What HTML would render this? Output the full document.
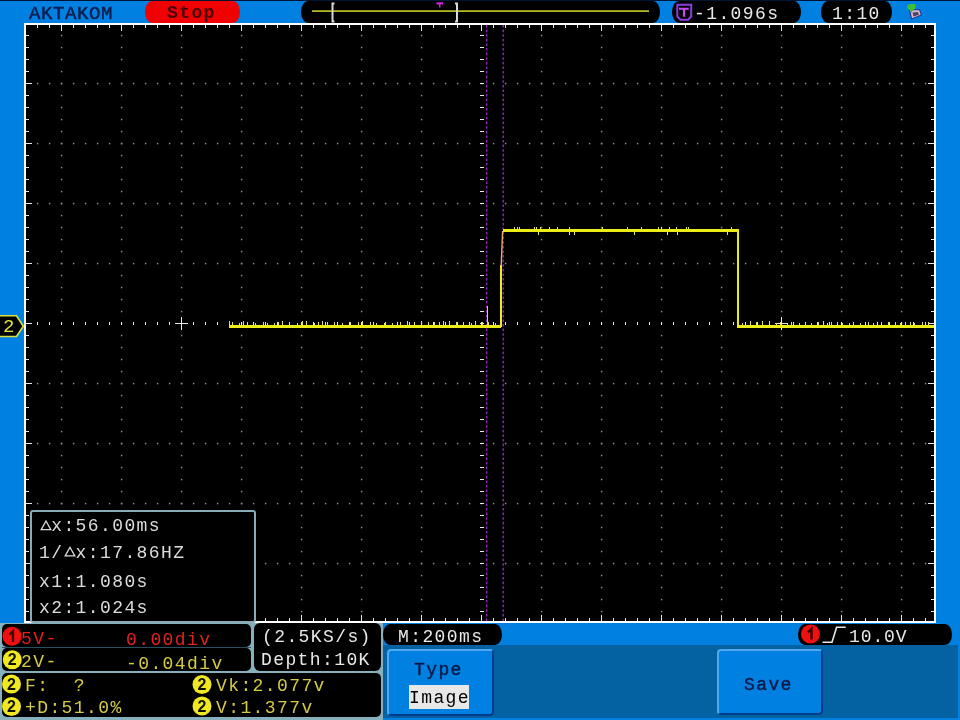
<!DOCTYPE html>
<html><head><meta charset="utf-8"><style>
html,body{margin:0;padding:0;}
body{width:960px;height:720px;position:relative;overflow:hidden;background:#0080e0;font-family:"Liberation Mono",monospace;}
.a{position:absolute;}
.t{position:absolute;white-space:pre;-webkit-font-smoothing:antialiased;will-change:transform;font-size:18px;letter-spacing:1.2px;line-height:1;}
</style></head><body>
<svg class="a" style="left:0;top:0" width="960" height="720" viewBox="0 0 960 720" shape-rendering="crispEdges">
<rect x="24" y="23" width="912" height="600" fill="#000" />
<rect x="24" y="23" width="912" height="2" fill="#fff" />
<rect x="24" y="621" width="912" height="2" fill="#fff" />
<rect x="24" y="23" width="2" height="600" fill="#fff" />
<rect x="934" y="23" width="2" height="600" fill="#fff" />
<rect x="37" y="25" width="1" height="3" fill="#e8e8e8" />
<rect x="37" y="618" width="1" height="3" fill="#e8e8e8" />
<rect x="49" y="25" width="1" height="3" fill="#e8e8e8" />
<rect x="49" y="618" width="1" height="3" fill="#e8e8e8" />
<rect x="61" y="25" width="1" height="6" fill="#e8e8e8" />
<rect x="61" y="615" width="1" height="6" fill="#e8e8e8" />
<rect x="73" y="25" width="1" height="3" fill="#e8e8e8" />
<rect x="73" y="618" width="1" height="3" fill="#e8e8e8" />
<rect x="85" y="25" width="1" height="3" fill="#e8e8e8" />
<rect x="85" y="618" width="1" height="3" fill="#e8e8e8" />
<rect x="97" y="25" width="1" height="3" fill="#e8e8e8" />
<rect x="97" y="618" width="1" height="3" fill="#e8e8e8" />
<rect x="109" y="25" width="1" height="3" fill="#e8e8e8" />
<rect x="109" y="618" width="1" height="3" fill="#e8e8e8" />
<rect x="121" y="25" width="1" height="6" fill="#e8e8e8" />
<rect x="121" y="615" width="1" height="6" fill="#e8e8e8" />
<rect x="133" y="25" width="1" height="3" fill="#e8e8e8" />
<rect x="133" y="618" width="1" height="3" fill="#e8e8e8" />
<rect x="145" y="25" width="1" height="3" fill="#e8e8e8" />
<rect x="145" y="618" width="1" height="3" fill="#e8e8e8" />
<rect x="157" y="25" width="1" height="3" fill="#e8e8e8" />
<rect x="157" y="618" width="1" height="3" fill="#e8e8e8" />
<rect x="169" y="25" width="1" height="3" fill="#e8e8e8" />
<rect x="169" y="618" width="1" height="3" fill="#e8e8e8" />
<rect x="181" y="25" width="1" height="6" fill="#e8e8e8" />
<rect x="181" y="615" width="1" height="6" fill="#e8e8e8" />
<rect x="193" y="25" width="1" height="3" fill="#e8e8e8" />
<rect x="193" y="618" width="1" height="3" fill="#e8e8e8" />
<rect x="205" y="25" width="1" height="3" fill="#e8e8e8" />
<rect x="205" y="618" width="1" height="3" fill="#e8e8e8" />
<rect x="217" y="25" width="1" height="3" fill="#e8e8e8" />
<rect x="217" y="618" width="1" height="3" fill="#e8e8e8" />
<rect x="229" y="25" width="1" height="3" fill="#e8e8e8" />
<rect x="229" y="618" width="1" height="3" fill="#e8e8e8" />
<rect x="241" y="25" width="1" height="6" fill="#e8e8e8" />
<rect x="241" y="615" width="1" height="6" fill="#e8e8e8" />
<rect x="253" y="25" width="1" height="3" fill="#e8e8e8" />
<rect x="253" y="618" width="1" height="3" fill="#e8e8e8" />
<rect x="265" y="25" width="1" height="3" fill="#e8e8e8" />
<rect x="265" y="618" width="1" height="3" fill="#e8e8e8" />
<rect x="277" y="25" width="1" height="3" fill="#e8e8e8" />
<rect x="277" y="618" width="1" height="3" fill="#e8e8e8" />
<rect x="289" y="25" width="1" height="3" fill="#e8e8e8" />
<rect x="289" y="618" width="1" height="3" fill="#e8e8e8" />
<rect x="301" y="25" width="1" height="6" fill="#e8e8e8" />
<rect x="301" y="615" width="1" height="6" fill="#e8e8e8" />
<rect x="313" y="25" width="1" height="3" fill="#e8e8e8" />
<rect x="313" y="618" width="1" height="3" fill="#e8e8e8" />
<rect x="325" y="25" width="1" height="3" fill="#e8e8e8" />
<rect x="325" y="618" width="1" height="3" fill="#e8e8e8" />
<rect x="337" y="25" width="1" height="3" fill="#e8e8e8" />
<rect x="337" y="618" width="1" height="3" fill="#e8e8e8" />
<rect x="349" y="25" width="1" height="3" fill="#e8e8e8" />
<rect x="349" y="618" width="1" height="3" fill="#e8e8e8" />
<rect x="361" y="25" width="1" height="6" fill="#e8e8e8" />
<rect x="361" y="615" width="1" height="6" fill="#e8e8e8" />
<rect x="373" y="25" width="1" height="3" fill="#e8e8e8" />
<rect x="373" y="618" width="1" height="3" fill="#e8e8e8" />
<rect x="385" y="25" width="1" height="3" fill="#e8e8e8" />
<rect x="385" y="618" width="1" height="3" fill="#e8e8e8" />
<rect x="397" y="25" width="1" height="3" fill="#e8e8e8" />
<rect x="397" y="618" width="1" height="3" fill="#e8e8e8" />
<rect x="409" y="25" width="1" height="3" fill="#e8e8e8" />
<rect x="409" y="618" width="1" height="3" fill="#e8e8e8" />
<rect x="421" y="25" width="1" height="6" fill="#e8e8e8" />
<rect x="421" y="615" width="1" height="6" fill="#e8e8e8" />
<rect x="433" y="25" width="1" height="3" fill="#e8e8e8" />
<rect x="433" y="618" width="1" height="3" fill="#e8e8e8" />
<rect x="445" y="25" width="1" height="3" fill="#e8e8e8" />
<rect x="445" y="618" width="1" height="3" fill="#e8e8e8" />
<rect x="457" y="25" width="1" height="3" fill="#e8e8e8" />
<rect x="457" y="618" width="1" height="3" fill="#e8e8e8" />
<rect x="469" y="25" width="1" height="3" fill="#e8e8e8" />
<rect x="469" y="618" width="1" height="3" fill="#e8e8e8" />
<rect x="481" y="25" width="1" height="6" fill="#e8e8e8" />
<rect x="481" y="615" width="1" height="6" fill="#e8e8e8" />
<rect x="493" y="25" width="1" height="3" fill="#e8e8e8" />
<rect x="493" y="618" width="1" height="3" fill="#e8e8e8" />
<rect x="505" y="25" width="1" height="3" fill="#e8e8e8" />
<rect x="505" y="618" width="1" height="3" fill="#e8e8e8" />
<rect x="517" y="25" width="1" height="3" fill="#e8e8e8" />
<rect x="517" y="618" width="1" height="3" fill="#e8e8e8" />
<rect x="529" y="25" width="1" height="3" fill="#e8e8e8" />
<rect x="529" y="618" width="1" height="3" fill="#e8e8e8" />
<rect x="541" y="25" width="1" height="6" fill="#e8e8e8" />
<rect x="541" y="615" width="1" height="6" fill="#e8e8e8" />
<rect x="553" y="25" width="1" height="3" fill="#e8e8e8" />
<rect x="553" y="618" width="1" height="3" fill="#e8e8e8" />
<rect x="565" y="25" width="1" height="3" fill="#e8e8e8" />
<rect x="565" y="618" width="1" height="3" fill="#e8e8e8" />
<rect x="577" y="25" width="1" height="3" fill="#e8e8e8" />
<rect x="577" y="618" width="1" height="3" fill="#e8e8e8" />
<rect x="589" y="25" width="1" height="3" fill="#e8e8e8" />
<rect x="589" y="618" width="1" height="3" fill="#e8e8e8" />
<rect x="601" y="25" width="1" height="6" fill="#e8e8e8" />
<rect x="601" y="615" width="1" height="6" fill="#e8e8e8" />
<rect x="613" y="25" width="1" height="3" fill="#e8e8e8" />
<rect x="613" y="618" width="1" height="3" fill="#e8e8e8" />
<rect x="625" y="25" width="1" height="3" fill="#e8e8e8" />
<rect x="625" y="618" width="1" height="3" fill="#e8e8e8" />
<rect x="637" y="25" width="1" height="3" fill="#e8e8e8" />
<rect x="637" y="618" width="1" height="3" fill="#e8e8e8" />
<rect x="649" y="25" width="1" height="3" fill="#e8e8e8" />
<rect x="649" y="618" width="1" height="3" fill="#e8e8e8" />
<rect x="661" y="25" width="1" height="6" fill="#e8e8e8" />
<rect x="661" y="615" width="1" height="6" fill="#e8e8e8" />
<rect x="673" y="25" width="1" height="3" fill="#e8e8e8" />
<rect x="673" y="618" width="1" height="3" fill="#e8e8e8" />
<rect x="685" y="25" width="1" height="3" fill="#e8e8e8" />
<rect x="685" y="618" width="1" height="3" fill="#e8e8e8" />
<rect x="697" y="25" width="1" height="3" fill="#e8e8e8" />
<rect x="697" y="618" width="1" height="3" fill="#e8e8e8" />
<rect x="709" y="25" width="1" height="3" fill="#e8e8e8" />
<rect x="709" y="618" width="1" height="3" fill="#e8e8e8" />
<rect x="721" y="25" width="1" height="6" fill="#e8e8e8" />
<rect x="721" y="615" width="1" height="6" fill="#e8e8e8" />
<rect x="733" y="25" width="1" height="3" fill="#e8e8e8" />
<rect x="733" y="618" width="1" height="3" fill="#e8e8e8" />
<rect x="745" y="25" width="1" height="3" fill="#e8e8e8" />
<rect x="745" y="618" width="1" height="3" fill="#e8e8e8" />
<rect x="757" y="25" width="1" height="3" fill="#e8e8e8" />
<rect x="757" y="618" width="1" height="3" fill="#e8e8e8" />
<rect x="769" y="25" width="1" height="3" fill="#e8e8e8" />
<rect x="769" y="618" width="1" height="3" fill="#e8e8e8" />
<rect x="781" y="25" width="1" height="6" fill="#e8e8e8" />
<rect x="781" y="615" width="1" height="6" fill="#e8e8e8" />
<rect x="793" y="25" width="1" height="3" fill="#e8e8e8" />
<rect x="793" y="618" width="1" height="3" fill="#e8e8e8" />
<rect x="805" y="25" width="1" height="3" fill="#e8e8e8" />
<rect x="805" y="618" width="1" height="3" fill="#e8e8e8" />
<rect x="817" y="25" width="1" height="3" fill="#e8e8e8" />
<rect x="817" y="618" width="1" height="3" fill="#e8e8e8" />
<rect x="829" y="25" width="1" height="3" fill="#e8e8e8" />
<rect x="829" y="618" width="1" height="3" fill="#e8e8e8" />
<rect x="841" y="25" width="1" height="6" fill="#e8e8e8" />
<rect x="841" y="615" width="1" height="6" fill="#e8e8e8" />
<rect x="853" y="25" width="1" height="3" fill="#e8e8e8" />
<rect x="853" y="618" width="1" height="3" fill="#e8e8e8" />
<rect x="865" y="25" width="1" height="3" fill="#e8e8e8" />
<rect x="865" y="618" width="1" height="3" fill="#e8e8e8" />
<rect x="877" y="25" width="1" height="3" fill="#e8e8e8" />
<rect x="877" y="618" width="1" height="3" fill="#e8e8e8" />
<rect x="889" y="25" width="1" height="3" fill="#e8e8e8" />
<rect x="889" y="618" width="1" height="3" fill="#e8e8e8" />
<rect x="901" y="25" width="1" height="6" fill="#e8e8e8" />
<rect x="901" y="615" width="1" height="6" fill="#e8e8e8" />
<rect x="913" y="25" width="1" height="3" fill="#e8e8e8" />
<rect x="913" y="618" width="1" height="3" fill="#e8e8e8" />
<rect x="925" y="25" width="1" height="3" fill="#e8e8e8" />
<rect x="925" y="618" width="1" height="3" fill="#e8e8e8" />
<rect x="26" y="35" width="3" height="1" fill="#e8e8e8" />
<rect x="931" y="35" width="3" height="1" fill="#e8e8e8" />
<rect x="26" y="47" width="3" height="1" fill="#e8e8e8" />
<rect x="931" y="47" width="3" height="1" fill="#e8e8e8" />
<rect x="26" y="59" width="3" height="1" fill="#e8e8e8" />
<rect x="931" y="59" width="3" height="1" fill="#e8e8e8" />
<rect x="26" y="71" width="3" height="1" fill="#e8e8e8" />
<rect x="931" y="71" width="3" height="1" fill="#e8e8e8" />
<rect x="26" y="83" width="6" height="1" fill="#e8e8e8" />
<rect x="928" y="83" width="6" height="1" fill="#e8e8e8" />
<rect x="26" y="95" width="3" height="1" fill="#e8e8e8" />
<rect x="931" y="95" width="3" height="1" fill="#e8e8e8" />
<rect x="26" y="107" width="3" height="1" fill="#e8e8e8" />
<rect x="931" y="107" width="3" height="1" fill="#e8e8e8" />
<rect x="26" y="119" width="3" height="1" fill="#e8e8e8" />
<rect x="931" y="119" width="3" height="1" fill="#e8e8e8" />
<rect x="26" y="131" width="3" height="1" fill="#e8e8e8" />
<rect x="931" y="131" width="3" height="1" fill="#e8e8e8" />
<rect x="26" y="143" width="6" height="1" fill="#e8e8e8" />
<rect x="928" y="143" width="6" height="1" fill="#e8e8e8" />
<rect x="26" y="155" width="3" height="1" fill="#e8e8e8" />
<rect x="931" y="155" width="3" height="1" fill="#e8e8e8" />
<rect x="26" y="167" width="3" height="1" fill="#e8e8e8" />
<rect x="931" y="167" width="3" height="1" fill="#e8e8e8" />
<rect x="26" y="179" width="3" height="1" fill="#e8e8e8" />
<rect x="931" y="179" width="3" height="1" fill="#e8e8e8" />
<rect x="26" y="191" width="3" height="1" fill="#e8e8e8" />
<rect x="931" y="191" width="3" height="1" fill="#e8e8e8" />
<rect x="26" y="203" width="6" height="1" fill="#e8e8e8" />
<rect x="928" y="203" width="6" height="1" fill="#e8e8e8" />
<rect x="26" y="215" width="3" height="1" fill="#e8e8e8" />
<rect x="931" y="215" width="3" height="1" fill="#e8e8e8" />
<rect x="26" y="227" width="3" height="1" fill="#e8e8e8" />
<rect x="931" y="227" width="3" height="1" fill="#e8e8e8" />
<rect x="26" y="239" width="3" height="1" fill="#e8e8e8" />
<rect x="931" y="239" width="3" height="1" fill="#e8e8e8" />
<rect x="26" y="251" width="3" height="1" fill="#e8e8e8" />
<rect x="931" y="251" width="3" height="1" fill="#e8e8e8" />
<rect x="26" y="263" width="6" height="1" fill="#e8e8e8" />
<rect x="928" y="263" width="6" height="1" fill="#e8e8e8" />
<rect x="26" y="275" width="3" height="1" fill="#e8e8e8" />
<rect x="931" y="275" width="3" height="1" fill="#e8e8e8" />
<rect x="26" y="287" width="3" height="1" fill="#e8e8e8" />
<rect x="931" y="287" width="3" height="1" fill="#e8e8e8" />
<rect x="26" y="299" width="3" height="1" fill="#e8e8e8" />
<rect x="931" y="299" width="3" height="1" fill="#e8e8e8" />
<rect x="26" y="311" width="3" height="1" fill="#e8e8e8" />
<rect x="931" y="311" width="3" height="1" fill="#e8e8e8" />
<rect x="26" y="323" width="6" height="1" fill="#e8e8e8" />
<rect x="928" y="323" width="6" height="1" fill="#e8e8e8" />
<rect x="26" y="335" width="3" height="1" fill="#e8e8e8" />
<rect x="931" y="335" width="3" height="1" fill="#e8e8e8" />
<rect x="26" y="347" width="3" height="1" fill="#e8e8e8" />
<rect x="931" y="347" width="3" height="1" fill="#e8e8e8" />
<rect x="26" y="359" width="3" height="1" fill="#e8e8e8" />
<rect x="931" y="359" width="3" height="1" fill="#e8e8e8" />
<rect x="26" y="371" width="3" height="1" fill="#e8e8e8" />
<rect x="931" y="371" width="3" height="1" fill="#e8e8e8" />
<rect x="26" y="383" width="6" height="1" fill="#e8e8e8" />
<rect x="928" y="383" width="6" height="1" fill="#e8e8e8" />
<rect x="26" y="395" width="3" height="1" fill="#e8e8e8" />
<rect x="931" y="395" width="3" height="1" fill="#e8e8e8" />
<rect x="26" y="407" width="3" height="1" fill="#e8e8e8" />
<rect x="931" y="407" width="3" height="1" fill="#e8e8e8" />
<rect x="26" y="419" width="3" height="1" fill="#e8e8e8" />
<rect x="931" y="419" width="3" height="1" fill="#e8e8e8" />
<rect x="26" y="431" width="3" height="1" fill="#e8e8e8" />
<rect x="931" y="431" width="3" height="1" fill="#e8e8e8" />
<rect x="26" y="443" width="6" height="1" fill="#e8e8e8" />
<rect x="928" y="443" width="6" height="1" fill="#e8e8e8" />
<rect x="26" y="455" width="3" height="1" fill="#e8e8e8" />
<rect x="931" y="455" width="3" height="1" fill="#e8e8e8" />
<rect x="26" y="467" width="3" height="1" fill="#e8e8e8" />
<rect x="931" y="467" width="3" height="1" fill="#e8e8e8" />
<rect x="26" y="479" width="3" height="1" fill="#e8e8e8" />
<rect x="931" y="479" width="3" height="1" fill="#e8e8e8" />
<rect x="26" y="491" width="3" height="1" fill="#e8e8e8" />
<rect x="931" y="491" width="3" height="1" fill="#e8e8e8" />
<rect x="26" y="503" width="6" height="1" fill="#e8e8e8" />
<rect x="928" y="503" width="6" height="1" fill="#e8e8e8" />
<rect x="26" y="515" width="3" height="1" fill="#e8e8e8" />
<rect x="931" y="515" width="3" height="1" fill="#e8e8e8" />
<rect x="26" y="527" width="3" height="1" fill="#e8e8e8" />
<rect x="931" y="527" width="3" height="1" fill="#e8e8e8" />
<rect x="26" y="539" width="3" height="1" fill="#e8e8e8" />
<rect x="931" y="539" width="3" height="1" fill="#e8e8e8" />
<rect x="26" y="551" width="3" height="1" fill="#e8e8e8" />
<rect x="931" y="551" width="3" height="1" fill="#e8e8e8" />
<rect x="26" y="563" width="6" height="1" fill="#e8e8e8" />
<rect x="928" y="563" width="6" height="1" fill="#e8e8e8" />
<rect x="26" y="575" width="3" height="1" fill="#e8e8e8" />
<rect x="931" y="575" width="3" height="1" fill="#e8e8e8" />
<rect x="26" y="587" width="3" height="1" fill="#e8e8e8" />
<rect x="931" y="587" width="3" height="1" fill="#e8e8e8" />
<rect x="26" y="599" width="3" height="1" fill="#e8e8e8" />
<rect x="931" y="599" width="3" height="1" fill="#e8e8e8" />
<rect x="26" y="611" width="3" height="1" fill="#e8e8e8" />
<rect x="931" y="611" width="3" height="1" fill="#e8e8e8" />
<rect x="60.85" y="34.8" width="1.5" height="1.5" fill="#8a8a8a" shape-rendering="auto"/>
<rect x="60.85" y="46.8" width="1.5" height="1.5" fill="#8a8a8a" shape-rendering="auto"/>
<rect x="60.85" y="58.8" width="1.5" height="1.5" fill="#8a8a8a" shape-rendering="auto"/>
<rect x="60.85" y="70.8" width="1.5" height="1.5" fill="#8a8a8a" shape-rendering="auto"/>
<rect x="60.85" y="82.8" width="1.5" height="1.5" fill="#8a8a8a" shape-rendering="auto"/>
<rect x="60.85" y="94.8" width="1.5" height="1.5" fill="#8a8a8a" shape-rendering="auto"/>
<rect x="60.85" y="106.8" width="1.5" height="1.5" fill="#8a8a8a" shape-rendering="auto"/>
<rect x="60.85" y="118.8" width="1.5" height="1.5" fill="#8a8a8a" shape-rendering="auto"/>
<rect x="60.85" y="130.8" width="1.5" height="1.5" fill="#8a8a8a" shape-rendering="auto"/>
<rect x="60.85" y="142.8" width="1.5" height="1.5" fill="#8a8a8a" shape-rendering="auto"/>
<rect x="60.85" y="154.8" width="1.5" height="1.5" fill="#8a8a8a" shape-rendering="auto"/>
<rect x="60.85" y="166.8" width="1.5" height="1.5" fill="#8a8a8a" shape-rendering="auto"/>
<rect x="60.85" y="178.8" width="1.5" height="1.5" fill="#8a8a8a" shape-rendering="auto"/>
<rect x="60.85" y="190.8" width="1.5" height="1.5" fill="#8a8a8a" shape-rendering="auto"/>
<rect x="60.85" y="202.8" width="1.5" height="1.5" fill="#8a8a8a" shape-rendering="auto"/>
<rect x="60.85" y="214.8" width="1.5" height="1.5" fill="#8a8a8a" shape-rendering="auto"/>
<rect x="60.85" y="226.8" width="1.5" height="1.5" fill="#8a8a8a" shape-rendering="auto"/>
<rect x="60.85" y="238.8" width="1.5" height="1.5" fill="#8a8a8a" shape-rendering="auto"/>
<rect x="60.85" y="250.8" width="1.5" height="1.5" fill="#8a8a8a" shape-rendering="auto"/>
<rect x="60.85" y="262.8" width="1.5" height="1.5" fill="#8a8a8a" shape-rendering="auto"/>
<rect x="60.85" y="274.8" width="1.5" height="1.5" fill="#8a8a8a" shape-rendering="auto"/>
<rect x="60.85" y="286.8" width="1.5" height="1.5" fill="#8a8a8a" shape-rendering="auto"/>
<rect x="60.85" y="298.8" width="1.5" height="1.5" fill="#8a8a8a" shape-rendering="auto"/>
<rect x="60.85" y="310.8" width="1.5" height="1.5" fill="#8a8a8a" shape-rendering="auto"/>
<rect x="60.85" y="322.8" width="1.5" height="1.5" fill="#8a8a8a" shape-rendering="auto"/>
<rect x="60.85" y="334.8" width="1.5" height="1.5" fill="#8a8a8a" shape-rendering="auto"/>
<rect x="60.85" y="346.8" width="1.5" height="1.5" fill="#8a8a8a" shape-rendering="auto"/>
<rect x="60.85" y="358.8" width="1.5" height="1.5" fill="#8a8a8a" shape-rendering="auto"/>
<rect x="60.85" y="370.8" width="1.5" height="1.5" fill="#8a8a8a" shape-rendering="auto"/>
<rect x="60.85" y="382.8" width="1.5" height="1.5" fill="#8a8a8a" shape-rendering="auto"/>
<rect x="60.85" y="394.8" width="1.5" height="1.5" fill="#8a8a8a" shape-rendering="auto"/>
<rect x="60.85" y="406.8" width="1.5" height="1.5" fill="#8a8a8a" shape-rendering="auto"/>
<rect x="60.85" y="418.8" width="1.5" height="1.5" fill="#8a8a8a" shape-rendering="auto"/>
<rect x="60.85" y="430.8" width="1.5" height="1.5" fill="#8a8a8a" shape-rendering="auto"/>
<rect x="60.85" y="442.8" width="1.5" height="1.5" fill="#8a8a8a" shape-rendering="auto"/>
<rect x="60.85" y="454.8" width="1.5" height="1.5" fill="#8a8a8a" shape-rendering="auto"/>
<rect x="60.85" y="466.8" width="1.5" height="1.5" fill="#8a8a8a" shape-rendering="auto"/>
<rect x="60.85" y="478.8" width="1.5" height="1.5" fill="#8a8a8a" shape-rendering="auto"/>
<rect x="60.85" y="490.8" width="1.5" height="1.5" fill="#8a8a8a" shape-rendering="auto"/>
<rect x="60.85" y="502.8" width="1.5" height="1.5" fill="#8a8a8a" shape-rendering="auto"/>
<rect x="60.85" y="514.8" width="1.5" height="1.5" fill="#8a8a8a" shape-rendering="auto"/>
<rect x="60.85" y="526.8" width="1.5" height="1.5" fill="#8a8a8a" shape-rendering="auto"/>
<rect x="60.85" y="538.8" width="1.5" height="1.5" fill="#8a8a8a" shape-rendering="auto"/>
<rect x="60.85" y="550.8" width="1.5" height="1.5" fill="#8a8a8a" shape-rendering="auto"/>
<rect x="60.85" y="562.8" width="1.5" height="1.5" fill="#8a8a8a" shape-rendering="auto"/>
<rect x="60.85" y="574.8" width="1.5" height="1.5" fill="#8a8a8a" shape-rendering="auto"/>
<rect x="60.85" y="586.8" width="1.5" height="1.5" fill="#8a8a8a" shape-rendering="auto"/>
<rect x="60.85" y="598.8" width="1.5" height="1.5" fill="#8a8a8a" shape-rendering="auto"/>
<rect x="60.85" y="610.8" width="1.5" height="1.5" fill="#8a8a8a" shape-rendering="auto"/>
<rect x="120.85" y="34.8" width="1.5" height="1.5" fill="#8a8a8a" shape-rendering="auto"/>
<rect x="120.85" y="46.8" width="1.5" height="1.5" fill="#8a8a8a" shape-rendering="auto"/>
<rect x="120.85" y="58.8" width="1.5" height="1.5" fill="#8a8a8a" shape-rendering="auto"/>
<rect x="120.85" y="70.8" width="1.5" height="1.5" fill="#8a8a8a" shape-rendering="auto"/>
<rect x="120.85" y="82.8" width="1.5" height="1.5" fill="#8a8a8a" shape-rendering="auto"/>
<rect x="120.85" y="94.8" width="1.5" height="1.5" fill="#8a8a8a" shape-rendering="auto"/>
<rect x="120.85" y="106.8" width="1.5" height="1.5" fill="#8a8a8a" shape-rendering="auto"/>
<rect x="120.85" y="118.8" width="1.5" height="1.5" fill="#8a8a8a" shape-rendering="auto"/>
<rect x="120.85" y="130.8" width="1.5" height="1.5" fill="#8a8a8a" shape-rendering="auto"/>
<rect x="120.85" y="142.8" width="1.5" height="1.5" fill="#8a8a8a" shape-rendering="auto"/>
<rect x="120.85" y="154.8" width="1.5" height="1.5" fill="#8a8a8a" shape-rendering="auto"/>
<rect x="120.85" y="166.8" width="1.5" height="1.5" fill="#8a8a8a" shape-rendering="auto"/>
<rect x="120.85" y="178.8" width="1.5" height="1.5" fill="#8a8a8a" shape-rendering="auto"/>
<rect x="120.85" y="190.8" width="1.5" height="1.5" fill="#8a8a8a" shape-rendering="auto"/>
<rect x="120.85" y="202.8" width="1.5" height="1.5" fill="#8a8a8a" shape-rendering="auto"/>
<rect x="120.85" y="214.8" width="1.5" height="1.5" fill="#8a8a8a" shape-rendering="auto"/>
<rect x="120.85" y="226.8" width="1.5" height="1.5" fill="#8a8a8a" shape-rendering="auto"/>
<rect x="120.85" y="238.8" width="1.5" height="1.5" fill="#8a8a8a" shape-rendering="auto"/>
<rect x="120.85" y="250.8" width="1.5" height="1.5" fill="#8a8a8a" shape-rendering="auto"/>
<rect x="120.85" y="262.8" width="1.5" height="1.5" fill="#8a8a8a" shape-rendering="auto"/>
<rect x="120.85" y="274.8" width="1.5" height="1.5" fill="#8a8a8a" shape-rendering="auto"/>
<rect x="120.85" y="286.8" width="1.5" height="1.5" fill="#8a8a8a" shape-rendering="auto"/>
<rect x="120.85" y="298.8" width="1.5" height="1.5" fill="#8a8a8a" shape-rendering="auto"/>
<rect x="120.85" y="310.8" width="1.5" height="1.5" fill="#8a8a8a" shape-rendering="auto"/>
<rect x="120.85" y="322.8" width="1.5" height="1.5" fill="#8a8a8a" shape-rendering="auto"/>
<rect x="120.85" y="334.8" width="1.5" height="1.5" fill="#8a8a8a" shape-rendering="auto"/>
<rect x="120.85" y="346.8" width="1.5" height="1.5" fill="#8a8a8a" shape-rendering="auto"/>
<rect x="120.85" y="358.8" width="1.5" height="1.5" fill="#8a8a8a" shape-rendering="auto"/>
<rect x="120.85" y="370.8" width="1.5" height="1.5" fill="#8a8a8a" shape-rendering="auto"/>
<rect x="120.85" y="382.8" width="1.5" height="1.5" fill="#8a8a8a" shape-rendering="auto"/>
<rect x="120.85" y="394.8" width="1.5" height="1.5" fill="#8a8a8a" shape-rendering="auto"/>
<rect x="120.85" y="406.8" width="1.5" height="1.5" fill="#8a8a8a" shape-rendering="auto"/>
<rect x="120.85" y="418.8" width="1.5" height="1.5" fill="#8a8a8a" shape-rendering="auto"/>
<rect x="120.85" y="430.8" width="1.5" height="1.5" fill="#8a8a8a" shape-rendering="auto"/>
<rect x="120.85" y="442.8" width="1.5" height="1.5" fill="#8a8a8a" shape-rendering="auto"/>
<rect x="120.85" y="454.8" width="1.5" height="1.5" fill="#8a8a8a" shape-rendering="auto"/>
<rect x="120.85" y="466.8" width="1.5" height="1.5" fill="#8a8a8a" shape-rendering="auto"/>
<rect x="120.85" y="478.8" width="1.5" height="1.5" fill="#8a8a8a" shape-rendering="auto"/>
<rect x="120.85" y="490.8" width="1.5" height="1.5" fill="#8a8a8a" shape-rendering="auto"/>
<rect x="120.85" y="502.8" width="1.5" height="1.5" fill="#8a8a8a" shape-rendering="auto"/>
<rect x="120.85" y="514.8" width="1.5" height="1.5" fill="#8a8a8a" shape-rendering="auto"/>
<rect x="120.85" y="526.8" width="1.5" height="1.5" fill="#8a8a8a" shape-rendering="auto"/>
<rect x="120.85" y="538.8" width="1.5" height="1.5" fill="#8a8a8a" shape-rendering="auto"/>
<rect x="120.85" y="550.8" width="1.5" height="1.5" fill="#8a8a8a" shape-rendering="auto"/>
<rect x="120.85" y="562.8" width="1.5" height="1.5" fill="#8a8a8a" shape-rendering="auto"/>
<rect x="120.85" y="574.8" width="1.5" height="1.5" fill="#8a8a8a" shape-rendering="auto"/>
<rect x="120.85" y="586.8" width="1.5" height="1.5" fill="#8a8a8a" shape-rendering="auto"/>
<rect x="120.85" y="598.8" width="1.5" height="1.5" fill="#8a8a8a" shape-rendering="auto"/>
<rect x="120.85" y="610.8" width="1.5" height="1.5" fill="#8a8a8a" shape-rendering="auto"/>
<rect x="180.85" y="34.8" width="1.5" height="1.5" fill="#8a8a8a" shape-rendering="auto"/>
<rect x="180.85" y="46.8" width="1.5" height="1.5" fill="#8a8a8a" shape-rendering="auto"/>
<rect x="180.85" y="58.8" width="1.5" height="1.5" fill="#8a8a8a" shape-rendering="auto"/>
<rect x="180.85" y="70.8" width="1.5" height="1.5" fill="#8a8a8a" shape-rendering="auto"/>
<rect x="180.85" y="82.8" width="1.5" height="1.5" fill="#8a8a8a" shape-rendering="auto"/>
<rect x="180.85" y="94.8" width="1.5" height="1.5" fill="#8a8a8a" shape-rendering="auto"/>
<rect x="180.85" y="106.8" width="1.5" height="1.5" fill="#8a8a8a" shape-rendering="auto"/>
<rect x="180.85" y="118.8" width="1.5" height="1.5" fill="#8a8a8a" shape-rendering="auto"/>
<rect x="180.85" y="130.8" width="1.5" height="1.5" fill="#8a8a8a" shape-rendering="auto"/>
<rect x="180.85" y="142.8" width="1.5" height="1.5" fill="#8a8a8a" shape-rendering="auto"/>
<rect x="180.85" y="154.8" width="1.5" height="1.5" fill="#8a8a8a" shape-rendering="auto"/>
<rect x="180.85" y="166.8" width="1.5" height="1.5" fill="#8a8a8a" shape-rendering="auto"/>
<rect x="180.85" y="178.8" width="1.5" height="1.5" fill="#8a8a8a" shape-rendering="auto"/>
<rect x="180.85" y="190.8" width="1.5" height="1.5" fill="#8a8a8a" shape-rendering="auto"/>
<rect x="180.85" y="202.8" width="1.5" height="1.5" fill="#8a8a8a" shape-rendering="auto"/>
<rect x="180.85" y="214.8" width="1.5" height="1.5" fill="#8a8a8a" shape-rendering="auto"/>
<rect x="180.85" y="226.8" width="1.5" height="1.5" fill="#8a8a8a" shape-rendering="auto"/>
<rect x="180.85" y="238.8" width="1.5" height="1.5" fill="#8a8a8a" shape-rendering="auto"/>
<rect x="180.85" y="250.8" width="1.5" height="1.5" fill="#8a8a8a" shape-rendering="auto"/>
<rect x="180.85" y="262.8" width="1.5" height="1.5" fill="#8a8a8a" shape-rendering="auto"/>
<rect x="180.85" y="274.8" width="1.5" height="1.5" fill="#8a8a8a" shape-rendering="auto"/>
<rect x="180.85" y="286.8" width="1.5" height="1.5" fill="#8a8a8a" shape-rendering="auto"/>
<rect x="180.85" y="298.8" width="1.5" height="1.5" fill="#8a8a8a" shape-rendering="auto"/>
<rect x="180.85" y="310.8" width="1.5" height="1.5" fill="#8a8a8a" shape-rendering="auto"/>
<rect x="180.85" y="322.8" width="1.5" height="1.5" fill="#8a8a8a" shape-rendering="auto"/>
<rect x="180.85" y="334.8" width="1.5" height="1.5" fill="#8a8a8a" shape-rendering="auto"/>
<rect x="180.85" y="346.8" width="1.5" height="1.5" fill="#8a8a8a" shape-rendering="auto"/>
<rect x="180.85" y="358.8" width="1.5" height="1.5" fill="#8a8a8a" shape-rendering="auto"/>
<rect x="180.85" y="370.8" width="1.5" height="1.5" fill="#8a8a8a" shape-rendering="auto"/>
<rect x="180.85" y="382.8" width="1.5" height="1.5" fill="#8a8a8a" shape-rendering="auto"/>
<rect x="180.85" y="394.8" width="1.5" height="1.5" fill="#8a8a8a" shape-rendering="auto"/>
<rect x="180.85" y="406.8" width="1.5" height="1.5" fill="#8a8a8a" shape-rendering="auto"/>
<rect x="180.85" y="418.8" width="1.5" height="1.5" fill="#8a8a8a" shape-rendering="auto"/>
<rect x="180.85" y="430.8" width="1.5" height="1.5" fill="#8a8a8a" shape-rendering="auto"/>
<rect x="180.85" y="442.8" width="1.5" height="1.5" fill="#8a8a8a" shape-rendering="auto"/>
<rect x="180.85" y="454.8" width="1.5" height="1.5" fill="#8a8a8a" shape-rendering="auto"/>
<rect x="180.85" y="466.8" width="1.5" height="1.5" fill="#8a8a8a" shape-rendering="auto"/>
<rect x="180.85" y="478.8" width="1.5" height="1.5" fill="#8a8a8a" shape-rendering="auto"/>
<rect x="180.85" y="490.8" width="1.5" height="1.5" fill="#8a8a8a" shape-rendering="auto"/>
<rect x="180.85" y="502.8" width="1.5" height="1.5" fill="#8a8a8a" shape-rendering="auto"/>
<rect x="180.85" y="514.8" width="1.5" height="1.5" fill="#8a8a8a" shape-rendering="auto"/>
<rect x="180.85" y="526.8" width="1.5" height="1.5" fill="#8a8a8a" shape-rendering="auto"/>
<rect x="180.85" y="538.8" width="1.5" height="1.5" fill="#8a8a8a" shape-rendering="auto"/>
<rect x="180.85" y="550.8" width="1.5" height="1.5" fill="#8a8a8a" shape-rendering="auto"/>
<rect x="180.85" y="562.8" width="1.5" height="1.5" fill="#8a8a8a" shape-rendering="auto"/>
<rect x="180.85" y="574.8" width="1.5" height="1.5" fill="#8a8a8a" shape-rendering="auto"/>
<rect x="180.85" y="586.8" width="1.5" height="1.5" fill="#8a8a8a" shape-rendering="auto"/>
<rect x="180.85" y="598.8" width="1.5" height="1.5" fill="#8a8a8a" shape-rendering="auto"/>
<rect x="180.85" y="610.8" width="1.5" height="1.5" fill="#8a8a8a" shape-rendering="auto"/>
<rect x="240.85" y="34.8" width="1.5" height="1.5" fill="#8a8a8a" shape-rendering="auto"/>
<rect x="240.85" y="46.8" width="1.5" height="1.5" fill="#8a8a8a" shape-rendering="auto"/>
<rect x="240.85" y="58.8" width="1.5" height="1.5" fill="#8a8a8a" shape-rendering="auto"/>
<rect x="240.85" y="70.8" width="1.5" height="1.5" fill="#8a8a8a" shape-rendering="auto"/>
<rect x="240.85" y="82.8" width="1.5" height="1.5" fill="#8a8a8a" shape-rendering="auto"/>
<rect x="240.85" y="94.8" width="1.5" height="1.5" fill="#8a8a8a" shape-rendering="auto"/>
<rect x="240.85" y="106.8" width="1.5" height="1.5" fill="#8a8a8a" shape-rendering="auto"/>
<rect x="240.85" y="118.8" width="1.5" height="1.5" fill="#8a8a8a" shape-rendering="auto"/>
<rect x="240.85" y="130.8" width="1.5" height="1.5" fill="#8a8a8a" shape-rendering="auto"/>
<rect x="240.85" y="142.8" width="1.5" height="1.5" fill="#8a8a8a" shape-rendering="auto"/>
<rect x="240.85" y="154.8" width="1.5" height="1.5" fill="#8a8a8a" shape-rendering="auto"/>
<rect x="240.85" y="166.8" width="1.5" height="1.5" fill="#8a8a8a" shape-rendering="auto"/>
<rect x="240.85" y="178.8" width="1.5" height="1.5" fill="#8a8a8a" shape-rendering="auto"/>
<rect x="240.85" y="190.8" width="1.5" height="1.5" fill="#8a8a8a" shape-rendering="auto"/>
<rect x="240.85" y="202.8" width="1.5" height="1.5" fill="#8a8a8a" shape-rendering="auto"/>
<rect x="240.85" y="214.8" width="1.5" height="1.5" fill="#8a8a8a" shape-rendering="auto"/>
<rect x="240.85" y="226.8" width="1.5" height="1.5" fill="#8a8a8a" shape-rendering="auto"/>
<rect x="240.85" y="238.8" width="1.5" height="1.5" fill="#8a8a8a" shape-rendering="auto"/>
<rect x="240.85" y="250.8" width="1.5" height="1.5" fill="#8a8a8a" shape-rendering="auto"/>
<rect x="240.85" y="262.8" width="1.5" height="1.5" fill="#8a8a8a" shape-rendering="auto"/>
<rect x="240.85" y="274.8" width="1.5" height="1.5" fill="#8a8a8a" shape-rendering="auto"/>
<rect x="240.85" y="286.8" width="1.5" height="1.5" fill="#8a8a8a" shape-rendering="auto"/>
<rect x="240.85" y="298.8" width="1.5" height="1.5" fill="#8a8a8a" shape-rendering="auto"/>
<rect x="240.85" y="310.8" width="1.5" height="1.5" fill="#8a8a8a" shape-rendering="auto"/>
<rect x="240.85" y="322.8" width="1.5" height="1.5" fill="#8a8a8a" shape-rendering="auto"/>
<rect x="240.85" y="334.8" width="1.5" height="1.5" fill="#8a8a8a" shape-rendering="auto"/>
<rect x="240.85" y="346.8" width="1.5" height="1.5" fill="#8a8a8a" shape-rendering="auto"/>
<rect x="240.85" y="358.8" width="1.5" height="1.5" fill="#8a8a8a" shape-rendering="auto"/>
<rect x="240.85" y="370.8" width="1.5" height="1.5" fill="#8a8a8a" shape-rendering="auto"/>
<rect x="240.85" y="382.8" width="1.5" height="1.5" fill="#8a8a8a" shape-rendering="auto"/>
<rect x="240.85" y="394.8" width="1.5" height="1.5" fill="#8a8a8a" shape-rendering="auto"/>
<rect x="240.85" y="406.8" width="1.5" height="1.5" fill="#8a8a8a" shape-rendering="auto"/>
<rect x="240.85" y="418.8" width="1.5" height="1.5" fill="#8a8a8a" shape-rendering="auto"/>
<rect x="240.85" y="430.8" width="1.5" height="1.5" fill="#8a8a8a" shape-rendering="auto"/>
<rect x="240.85" y="442.8" width="1.5" height="1.5" fill="#8a8a8a" shape-rendering="auto"/>
<rect x="240.85" y="454.8" width="1.5" height="1.5" fill="#8a8a8a" shape-rendering="auto"/>
<rect x="240.85" y="466.8" width="1.5" height="1.5" fill="#8a8a8a" shape-rendering="auto"/>
<rect x="240.85" y="478.8" width="1.5" height="1.5" fill="#8a8a8a" shape-rendering="auto"/>
<rect x="240.85" y="490.8" width="1.5" height="1.5" fill="#8a8a8a" shape-rendering="auto"/>
<rect x="240.85" y="502.8" width="1.5" height="1.5" fill="#8a8a8a" shape-rendering="auto"/>
<rect x="240.85" y="514.8" width="1.5" height="1.5" fill="#8a8a8a" shape-rendering="auto"/>
<rect x="240.85" y="526.8" width="1.5" height="1.5" fill="#8a8a8a" shape-rendering="auto"/>
<rect x="240.85" y="538.8" width="1.5" height="1.5" fill="#8a8a8a" shape-rendering="auto"/>
<rect x="240.85" y="550.8" width="1.5" height="1.5" fill="#8a8a8a" shape-rendering="auto"/>
<rect x="240.85" y="562.8" width="1.5" height="1.5" fill="#8a8a8a" shape-rendering="auto"/>
<rect x="240.85" y="574.8" width="1.5" height="1.5" fill="#8a8a8a" shape-rendering="auto"/>
<rect x="240.85" y="586.8" width="1.5" height="1.5" fill="#8a8a8a" shape-rendering="auto"/>
<rect x="240.85" y="598.8" width="1.5" height="1.5" fill="#8a8a8a" shape-rendering="auto"/>
<rect x="240.85" y="610.8" width="1.5" height="1.5" fill="#8a8a8a" shape-rendering="auto"/>
<rect x="300.85" y="34.8" width="1.5" height="1.5" fill="#8a8a8a" shape-rendering="auto"/>
<rect x="300.85" y="46.8" width="1.5" height="1.5" fill="#8a8a8a" shape-rendering="auto"/>
<rect x="300.85" y="58.8" width="1.5" height="1.5" fill="#8a8a8a" shape-rendering="auto"/>
<rect x="300.85" y="70.8" width="1.5" height="1.5" fill="#8a8a8a" shape-rendering="auto"/>
<rect x="300.85" y="82.8" width="1.5" height="1.5" fill="#8a8a8a" shape-rendering="auto"/>
<rect x="300.85" y="94.8" width="1.5" height="1.5" fill="#8a8a8a" shape-rendering="auto"/>
<rect x="300.85" y="106.8" width="1.5" height="1.5" fill="#8a8a8a" shape-rendering="auto"/>
<rect x="300.85" y="118.8" width="1.5" height="1.5" fill="#8a8a8a" shape-rendering="auto"/>
<rect x="300.85" y="130.8" width="1.5" height="1.5" fill="#8a8a8a" shape-rendering="auto"/>
<rect x="300.85" y="142.8" width="1.5" height="1.5" fill="#8a8a8a" shape-rendering="auto"/>
<rect x="300.85" y="154.8" width="1.5" height="1.5" fill="#8a8a8a" shape-rendering="auto"/>
<rect x="300.85" y="166.8" width="1.5" height="1.5" fill="#8a8a8a" shape-rendering="auto"/>
<rect x="300.85" y="178.8" width="1.5" height="1.5" fill="#8a8a8a" shape-rendering="auto"/>
<rect x="300.85" y="190.8" width="1.5" height="1.5" fill="#8a8a8a" shape-rendering="auto"/>
<rect x="300.85" y="202.8" width="1.5" height="1.5" fill="#8a8a8a" shape-rendering="auto"/>
<rect x="300.85" y="214.8" width="1.5" height="1.5" fill="#8a8a8a" shape-rendering="auto"/>
<rect x="300.85" y="226.8" width="1.5" height="1.5" fill="#8a8a8a" shape-rendering="auto"/>
<rect x="300.85" y="238.8" width="1.5" height="1.5" fill="#8a8a8a" shape-rendering="auto"/>
<rect x="300.85" y="250.8" width="1.5" height="1.5" fill="#8a8a8a" shape-rendering="auto"/>
<rect x="300.85" y="262.8" width="1.5" height="1.5" fill="#8a8a8a" shape-rendering="auto"/>
<rect x="300.85" y="274.8" width="1.5" height="1.5" fill="#8a8a8a" shape-rendering="auto"/>
<rect x="300.85" y="286.8" width="1.5" height="1.5" fill="#8a8a8a" shape-rendering="auto"/>
<rect x="300.85" y="298.8" width="1.5" height="1.5" fill="#8a8a8a" shape-rendering="auto"/>
<rect x="300.85" y="310.8" width="1.5" height="1.5" fill="#8a8a8a" shape-rendering="auto"/>
<rect x="300.85" y="322.8" width="1.5" height="1.5" fill="#8a8a8a" shape-rendering="auto"/>
<rect x="300.85" y="334.8" width="1.5" height="1.5" fill="#8a8a8a" shape-rendering="auto"/>
<rect x="300.85" y="346.8" width="1.5" height="1.5" fill="#8a8a8a" shape-rendering="auto"/>
<rect x="300.85" y="358.8" width="1.5" height="1.5" fill="#8a8a8a" shape-rendering="auto"/>
<rect x="300.85" y="370.8" width="1.5" height="1.5" fill="#8a8a8a" shape-rendering="auto"/>
<rect x="300.85" y="382.8" width="1.5" height="1.5" fill="#8a8a8a" shape-rendering="auto"/>
<rect x="300.85" y="394.8" width="1.5" height="1.5" fill="#8a8a8a" shape-rendering="auto"/>
<rect x="300.85" y="406.8" width="1.5" height="1.5" fill="#8a8a8a" shape-rendering="auto"/>
<rect x="300.85" y="418.8" width="1.5" height="1.5" fill="#8a8a8a" shape-rendering="auto"/>
<rect x="300.85" y="430.8" width="1.5" height="1.5" fill="#8a8a8a" shape-rendering="auto"/>
<rect x="300.85" y="442.8" width="1.5" height="1.5" fill="#8a8a8a" shape-rendering="auto"/>
<rect x="300.85" y="454.8" width="1.5" height="1.5" fill="#8a8a8a" shape-rendering="auto"/>
<rect x="300.85" y="466.8" width="1.5" height="1.5" fill="#8a8a8a" shape-rendering="auto"/>
<rect x="300.85" y="478.8" width="1.5" height="1.5" fill="#8a8a8a" shape-rendering="auto"/>
<rect x="300.85" y="490.8" width="1.5" height="1.5" fill="#8a8a8a" shape-rendering="auto"/>
<rect x="300.85" y="502.8" width="1.5" height="1.5" fill="#8a8a8a" shape-rendering="auto"/>
<rect x="300.85" y="514.8" width="1.5" height="1.5" fill="#8a8a8a" shape-rendering="auto"/>
<rect x="300.85" y="526.8" width="1.5" height="1.5" fill="#8a8a8a" shape-rendering="auto"/>
<rect x="300.85" y="538.8" width="1.5" height="1.5" fill="#8a8a8a" shape-rendering="auto"/>
<rect x="300.85" y="550.8" width="1.5" height="1.5" fill="#8a8a8a" shape-rendering="auto"/>
<rect x="300.85" y="562.8" width="1.5" height="1.5" fill="#8a8a8a" shape-rendering="auto"/>
<rect x="300.85" y="574.8" width="1.5" height="1.5" fill="#8a8a8a" shape-rendering="auto"/>
<rect x="300.85" y="586.8" width="1.5" height="1.5" fill="#8a8a8a" shape-rendering="auto"/>
<rect x="300.85" y="598.8" width="1.5" height="1.5" fill="#8a8a8a" shape-rendering="auto"/>
<rect x="300.85" y="610.8" width="1.5" height="1.5" fill="#8a8a8a" shape-rendering="auto"/>
<rect x="360.85" y="34.8" width="1.5" height="1.5" fill="#8a8a8a" shape-rendering="auto"/>
<rect x="360.85" y="46.8" width="1.5" height="1.5" fill="#8a8a8a" shape-rendering="auto"/>
<rect x="360.85" y="58.8" width="1.5" height="1.5" fill="#8a8a8a" shape-rendering="auto"/>
<rect x="360.85" y="70.8" width="1.5" height="1.5" fill="#8a8a8a" shape-rendering="auto"/>
<rect x="360.85" y="82.8" width="1.5" height="1.5" fill="#8a8a8a" shape-rendering="auto"/>
<rect x="360.85" y="94.8" width="1.5" height="1.5" fill="#8a8a8a" shape-rendering="auto"/>
<rect x="360.85" y="106.8" width="1.5" height="1.5" fill="#8a8a8a" shape-rendering="auto"/>
<rect x="360.85" y="118.8" width="1.5" height="1.5" fill="#8a8a8a" shape-rendering="auto"/>
<rect x="360.85" y="130.8" width="1.5" height="1.5" fill="#8a8a8a" shape-rendering="auto"/>
<rect x="360.85" y="142.8" width="1.5" height="1.5" fill="#8a8a8a" shape-rendering="auto"/>
<rect x="360.85" y="154.8" width="1.5" height="1.5" fill="#8a8a8a" shape-rendering="auto"/>
<rect x="360.85" y="166.8" width="1.5" height="1.5" fill="#8a8a8a" shape-rendering="auto"/>
<rect x="360.85" y="178.8" width="1.5" height="1.5" fill="#8a8a8a" shape-rendering="auto"/>
<rect x="360.85" y="190.8" width="1.5" height="1.5" fill="#8a8a8a" shape-rendering="auto"/>
<rect x="360.85" y="202.8" width="1.5" height="1.5" fill="#8a8a8a" shape-rendering="auto"/>
<rect x="360.85" y="214.8" width="1.5" height="1.5" fill="#8a8a8a" shape-rendering="auto"/>
<rect x="360.85" y="226.8" width="1.5" height="1.5" fill="#8a8a8a" shape-rendering="auto"/>
<rect x="360.85" y="238.8" width="1.5" height="1.5" fill="#8a8a8a" shape-rendering="auto"/>
<rect x="360.85" y="250.8" width="1.5" height="1.5" fill="#8a8a8a" shape-rendering="auto"/>
<rect x="360.85" y="262.8" width="1.5" height="1.5" fill="#8a8a8a" shape-rendering="auto"/>
<rect x="360.85" y="274.8" width="1.5" height="1.5" fill="#8a8a8a" shape-rendering="auto"/>
<rect x="360.85" y="286.8" width="1.5" height="1.5" fill="#8a8a8a" shape-rendering="auto"/>
<rect x="360.85" y="298.8" width="1.5" height="1.5" fill="#8a8a8a" shape-rendering="auto"/>
<rect x="360.85" y="310.8" width="1.5" height="1.5" fill="#8a8a8a" shape-rendering="auto"/>
<rect x="360.85" y="322.8" width="1.5" height="1.5" fill="#8a8a8a" shape-rendering="auto"/>
<rect x="360.85" y="334.8" width="1.5" height="1.5" fill="#8a8a8a" shape-rendering="auto"/>
<rect x="360.85" y="346.8" width="1.5" height="1.5" fill="#8a8a8a" shape-rendering="auto"/>
<rect x="360.85" y="358.8" width="1.5" height="1.5" fill="#8a8a8a" shape-rendering="auto"/>
<rect x="360.85" y="370.8" width="1.5" height="1.5" fill="#8a8a8a" shape-rendering="auto"/>
<rect x="360.85" y="382.8" width="1.5" height="1.5" fill="#8a8a8a" shape-rendering="auto"/>
<rect x="360.85" y="394.8" width="1.5" height="1.5" fill="#8a8a8a" shape-rendering="auto"/>
<rect x="360.85" y="406.8" width="1.5" height="1.5" fill="#8a8a8a" shape-rendering="auto"/>
<rect x="360.85" y="418.8" width="1.5" height="1.5" fill="#8a8a8a" shape-rendering="auto"/>
<rect x="360.85" y="430.8" width="1.5" height="1.5" fill="#8a8a8a" shape-rendering="auto"/>
<rect x="360.85" y="442.8" width="1.5" height="1.5" fill="#8a8a8a" shape-rendering="auto"/>
<rect x="360.85" y="454.8" width="1.5" height="1.5" fill="#8a8a8a" shape-rendering="auto"/>
<rect x="360.85" y="466.8" width="1.5" height="1.5" fill="#8a8a8a" shape-rendering="auto"/>
<rect x="360.85" y="478.8" width="1.5" height="1.5" fill="#8a8a8a" shape-rendering="auto"/>
<rect x="360.85" y="490.8" width="1.5" height="1.5" fill="#8a8a8a" shape-rendering="auto"/>
<rect x="360.85" y="502.8" width="1.5" height="1.5" fill="#8a8a8a" shape-rendering="auto"/>
<rect x="360.85" y="514.8" width="1.5" height="1.5" fill="#8a8a8a" shape-rendering="auto"/>
<rect x="360.85" y="526.8" width="1.5" height="1.5" fill="#8a8a8a" shape-rendering="auto"/>
<rect x="360.85" y="538.8" width="1.5" height="1.5" fill="#8a8a8a" shape-rendering="auto"/>
<rect x="360.85" y="550.8" width="1.5" height="1.5" fill="#8a8a8a" shape-rendering="auto"/>
<rect x="360.85" y="562.8" width="1.5" height="1.5" fill="#8a8a8a" shape-rendering="auto"/>
<rect x="360.85" y="574.8" width="1.5" height="1.5" fill="#8a8a8a" shape-rendering="auto"/>
<rect x="360.85" y="586.8" width="1.5" height="1.5" fill="#8a8a8a" shape-rendering="auto"/>
<rect x="360.85" y="598.8" width="1.5" height="1.5" fill="#8a8a8a" shape-rendering="auto"/>
<rect x="360.85" y="610.8" width="1.5" height="1.5" fill="#8a8a8a" shape-rendering="auto"/>
<rect x="420.85" y="34.8" width="1.5" height="1.5" fill="#8a8a8a" shape-rendering="auto"/>
<rect x="420.85" y="46.8" width="1.5" height="1.5" fill="#8a8a8a" shape-rendering="auto"/>
<rect x="420.85" y="58.8" width="1.5" height="1.5" fill="#8a8a8a" shape-rendering="auto"/>
<rect x="420.85" y="70.8" width="1.5" height="1.5" fill="#8a8a8a" shape-rendering="auto"/>
<rect x="420.85" y="82.8" width="1.5" height="1.5" fill="#8a8a8a" shape-rendering="auto"/>
<rect x="420.85" y="94.8" width="1.5" height="1.5" fill="#8a8a8a" shape-rendering="auto"/>
<rect x="420.85" y="106.8" width="1.5" height="1.5" fill="#8a8a8a" shape-rendering="auto"/>
<rect x="420.85" y="118.8" width="1.5" height="1.5" fill="#8a8a8a" shape-rendering="auto"/>
<rect x="420.85" y="130.8" width="1.5" height="1.5" fill="#8a8a8a" shape-rendering="auto"/>
<rect x="420.85" y="142.8" width="1.5" height="1.5" fill="#8a8a8a" shape-rendering="auto"/>
<rect x="420.85" y="154.8" width="1.5" height="1.5" fill="#8a8a8a" shape-rendering="auto"/>
<rect x="420.85" y="166.8" width="1.5" height="1.5" fill="#8a8a8a" shape-rendering="auto"/>
<rect x="420.85" y="178.8" width="1.5" height="1.5" fill="#8a8a8a" shape-rendering="auto"/>
<rect x="420.85" y="190.8" width="1.5" height="1.5" fill="#8a8a8a" shape-rendering="auto"/>
<rect x="420.85" y="202.8" width="1.5" height="1.5" fill="#8a8a8a" shape-rendering="auto"/>
<rect x="420.85" y="214.8" width="1.5" height="1.5" fill="#8a8a8a" shape-rendering="auto"/>
<rect x="420.85" y="226.8" width="1.5" height="1.5" fill="#8a8a8a" shape-rendering="auto"/>
<rect x="420.85" y="238.8" width="1.5" height="1.5" fill="#8a8a8a" shape-rendering="auto"/>
<rect x="420.85" y="250.8" width="1.5" height="1.5" fill="#8a8a8a" shape-rendering="auto"/>
<rect x="420.85" y="262.8" width="1.5" height="1.5" fill="#8a8a8a" shape-rendering="auto"/>
<rect x="420.85" y="274.8" width="1.5" height="1.5" fill="#8a8a8a" shape-rendering="auto"/>
<rect x="420.85" y="286.8" width="1.5" height="1.5" fill="#8a8a8a" shape-rendering="auto"/>
<rect x="420.85" y="298.8" width="1.5" height="1.5" fill="#8a8a8a" shape-rendering="auto"/>
<rect x="420.85" y="310.8" width="1.5" height="1.5" fill="#8a8a8a" shape-rendering="auto"/>
<rect x="420.85" y="322.8" width="1.5" height="1.5" fill="#8a8a8a" shape-rendering="auto"/>
<rect x="420.85" y="334.8" width="1.5" height="1.5" fill="#8a8a8a" shape-rendering="auto"/>
<rect x="420.85" y="346.8" width="1.5" height="1.5" fill="#8a8a8a" shape-rendering="auto"/>
<rect x="420.85" y="358.8" width="1.5" height="1.5" fill="#8a8a8a" shape-rendering="auto"/>
<rect x="420.85" y="370.8" width="1.5" height="1.5" fill="#8a8a8a" shape-rendering="auto"/>
<rect x="420.85" y="382.8" width="1.5" height="1.5" fill="#8a8a8a" shape-rendering="auto"/>
<rect x="420.85" y="394.8" width="1.5" height="1.5" fill="#8a8a8a" shape-rendering="auto"/>
<rect x="420.85" y="406.8" width="1.5" height="1.5" fill="#8a8a8a" shape-rendering="auto"/>
<rect x="420.85" y="418.8" width="1.5" height="1.5" fill="#8a8a8a" shape-rendering="auto"/>
<rect x="420.85" y="430.8" width="1.5" height="1.5" fill="#8a8a8a" shape-rendering="auto"/>
<rect x="420.85" y="442.8" width="1.5" height="1.5" fill="#8a8a8a" shape-rendering="auto"/>
<rect x="420.85" y="454.8" width="1.5" height="1.5" fill="#8a8a8a" shape-rendering="auto"/>
<rect x="420.85" y="466.8" width="1.5" height="1.5" fill="#8a8a8a" shape-rendering="auto"/>
<rect x="420.85" y="478.8" width="1.5" height="1.5" fill="#8a8a8a" shape-rendering="auto"/>
<rect x="420.85" y="490.8" width="1.5" height="1.5" fill="#8a8a8a" shape-rendering="auto"/>
<rect x="420.85" y="502.8" width="1.5" height="1.5" fill="#8a8a8a" shape-rendering="auto"/>
<rect x="420.85" y="514.8" width="1.5" height="1.5" fill="#8a8a8a" shape-rendering="auto"/>
<rect x="420.85" y="526.8" width="1.5" height="1.5" fill="#8a8a8a" shape-rendering="auto"/>
<rect x="420.85" y="538.8" width="1.5" height="1.5" fill="#8a8a8a" shape-rendering="auto"/>
<rect x="420.85" y="550.8" width="1.5" height="1.5" fill="#8a8a8a" shape-rendering="auto"/>
<rect x="420.85" y="562.8" width="1.5" height="1.5" fill="#8a8a8a" shape-rendering="auto"/>
<rect x="420.85" y="574.8" width="1.5" height="1.5" fill="#8a8a8a" shape-rendering="auto"/>
<rect x="420.85" y="586.8" width="1.5" height="1.5" fill="#8a8a8a" shape-rendering="auto"/>
<rect x="420.85" y="598.8" width="1.5" height="1.5" fill="#8a8a8a" shape-rendering="auto"/>
<rect x="420.85" y="610.8" width="1.5" height="1.5" fill="#8a8a8a" shape-rendering="auto"/>
<rect x="540.85" y="34.8" width="1.5" height="1.5" fill="#8a8a8a" shape-rendering="auto"/>
<rect x="540.85" y="46.8" width="1.5" height="1.5" fill="#8a8a8a" shape-rendering="auto"/>
<rect x="540.85" y="58.8" width="1.5" height="1.5" fill="#8a8a8a" shape-rendering="auto"/>
<rect x="540.85" y="70.8" width="1.5" height="1.5" fill="#8a8a8a" shape-rendering="auto"/>
<rect x="540.85" y="82.8" width="1.5" height="1.5" fill="#8a8a8a" shape-rendering="auto"/>
<rect x="540.85" y="94.8" width="1.5" height="1.5" fill="#8a8a8a" shape-rendering="auto"/>
<rect x="540.85" y="106.8" width="1.5" height="1.5" fill="#8a8a8a" shape-rendering="auto"/>
<rect x="540.85" y="118.8" width="1.5" height="1.5" fill="#8a8a8a" shape-rendering="auto"/>
<rect x="540.85" y="130.8" width="1.5" height="1.5" fill="#8a8a8a" shape-rendering="auto"/>
<rect x="540.85" y="142.8" width="1.5" height="1.5" fill="#8a8a8a" shape-rendering="auto"/>
<rect x="540.85" y="154.8" width="1.5" height="1.5" fill="#8a8a8a" shape-rendering="auto"/>
<rect x="540.85" y="166.8" width="1.5" height="1.5" fill="#8a8a8a" shape-rendering="auto"/>
<rect x="540.85" y="178.8" width="1.5" height="1.5" fill="#8a8a8a" shape-rendering="auto"/>
<rect x="540.85" y="190.8" width="1.5" height="1.5" fill="#8a8a8a" shape-rendering="auto"/>
<rect x="540.85" y="202.8" width="1.5" height="1.5" fill="#8a8a8a" shape-rendering="auto"/>
<rect x="540.85" y="214.8" width="1.5" height="1.5" fill="#8a8a8a" shape-rendering="auto"/>
<rect x="540.85" y="226.8" width="1.5" height="1.5" fill="#8a8a8a" shape-rendering="auto"/>
<rect x="540.85" y="238.8" width="1.5" height="1.5" fill="#8a8a8a" shape-rendering="auto"/>
<rect x="540.85" y="250.8" width="1.5" height="1.5" fill="#8a8a8a" shape-rendering="auto"/>
<rect x="540.85" y="262.8" width="1.5" height="1.5" fill="#8a8a8a" shape-rendering="auto"/>
<rect x="540.85" y="274.8" width="1.5" height="1.5" fill="#8a8a8a" shape-rendering="auto"/>
<rect x="540.85" y="286.8" width="1.5" height="1.5" fill="#8a8a8a" shape-rendering="auto"/>
<rect x="540.85" y="298.8" width="1.5" height="1.5" fill="#8a8a8a" shape-rendering="auto"/>
<rect x="540.85" y="310.8" width="1.5" height="1.5" fill="#8a8a8a" shape-rendering="auto"/>
<rect x="540.85" y="322.8" width="1.5" height="1.5" fill="#8a8a8a" shape-rendering="auto"/>
<rect x="540.85" y="334.8" width="1.5" height="1.5" fill="#8a8a8a" shape-rendering="auto"/>
<rect x="540.85" y="346.8" width="1.5" height="1.5" fill="#8a8a8a" shape-rendering="auto"/>
<rect x="540.85" y="358.8" width="1.5" height="1.5" fill="#8a8a8a" shape-rendering="auto"/>
<rect x="540.85" y="370.8" width="1.5" height="1.5" fill="#8a8a8a" shape-rendering="auto"/>
<rect x="540.85" y="382.8" width="1.5" height="1.5" fill="#8a8a8a" shape-rendering="auto"/>
<rect x="540.85" y="394.8" width="1.5" height="1.5" fill="#8a8a8a" shape-rendering="auto"/>
<rect x="540.85" y="406.8" width="1.5" height="1.5" fill="#8a8a8a" shape-rendering="auto"/>
<rect x="540.85" y="418.8" width="1.5" height="1.5" fill="#8a8a8a" shape-rendering="auto"/>
<rect x="540.85" y="430.8" width="1.5" height="1.5" fill="#8a8a8a" shape-rendering="auto"/>
<rect x="540.85" y="442.8" width="1.5" height="1.5" fill="#8a8a8a" shape-rendering="auto"/>
<rect x="540.85" y="454.8" width="1.5" height="1.5" fill="#8a8a8a" shape-rendering="auto"/>
<rect x="540.85" y="466.8" width="1.5" height="1.5" fill="#8a8a8a" shape-rendering="auto"/>
<rect x="540.85" y="478.8" width="1.5" height="1.5" fill="#8a8a8a" shape-rendering="auto"/>
<rect x="540.85" y="490.8" width="1.5" height="1.5" fill="#8a8a8a" shape-rendering="auto"/>
<rect x="540.85" y="502.8" width="1.5" height="1.5" fill="#8a8a8a" shape-rendering="auto"/>
<rect x="540.85" y="514.8" width="1.5" height="1.5" fill="#8a8a8a" shape-rendering="auto"/>
<rect x="540.85" y="526.8" width="1.5" height="1.5" fill="#8a8a8a" shape-rendering="auto"/>
<rect x="540.85" y="538.8" width="1.5" height="1.5" fill="#8a8a8a" shape-rendering="auto"/>
<rect x="540.85" y="550.8" width="1.5" height="1.5" fill="#8a8a8a" shape-rendering="auto"/>
<rect x="540.85" y="562.8" width="1.5" height="1.5" fill="#8a8a8a" shape-rendering="auto"/>
<rect x="540.85" y="574.8" width="1.5" height="1.5" fill="#8a8a8a" shape-rendering="auto"/>
<rect x="540.85" y="586.8" width="1.5" height="1.5" fill="#8a8a8a" shape-rendering="auto"/>
<rect x="540.85" y="598.8" width="1.5" height="1.5" fill="#8a8a8a" shape-rendering="auto"/>
<rect x="540.85" y="610.8" width="1.5" height="1.5" fill="#8a8a8a" shape-rendering="auto"/>
<rect x="600.85" y="34.8" width="1.5" height="1.5" fill="#8a8a8a" shape-rendering="auto"/>
<rect x="600.85" y="46.8" width="1.5" height="1.5" fill="#8a8a8a" shape-rendering="auto"/>
<rect x="600.85" y="58.8" width="1.5" height="1.5" fill="#8a8a8a" shape-rendering="auto"/>
<rect x="600.85" y="70.8" width="1.5" height="1.5" fill="#8a8a8a" shape-rendering="auto"/>
<rect x="600.85" y="82.8" width="1.5" height="1.5" fill="#8a8a8a" shape-rendering="auto"/>
<rect x="600.85" y="94.8" width="1.5" height="1.5" fill="#8a8a8a" shape-rendering="auto"/>
<rect x="600.85" y="106.8" width="1.5" height="1.5" fill="#8a8a8a" shape-rendering="auto"/>
<rect x="600.85" y="118.8" width="1.5" height="1.5" fill="#8a8a8a" shape-rendering="auto"/>
<rect x="600.85" y="130.8" width="1.5" height="1.5" fill="#8a8a8a" shape-rendering="auto"/>
<rect x="600.85" y="142.8" width="1.5" height="1.5" fill="#8a8a8a" shape-rendering="auto"/>
<rect x="600.85" y="154.8" width="1.5" height="1.5" fill="#8a8a8a" shape-rendering="auto"/>
<rect x="600.85" y="166.8" width="1.5" height="1.5" fill="#8a8a8a" shape-rendering="auto"/>
<rect x="600.85" y="178.8" width="1.5" height="1.5" fill="#8a8a8a" shape-rendering="auto"/>
<rect x="600.85" y="190.8" width="1.5" height="1.5" fill="#8a8a8a" shape-rendering="auto"/>
<rect x="600.85" y="202.8" width="1.5" height="1.5" fill="#8a8a8a" shape-rendering="auto"/>
<rect x="600.85" y="214.8" width="1.5" height="1.5" fill="#8a8a8a" shape-rendering="auto"/>
<rect x="600.85" y="226.8" width="1.5" height="1.5" fill="#8a8a8a" shape-rendering="auto"/>
<rect x="600.85" y="238.8" width="1.5" height="1.5" fill="#8a8a8a" shape-rendering="auto"/>
<rect x="600.85" y="250.8" width="1.5" height="1.5" fill="#8a8a8a" shape-rendering="auto"/>
<rect x="600.85" y="262.8" width="1.5" height="1.5" fill="#8a8a8a" shape-rendering="auto"/>
<rect x="600.85" y="274.8" width="1.5" height="1.5" fill="#8a8a8a" shape-rendering="auto"/>
<rect x="600.85" y="286.8" width="1.5" height="1.5" fill="#8a8a8a" shape-rendering="auto"/>
<rect x="600.85" y="298.8" width="1.5" height="1.5" fill="#8a8a8a" shape-rendering="auto"/>
<rect x="600.85" y="310.8" width="1.5" height="1.5" fill="#8a8a8a" shape-rendering="auto"/>
<rect x="600.85" y="322.8" width="1.5" height="1.5" fill="#8a8a8a" shape-rendering="auto"/>
<rect x="600.85" y="334.8" width="1.5" height="1.5" fill="#8a8a8a" shape-rendering="auto"/>
<rect x="600.85" y="346.8" width="1.5" height="1.5" fill="#8a8a8a" shape-rendering="auto"/>
<rect x="600.85" y="358.8" width="1.5" height="1.5" fill="#8a8a8a" shape-rendering="auto"/>
<rect x="600.85" y="370.8" width="1.5" height="1.5" fill="#8a8a8a" shape-rendering="auto"/>
<rect x="600.85" y="382.8" width="1.5" height="1.5" fill="#8a8a8a" shape-rendering="auto"/>
<rect x="600.85" y="394.8" width="1.5" height="1.5" fill="#8a8a8a" shape-rendering="auto"/>
<rect x="600.85" y="406.8" width="1.5" height="1.5" fill="#8a8a8a" shape-rendering="auto"/>
<rect x="600.85" y="418.8" width="1.5" height="1.5" fill="#8a8a8a" shape-rendering="auto"/>
<rect x="600.85" y="430.8" width="1.5" height="1.5" fill="#8a8a8a" shape-rendering="auto"/>
<rect x="600.85" y="442.8" width="1.5" height="1.5" fill="#8a8a8a" shape-rendering="auto"/>
<rect x="600.85" y="454.8" width="1.5" height="1.5" fill="#8a8a8a" shape-rendering="auto"/>
<rect x="600.85" y="466.8" width="1.5" height="1.5" fill="#8a8a8a" shape-rendering="auto"/>
<rect x="600.85" y="478.8" width="1.5" height="1.5" fill="#8a8a8a" shape-rendering="auto"/>
<rect x="600.85" y="490.8" width="1.5" height="1.5" fill="#8a8a8a" shape-rendering="auto"/>
<rect x="600.85" y="502.8" width="1.5" height="1.5" fill="#8a8a8a" shape-rendering="auto"/>
<rect x="600.85" y="514.8" width="1.5" height="1.5" fill="#8a8a8a" shape-rendering="auto"/>
<rect x="600.85" y="526.8" width="1.5" height="1.5" fill="#8a8a8a" shape-rendering="auto"/>
<rect x="600.85" y="538.8" width="1.5" height="1.5" fill="#8a8a8a" shape-rendering="auto"/>
<rect x="600.85" y="550.8" width="1.5" height="1.5" fill="#8a8a8a" shape-rendering="auto"/>
<rect x="600.85" y="562.8" width="1.5" height="1.5" fill="#8a8a8a" shape-rendering="auto"/>
<rect x="600.85" y="574.8" width="1.5" height="1.5" fill="#8a8a8a" shape-rendering="auto"/>
<rect x="600.85" y="586.8" width="1.5" height="1.5" fill="#8a8a8a" shape-rendering="auto"/>
<rect x="600.85" y="598.8" width="1.5" height="1.5" fill="#8a8a8a" shape-rendering="auto"/>
<rect x="600.85" y="610.8" width="1.5" height="1.5" fill="#8a8a8a" shape-rendering="auto"/>
<rect x="660.85" y="34.8" width="1.5" height="1.5" fill="#8a8a8a" shape-rendering="auto"/>
<rect x="660.85" y="46.8" width="1.5" height="1.5" fill="#8a8a8a" shape-rendering="auto"/>
<rect x="660.85" y="58.8" width="1.5" height="1.5" fill="#8a8a8a" shape-rendering="auto"/>
<rect x="660.85" y="70.8" width="1.5" height="1.5" fill="#8a8a8a" shape-rendering="auto"/>
<rect x="660.85" y="82.8" width="1.5" height="1.5" fill="#8a8a8a" shape-rendering="auto"/>
<rect x="660.85" y="94.8" width="1.5" height="1.5" fill="#8a8a8a" shape-rendering="auto"/>
<rect x="660.85" y="106.8" width="1.5" height="1.5" fill="#8a8a8a" shape-rendering="auto"/>
<rect x="660.85" y="118.8" width="1.5" height="1.5" fill="#8a8a8a" shape-rendering="auto"/>
<rect x="660.85" y="130.8" width="1.5" height="1.5" fill="#8a8a8a" shape-rendering="auto"/>
<rect x="660.85" y="142.8" width="1.5" height="1.5" fill="#8a8a8a" shape-rendering="auto"/>
<rect x="660.85" y="154.8" width="1.5" height="1.5" fill="#8a8a8a" shape-rendering="auto"/>
<rect x="660.85" y="166.8" width="1.5" height="1.5" fill="#8a8a8a" shape-rendering="auto"/>
<rect x="660.85" y="178.8" width="1.5" height="1.5" fill="#8a8a8a" shape-rendering="auto"/>
<rect x="660.85" y="190.8" width="1.5" height="1.5" fill="#8a8a8a" shape-rendering="auto"/>
<rect x="660.85" y="202.8" width="1.5" height="1.5" fill="#8a8a8a" shape-rendering="auto"/>
<rect x="660.85" y="214.8" width="1.5" height="1.5" fill="#8a8a8a" shape-rendering="auto"/>
<rect x="660.85" y="226.8" width="1.5" height="1.5" fill="#8a8a8a" shape-rendering="auto"/>
<rect x="660.85" y="238.8" width="1.5" height="1.5" fill="#8a8a8a" shape-rendering="auto"/>
<rect x="660.85" y="250.8" width="1.5" height="1.5" fill="#8a8a8a" shape-rendering="auto"/>
<rect x="660.85" y="262.8" width="1.5" height="1.5" fill="#8a8a8a" shape-rendering="auto"/>
<rect x="660.85" y="274.8" width="1.5" height="1.5" fill="#8a8a8a" shape-rendering="auto"/>
<rect x="660.85" y="286.8" width="1.5" height="1.5" fill="#8a8a8a" shape-rendering="auto"/>
<rect x="660.85" y="298.8" width="1.5" height="1.5" fill="#8a8a8a" shape-rendering="auto"/>
<rect x="660.85" y="310.8" width="1.5" height="1.5" fill="#8a8a8a" shape-rendering="auto"/>
<rect x="660.85" y="322.8" width="1.5" height="1.5" fill="#8a8a8a" shape-rendering="auto"/>
<rect x="660.85" y="334.8" width="1.5" height="1.5" fill="#8a8a8a" shape-rendering="auto"/>
<rect x="660.85" y="346.8" width="1.5" height="1.5" fill="#8a8a8a" shape-rendering="auto"/>
<rect x="660.85" y="358.8" width="1.5" height="1.5" fill="#8a8a8a" shape-rendering="auto"/>
<rect x="660.85" y="370.8" width="1.5" height="1.5" fill="#8a8a8a" shape-rendering="auto"/>
<rect x="660.85" y="382.8" width="1.5" height="1.5" fill="#8a8a8a" shape-rendering="auto"/>
<rect x="660.85" y="394.8" width="1.5" height="1.5" fill="#8a8a8a" shape-rendering="auto"/>
<rect x="660.85" y="406.8" width="1.5" height="1.5" fill="#8a8a8a" shape-rendering="auto"/>
<rect x="660.85" y="418.8" width="1.5" height="1.5" fill="#8a8a8a" shape-rendering="auto"/>
<rect x="660.85" y="430.8" width="1.5" height="1.5" fill="#8a8a8a" shape-rendering="auto"/>
<rect x="660.85" y="442.8" width="1.5" height="1.5" fill="#8a8a8a" shape-rendering="auto"/>
<rect x="660.85" y="454.8" width="1.5" height="1.5" fill="#8a8a8a" shape-rendering="auto"/>
<rect x="660.85" y="466.8" width="1.5" height="1.5" fill="#8a8a8a" shape-rendering="auto"/>
<rect x="660.85" y="478.8" width="1.5" height="1.5" fill="#8a8a8a" shape-rendering="auto"/>
<rect x="660.85" y="490.8" width="1.5" height="1.5" fill="#8a8a8a" shape-rendering="auto"/>
<rect x="660.85" y="502.8" width="1.5" height="1.5" fill="#8a8a8a" shape-rendering="auto"/>
<rect x="660.85" y="514.8" width="1.5" height="1.5" fill="#8a8a8a" shape-rendering="auto"/>
<rect x="660.85" y="526.8" width="1.5" height="1.5" fill="#8a8a8a" shape-rendering="auto"/>
<rect x="660.85" y="538.8" width="1.5" height="1.5" fill="#8a8a8a" shape-rendering="auto"/>
<rect x="660.85" y="550.8" width="1.5" height="1.5" fill="#8a8a8a" shape-rendering="auto"/>
<rect x="660.85" y="562.8" width="1.5" height="1.5" fill="#8a8a8a" shape-rendering="auto"/>
<rect x="660.85" y="574.8" width="1.5" height="1.5" fill="#8a8a8a" shape-rendering="auto"/>
<rect x="660.85" y="586.8" width="1.5" height="1.5" fill="#8a8a8a" shape-rendering="auto"/>
<rect x="660.85" y="598.8" width="1.5" height="1.5" fill="#8a8a8a" shape-rendering="auto"/>
<rect x="660.85" y="610.8" width="1.5" height="1.5" fill="#8a8a8a" shape-rendering="auto"/>
<rect x="720.85" y="34.8" width="1.5" height="1.5" fill="#8a8a8a" shape-rendering="auto"/>
<rect x="720.85" y="46.8" width="1.5" height="1.5" fill="#8a8a8a" shape-rendering="auto"/>
<rect x="720.85" y="58.8" width="1.5" height="1.5" fill="#8a8a8a" shape-rendering="auto"/>
<rect x="720.85" y="70.8" width="1.5" height="1.5" fill="#8a8a8a" shape-rendering="auto"/>
<rect x="720.85" y="82.8" width="1.5" height="1.5" fill="#8a8a8a" shape-rendering="auto"/>
<rect x="720.85" y="94.8" width="1.5" height="1.5" fill="#8a8a8a" shape-rendering="auto"/>
<rect x="720.85" y="106.8" width="1.5" height="1.5" fill="#8a8a8a" shape-rendering="auto"/>
<rect x="720.85" y="118.8" width="1.5" height="1.5" fill="#8a8a8a" shape-rendering="auto"/>
<rect x="720.85" y="130.8" width="1.5" height="1.5" fill="#8a8a8a" shape-rendering="auto"/>
<rect x="720.85" y="142.8" width="1.5" height="1.5" fill="#8a8a8a" shape-rendering="auto"/>
<rect x="720.85" y="154.8" width="1.5" height="1.5" fill="#8a8a8a" shape-rendering="auto"/>
<rect x="720.85" y="166.8" width="1.5" height="1.5" fill="#8a8a8a" shape-rendering="auto"/>
<rect x="720.85" y="178.8" width="1.5" height="1.5" fill="#8a8a8a" shape-rendering="auto"/>
<rect x="720.85" y="190.8" width="1.5" height="1.5" fill="#8a8a8a" shape-rendering="auto"/>
<rect x="720.85" y="202.8" width="1.5" height="1.5" fill="#8a8a8a" shape-rendering="auto"/>
<rect x="720.85" y="214.8" width="1.5" height="1.5" fill="#8a8a8a" shape-rendering="auto"/>
<rect x="720.85" y="226.8" width="1.5" height="1.5" fill="#8a8a8a" shape-rendering="auto"/>
<rect x="720.85" y="238.8" width="1.5" height="1.5" fill="#8a8a8a" shape-rendering="auto"/>
<rect x="720.85" y="250.8" width="1.5" height="1.5" fill="#8a8a8a" shape-rendering="auto"/>
<rect x="720.85" y="262.8" width="1.5" height="1.5" fill="#8a8a8a" shape-rendering="auto"/>
<rect x="720.85" y="274.8" width="1.5" height="1.5" fill="#8a8a8a" shape-rendering="auto"/>
<rect x="720.85" y="286.8" width="1.5" height="1.5" fill="#8a8a8a" shape-rendering="auto"/>
<rect x="720.85" y="298.8" width="1.5" height="1.5" fill="#8a8a8a" shape-rendering="auto"/>
<rect x="720.85" y="310.8" width="1.5" height="1.5" fill="#8a8a8a" shape-rendering="auto"/>
<rect x="720.85" y="322.8" width="1.5" height="1.5" fill="#8a8a8a" shape-rendering="auto"/>
<rect x="720.85" y="334.8" width="1.5" height="1.5" fill="#8a8a8a" shape-rendering="auto"/>
<rect x="720.85" y="346.8" width="1.5" height="1.5" fill="#8a8a8a" shape-rendering="auto"/>
<rect x="720.85" y="358.8" width="1.5" height="1.5" fill="#8a8a8a" shape-rendering="auto"/>
<rect x="720.85" y="370.8" width="1.5" height="1.5" fill="#8a8a8a" shape-rendering="auto"/>
<rect x="720.85" y="382.8" width="1.5" height="1.5" fill="#8a8a8a" shape-rendering="auto"/>
<rect x="720.85" y="394.8" width="1.5" height="1.5" fill="#8a8a8a" shape-rendering="auto"/>
<rect x="720.85" y="406.8" width="1.5" height="1.5" fill="#8a8a8a" shape-rendering="auto"/>
<rect x="720.85" y="418.8" width="1.5" height="1.5" fill="#8a8a8a" shape-rendering="auto"/>
<rect x="720.85" y="430.8" width="1.5" height="1.5" fill="#8a8a8a" shape-rendering="auto"/>
<rect x="720.85" y="442.8" width="1.5" height="1.5" fill="#8a8a8a" shape-rendering="auto"/>
<rect x="720.85" y="454.8" width="1.5" height="1.5" fill="#8a8a8a" shape-rendering="auto"/>
<rect x="720.85" y="466.8" width="1.5" height="1.5" fill="#8a8a8a" shape-rendering="auto"/>
<rect x="720.85" y="478.8" width="1.5" height="1.5" fill="#8a8a8a" shape-rendering="auto"/>
<rect x="720.85" y="490.8" width="1.5" height="1.5" fill="#8a8a8a" shape-rendering="auto"/>
<rect x="720.85" y="502.8" width="1.5" height="1.5" fill="#8a8a8a" shape-rendering="auto"/>
<rect x="720.85" y="514.8" width="1.5" height="1.5" fill="#8a8a8a" shape-rendering="auto"/>
<rect x="720.85" y="526.8" width="1.5" height="1.5" fill="#8a8a8a" shape-rendering="auto"/>
<rect x="720.85" y="538.8" width="1.5" height="1.5" fill="#8a8a8a" shape-rendering="auto"/>
<rect x="720.85" y="550.8" width="1.5" height="1.5" fill="#8a8a8a" shape-rendering="auto"/>
<rect x="720.85" y="562.8" width="1.5" height="1.5" fill="#8a8a8a" shape-rendering="auto"/>
<rect x="720.85" y="574.8" width="1.5" height="1.5" fill="#8a8a8a" shape-rendering="auto"/>
<rect x="720.85" y="586.8" width="1.5" height="1.5" fill="#8a8a8a" shape-rendering="auto"/>
<rect x="720.85" y="598.8" width="1.5" height="1.5" fill="#8a8a8a" shape-rendering="auto"/>
<rect x="720.85" y="610.8" width="1.5" height="1.5" fill="#8a8a8a" shape-rendering="auto"/>
<rect x="780.85" y="34.8" width="1.5" height="1.5" fill="#8a8a8a" shape-rendering="auto"/>
<rect x="780.85" y="46.8" width="1.5" height="1.5" fill="#8a8a8a" shape-rendering="auto"/>
<rect x="780.85" y="58.8" width="1.5" height="1.5" fill="#8a8a8a" shape-rendering="auto"/>
<rect x="780.85" y="70.8" width="1.5" height="1.5" fill="#8a8a8a" shape-rendering="auto"/>
<rect x="780.85" y="82.8" width="1.5" height="1.5" fill="#8a8a8a" shape-rendering="auto"/>
<rect x="780.85" y="94.8" width="1.5" height="1.5" fill="#8a8a8a" shape-rendering="auto"/>
<rect x="780.85" y="106.8" width="1.5" height="1.5" fill="#8a8a8a" shape-rendering="auto"/>
<rect x="780.85" y="118.8" width="1.5" height="1.5" fill="#8a8a8a" shape-rendering="auto"/>
<rect x="780.85" y="130.8" width="1.5" height="1.5" fill="#8a8a8a" shape-rendering="auto"/>
<rect x="780.85" y="142.8" width="1.5" height="1.5" fill="#8a8a8a" shape-rendering="auto"/>
<rect x="780.85" y="154.8" width="1.5" height="1.5" fill="#8a8a8a" shape-rendering="auto"/>
<rect x="780.85" y="166.8" width="1.5" height="1.5" fill="#8a8a8a" shape-rendering="auto"/>
<rect x="780.85" y="178.8" width="1.5" height="1.5" fill="#8a8a8a" shape-rendering="auto"/>
<rect x="780.85" y="190.8" width="1.5" height="1.5" fill="#8a8a8a" shape-rendering="auto"/>
<rect x="780.85" y="202.8" width="1.5" height="1.5" fill="#8a8a8a" shape-rendering="auto"/>
<rect x="780.85" y="214.8" width="1.5" height="1.5" fill="#8a8a8a" shape-rendering="auto"/>
<rect x="780.85" y="226.8" width="1.5" height="1.5" fill="#8a8a8a" shape-rendering="auto"/>
<rect x="780.85" y="238.8" width="1.5" height="1.5" fill="#8a8a8a" shape-rendering="auto"/>
<rect x="780.85" y="250.8" width="1.5" height="1.5" fill="#8a8a8a" shape-rendering="auto"/>
<rect x="780.85" y="262.8" width="1.5" height="1.5" fill="#8a8a8a" shape-rendering="auto"/>
<rect x="780.85" y="274.8" width="1.5" height="1.5" fill="#8a8a8a" shape-rendering="auto"/>
<rect x="780.85" y="286.8" width="1.5" height="1.5" fill="#8a8a8a" shape-rendering="auto"/>
<rect x="780.85" y="298.8" width="1.5" height="1.5" fill="#8a8a8a" shape-rendering="auto"/>
<rect x="780.85" y="310.8" width="1.5" height="1.5" fill="#8a8a8a" shape-rendering="auto"/>
<rect x="780.85" y="322.8" width="1.5" height="1.5" fill="#8a8a8a" shape-rendering="auto"/>
<rect x="780.85" y="334.8" width="1.5" height="1.5" fill="#8a8a8a" shape-rendering="auto"/>
<rect x="780.85" y="346.8" width="1.5" height="1.5" fill="#8a8a8a" shape-rendering="auto"/>
<rect x="780.85" y="358.8" width="1.5" height="1.5" fill="#8a8a8a" shape-rendering="auto"/>
<rect x="780.85" y="370.8" width="1.5" height="1.5" fill="#8a8a8a" shape-rendering="auto"/>
<rect x="780.85" y="382.8" width="1.5" height="1.5" fill="#8a8a8a" shape-rendering="auto"/>
<rect x="780.85" y="394.8" width="1.5" height="1.5" fill="#8a8a8a" shape-rendering="auto"/>
<rect x="780.85" y="406.8" width="1.5" height="1.5" fill="#8a8a8a" shape-rendering="auto"/>
<rect x="780.85" y="418.8" width="1.5" height="1.5" fill="#8a8a8a" shape-rendering="auto"/>
<rect x="780.85" y="430.8" width="1.5" height="1.5" fill="#8a8a8a" shape-rendering="auto"/>
<rect x="780.85" y="442.8" width="1.5" height="1.5" fill="#8a8a8a" shape-rendering="auto"/>
<rect x="780.85" y="454.8" width="1.5" height="1.5" fill="#8a8a8a" shape-rendering="auto"/>
<rect x="780.85" y="466.8" width="1.5" height="1.5" fill="#8a8a8a" shape-rendering="auto"/>
<rect x="780.85" y="478.8" width="1.5" height="1.5" fill="#8a8a8a" shape-rendering="auto"/>
<rect x="780.85" y="490.8" width="1.5" height="1.5" fill="#8a8a8a" shape-rendering="auto"/>
<rect x="780.85" y="502.8" width="1.5" height="1.5" fill="#8a8a8a" shape-rendering="auto"/>
<rect x="780.85" y="514.8" width="1.5" height="1.5" fill="#8a8a8a" shape-rendering="auto"/>
<rect x="780.85" y="526.8" width="1.5" height="1.5" fill="#8a8a8a" shape-rendering="auto"/>
<rect x="780.85" y="538.8" width="1.5" height="1.5" fill="#8a8a8a" shape-rendering="auto"/>
<rect x="780.85" y="550.8" width="1.5" height="1.5" fill="#8a8a8a" shape-rendering="auto"/>
<rect x="780.85" y="562.8" width="1.5" height="1.5" fill="#8a8a8a" shape-rendering="auto"/>
<rect x="780.85" y="574.8" width="1.5" height="1.5" fill="#8a8a8a" shape-rendering="auto"/>
<rect x="780.85" y="586.8" width="1.5" height="1.5" fill="#8a8a8a" shape-rendering="auto"/>
<rect x="780.85" y="598.8" width="1.5" height="1.5" fill="#8a8a8a" shape-rendering="auto"/>
<rect x="780.85" y="610.8" width="1.5" height="1.5" fill="#8a8a8a" shape-rendering="auto"/>
<rect x="840.85" y="34.8" width="1.5" height="1.5" fill="#8a8a8a" shape-rendering="auto"/>
<rect x="840.85" y="46.8" width="1.5" height="1.5" fill="#8a8a8a" shape-rendering="auto"/>
<rect x="840.85" y="58.8" width="1.5" height="1.5" fill="#8a8a8a" shape-rendering="auto"/>
<rect x="840.85" y="70.8" width="1.5" height="1.5" fill="#8a8a8a" shape-rendering="auto"/>
<rect x="840.85" y="82.8" width="1.5" height="1.5" fill="#8a8a8a" shape-rendering="auto"/>
<rect x="840.85" y="94.8" width="1.5" height="1.5" fill="#8a8a8a" shape-rendering="auto"/>
<rect x="840.85" y="106.8" width="1.5" height="1.5" fill="#8a8a8a" shape-rendering="auto"/>
<rect x="840.85" y="118.8" width="1.5" height="1.5" fill="#8a8a8a" shape-rendering="auto"/>
<rect x="840.85" y="130.8" width="1.5" height="1.5" fill="#8a8a8a" shape-rendering="auto"/>
<rect x="840.85" y="142.8" width="1.5" height="1.5" fill="#8a8a8a" shape-rendering="auto"/>
<rect x="840.85" y="154.8" width="1.5" height="1.5" fill="#8a8a8a" shape-rendering="auto"/>
<rect x="840.85" y="166.8" width="1.5" height="1.5" fill="#8a8a8a" shape-rendering="auto"/>
<rect x="840.85" y="178.8" width="1.5" height="1.5" fill="#8a8a8a" shape-rendering="auto"/>
<rect x="840.85" y="190.8" width="1.5" height="1.5" fill="#8a8a8a" shape-rendering="auto"/>
<rect x="840.85" y="202.8" width="1.5" height="1.5" fill="#8a8a8a" shape-rendering="auto"/>
<rect x="840.85" y="214.8" width="1.5" height="1.5" fill="#8a8a8a" shape-rendering="auto"/>
<rect x="840.85" y="226.8" width="1.5" height="1.5" fill="#8a8a8a" shape-rendering="auto"/>
<rect x="840.85" y="238.8" width="1.5" height="1.5" fill="#8a8a8a" shape-rendering="auto"/>
<rect x="840.85" y="250.8" width="1.5" height="1.5" fill="#8a8a8a" shape-rendering="auto"/>
<rect x="840.85" y="262.8" width="1.5" height="1.5" fill="#8a8a8a" shape-rendering="auto"/>
<rect x="840.85" y="274.8" width="1.5" height="1.5" fill="#8a8a8a" shape-rendering="auto"/>
<rect x="840.85" y="286.8" width="1.5" height="1.5" fill="#8a8a8a" shape-rendering="auto"/>
<rect x="840.85" y="298.8" width="1.5" height="1.5" fill="#8a8a8a" shape-rendering="auto"/>
<rect x="840.85" y="310.8" width="1.5" height="1.5" fill="#8a8a8a" shape-rendering="auto"/>
<rect x="840.85" y="322.8" width="1.5" height="1.5" fill="#8a8a8a" shape-rendering="auto"/>
<rect x="840.85" y="334.8" width="1.5" height="1.5" fill="#8a8a8a" shape-rendering="auto"/>
<rect x="840.85" y="346.8" width="1.5" height="1.5" fill="#8a8a8a" shape-rendering="auto"/>
<rect x="840.85" y="358.8" width="1.5" height="1.5" fill="#8a8a8a" shape-rendering="auto"/>
<rect x="840.85" y="370.8" width="1.5" height="1.5" fill="#8a8a8a" shape-rendering="auto"/>
<rect x="840.85" y="382.8" width="1.5" height="1.5" fill="#8a8a8a" shape-rendering="auto"/>
<rect x="840.85" y="394.8" width="1.5" height="1.5" fill="#8a8a8a" shape-rendering="auto"/>
<rect x="840.85" y="406.8" width="1.5" height="1.5" fill="#8a8a8a" shape-rendering="auto"/>
<rect x="840.85" y="418.8" width="1.5" height="1.5" fill="#8a8a8a" shape-rendering="auto"/>
<rect x="840.85" y="430.8" width="1.5" height="1.5" fill="#8a8a8a" shape-rendering="auto"/>
<rect x="840.85" y="442.8" width="1.5" height="1.5" fill="#8a8a8a" shape-rendering="auto"/>
<rect x="840.85" y="454.8" width="1.5" height="1.5" fill="#8a8a8a" shape-rendering="auto"/>
<rect x="840.85" y="466.8" width="1.5" height="1.5" fill="#8a8a8a" shape-rendering="auto"/>
<rect x="840.85" y="478.8" width="1.5" height="1.5" fill="#8a8a8a" shape-rendering="auto"/>
<rect x="840.85" y="490.8" width="1.5" height="1.5" fill="#8a8a8a" shape-rendering="auto"/>
<rect x="840.85" y="502.8" width="1.5" height="1.5" fill="#8a8a8a" shape-rendering="auto"/>
<rect x="840.85" y="514.8" width="1.5" height="1.5" fill="#8a8a8a" shape-rendering="auto"/>
<rect x="840.85" y="526.8" width="1.5" height="1.5" fill="#8a8a8a" shape-rendering="auto"/>
<rect x="840.85" y="538.8" width="1.5" height="1.5" fill="#8a8a8a" shape-rendering="auto"/>
<rect x="840.85" y="550.8" width="1.5" height="1.5" fill="#8a8a8a" shape-rendering="auto"/>
<rect x="840.85" y="562.8" width="1.5" height="1.5" fill="#8a8a8a" shape-rendering="auto"/>
<rect x="840.85" y="574.8" width="1.5" height="1.5" fill="#8a8a8a" shape-rendering="auto"/>
<rect x="840.85" y="586.8" width="1.5" height="1.5" fill="#8a8a8a" shape-rendering="auto"/>
<rect x="840.85" y="598.8" width="1.5" height="1.5" fill="#8a8a8a" shape-rendering="auto"/>
<rect x="840.85" y="610.8" width="1.5" height="1.5" fill="#8a8a8a" shape-rendering="auto"/>
<rect x="900.85" y="34.8" width="1.5" height="1.5" fill="#8a8a8a" shape-rendering="auto"/>
<rect x="900.85" y="46.8" width="1.5" height="1.5" fill="#8a8a8a" shape-rendering="auto"/>
<rect x="900.85" y="58.8" width="1.5" height="1.5" fill="#8a8a8a" shape-rendering="auto"/>
<rect x="900.85" y="70.8" width="1.5" height="1.5" fill="#8a8a8a" shape-rendering="auto"/>
<rect x="900.85" y="82.8" width="1.5" height="1.5" fill="#8a8a8a" shape-rendering="auto"/>
<rect x="900.85" y="94.8" width="1.5" height="1.5" fill="#8a8a8a" shape-rendering="auto"/>
<rect x="900.85" y="106.8" width="1.5" height="1.5" fill="#8a8a8a" shape-rendering="auto"/>
<rect x="900.85" y="118.8" width="1.5" height="1.5" fill="#8a8a8a" shape-rendering="auto"/>
<rect x="900.85" y="130.8" width="1.5" height="1.5" fill="#8a8a8a" shape-rendering="auto"/>
<rect x="900.85" y="142.8" width="1.5" height="1.5" fill="#8a8a8a" shape-rendering="auto"/>
<rect x="900.85" y="154.8" width="1.5" height="1.5" fill="#8a8a8a" shape-rendering="auto"/>
<rect x="900.85" y="166.8" width="1.5" height="1.5" fill="#8a8a8a" shape-rendering="auto"/>
<rect x="900.85" y="178.8" width="1.5" height="1.5" fill="#8a8a8a" shape-rendering="auto"/>
<rect x="900.85" y="190.8" width="1.5" height="1.5" fill="#8a8a8a" shape-rendering="auto"/>
<rect x="900.85" y="202.8" width="1.5" height="1.5" fill="#8a8a8a" shape-rendering="auto"/>
<rect x="900.85" y="214.8" width="1.5" height="1.5" fill="#8a8a8a" shape-rendering="auto"/>
<rect x="900.85" y="226.8" width="1.5" height="1.5" fill="#8a8a8a" shape-rendering="auto"/>
<rect x="900.85" y="238.8" width="1.5" height="1.5" fill="#8a8a8a" shape-rendering="auto"/>
<rect x="900.85" y="250.8" width="1.5" height="1.5" fill="#8a8a8a" shape-rendering="auto"/>
<rect x="900.85" y="262.8" width="1.5" height="1.5" fill="#8a8a8a" shape-rendering="auto"/>
<rect x="900.85" y="274.8" width="1.5" height="1.5" fill="#8a8a8a" shape-rendering="auto"/>
<rect x="900.85" y="286.8" width="1.5" height="1.5" fill="#8a8a8a" shape-rendering="auto"/>
<rect x="900.85" y="298.8" width="1.5" height="1.5" fill="#8a8a8a" shape-rendering="auto"/>
<rect x="900.85" y="310.8" width="1.5" height="1.5" fill="#8a8a8a" shape-rendering="auto"/>
<rect x="900.85" y="322.8" width="1.5" height="1.5" fill="#8a8a8a" shape-rendering="auto"/>
<rect x="900.85" y="334.8" width="1.5" height="1.5" fill="#8a8a8a" shape-rendering="auto"/>
<rect x="900.85" y="346.8" width="1.5" height="1.5" fill="#8a8a8a" shape-rendering="auto"/>
<rect x="900.85" y="358.8" width="1.5" height="1.5" fill="#8a8a8a" shape-rendering="auto"/>
<rect x="900.85" y="370.8" width="1.5" height="1.5" fill="#8a8a8a" shape-rendering="auto"/>
<rect x="900.85" y="382.8" width="1.5" height="1.5" fill="#8a8a8a" shape-rendering="auto"/>
<rect x="900.85" y="394.8" width="1.5" height="1.5" fill="#8a8a8a" shape-rendering="auto"/>
<rect x="900.85" y="406.8" width="1.5" height="1.5" fill="#8a8a8a" shape-rendering="auto"/>
<rect x="900.85" y="418.8" width="1.5" height="1.5" fill="#8a8a8a" shape-rendering="auto"/>
<rect x="900.85" y="430.8" width="1.5" height="1.5" fill="#8a8a8a" shape-rendering="auto"/>
<rect x="900.85" y="442.8" width="1.5" height="1.5" fill="#8a8a8a" shape-rendering="auto"/>
<rect x="900.85" y="454.8" width="1.5" height="1.5" fill="#8a8a8a" shape-rendering="auto"/>
<rect x="900.85" y="466.8" width="1.5" height="1.5" fill="#8a8a8a" shape-rendering="auto"/>
<rect x="900.85" y="478.8" width="1.5" height="1.5" fill="#8a8a8a" shape-rendering="auto"/>
<rect x="900.85" y="490.8" width="1.5" height="1.5" fill="#8a8a8a" shape-rendering="auto"/>
<rect x="900.85" y="502.8" width="1.5" height="1.5" fill="#8a8a8a" shape-rendering="auto"/>
<rect x="900.85" y="514.8" width="1.5" height="1.5" fill="#8a8a8a" shape-rendering="auto"/>
<rect x="900.85" y="526.8" width="1.5" height="1.5" fill="#8a8a8a" shape-rendering="auto"/>
<rect x="900.85" y="538.8" width="1.5" height="1.5" fill="#8a8a8a" shape-rendering="auto"/>
<rect x="900.85" y="550.8" width="1.5" height="1.5" fill="#8a8a8a" shape-rendering="auto"/>
<rect x="900.85" y="562.8" width="1.5" height="1.5" fill="#8a8a8a" shape-rendering="auto"/>
<rect x="900.85" y="574.8" width="1.5" height="1.5" fill="#8a8a8a" shape-rendering="auto"/>
<rect x="900.85" y="586.8" width="1.5" height="1.5" fill="#8a8a8a" shape-rendering="auto"/>
<rect x="900.85" y="598.8" width="1.5" height="1.5" fill="#8a8a8a" shape-rendering="auto"/>
<rect x="900.85" y="610.8" width="1.5" height="1.5" fill="#8a8a8a" shape-rendering="auto"/>
<rect x="36.85" y="82.8" width="1.5" height="1.5" fill="#8a8a8a" shape-rendering="auto"/>
<rect x="48.85" y="82.8" width="1.5" height="1.5" fill="#8a8a8a" shape-rendering="auto"/>
<rect x="60.85" y="82.8" width="1.5" height="1.5" fill="#8a8a8a" shape-rendering="auto"/>
<rect x="72.85" y="82.8" width="1.5" height="1.5" fill="#8a8a8a" shape-rendering="auto"/>
<rect x="84.85" y="82.8" width="1.5" height="1.5" fill="#8a8a8a" shape-rendering="auto"/>
<rect x="96.85" y="82.8" width="1.5" height="1.5" fill="#8a8a8a" shape-rendering="auto"/>
<rect x="108.85" y="82.8" width="1.5" height="1.5" fill="#8a8a8a" shape-rendering="auto"/>
<rect x="120.85" y="82.8" width="1.5" height="1.5" fill="#8a8a8a" shape-rendering="auto"/>
<rect x="132.85" y="82.8" width="1.5" height="1.5" fill="#8a8a8a" shape-rendering="auto"/>
<rect x="144.85" y="82.8" width="1.5" height="1.5" fill="#8a8a8a" shape-rendering="auto"/>
<rect x="156.85" y="82.8" width="1.5" height="1.5" fill="#8a8a8a" shape-rendering="auto"/>
<rect x="168.85" y="82.8" width="1.5" height="1.5" fill="#8a8a8a" shape-rendering="auto"/>
<rect x="180.85" y="82.8" width="1.5" height="1.5" fill="#8a8a8a" shape-rendering="auto"/>
<rect x="192.85" y="82.8" width="1.5" height="1.5" fill="#8a8a8a" shape-rendering="auto"/>
<rect x="204.85" y="82.8" width="1.5" height="1.5" fill="#8a8a8a" shape-rendering="auto"/>
<rect x="216.85" y="82.8" width="1.5" height="1.5" fill="#8a8a8a" shape-rendering="auto"/>
<rect x="228.85" y="82.8" width="1.5" height="1.5" fill="#8a8a8a" shape-rendering="auto"/>
<rect x="240.85" y="82.8" width="1.5" height="1.5" fill="#8a8a8a" shape-rendering="auto"/>
<rect x="252.85" y="82.8" width="1.5" height="1.5" fill="#8a8a8a" shape-rendering="auto"/>
<rect x="264.85" y="82.8" width="1.5" height="1.5" fill="#8a8a8a" shape-rendering="auto"/>
<rect x="276.85" y="82.8" width="1.5" height="1.5" fill="#8a8a8a" shape-rendering="auto"/>
<rect x="288.85" y="82.8" width="1.5" height="1.5" fill="#8a8a8a" shape-rendering="auto"/>
<rect x="300.85" y="82.8" width="1.5" height="1.5" fill="#8a8a8a" shape-rendering="auto"/>
<rect x="312.85" y="82.8" width="1.5" height="1.5" fill="#8a8a8a" shape-rendering="auto"/>
<rect x="324.85" y="82.8" width="1.5" height="1.5" fill="#8a8a8a" shape-rendering="auto"/>
<rect x="336.85" y="82.8" width="1.5" height="1.5" fill="#8a8a8a" shape-rendering="auto"/>
<rect x="348.85" y="82.8" width="1.5" height="1.5" fill="#8a8a8a" shape-rendering="auto"/>
<rect x="360.85" y="82.8" width="1.5" height="1.5" fill="#8a8a8a" shape-rendering="auto"/>
<rect x="372.85" y="82.8" width="1.5" height="1.5" fill="#8a8a8a" shape-rendering="auto"/>
<rect x="384.85" y="82.8" width="1.5" height="1.5" fill="#8a8a8a" shape-rendering="auto"/>
<rect x="396.85" y="82.8" width="1.5" height="1.5" fill="#8a8a8a" shape-rendering="auto"/>
<rect x="408.85" y="82.8" width="1.5" height="1.5" fill="#8a8a8a" shape-rendering="auto"/>
<rect x="420.85" y="82.8" width="1.5" height="1.5" fill="#8a8a8a" shape-rendering="auto"/>
<rect x="432.85" y="82.8" width="1.5" height="1.5" fill="#8a8a8a" shape-rendering="auto"/>
<rect x="444.85" y="82.8" width="1.5" height="1.5" fill="#8a8a8a" shape-rendering="auto"/>
<rect x="456.85" y="82.8" width="1.5" height="1.5" fill="#8a8a8a" shape-rendering="auto"/>
<rect x="468.85" y="82.8" width="1.5" height="1.5" fill="#8a8a8a" shape-rendering="auto"/>
<rect x="480.85" y="82.8" width="1.5" height="1.5" fill="#8a8a8a" shape-rendering="auto"/>
<rect x="492.85" y="82.8" width="1.5" height="1.5" fill="#8a8a8a" shape-rendering="auto"/>
<rect x="504.85" y="82.8" width="1.5" height="1.5" fill="#8a8a8a" shape-rendering="auto"/>
<rect x="516.85" y="82.8" width="1.5" height="1.5" fill="#8a8a8a" shape-rendering="auto"/>
<rect x="528.85" y="82.8" width="1.5" height="1.5" fill="#8a8a8a" shape-rendering="auto"/>
<rect x="540.85" y="82.8" width="1.5" height="1.5" fill="#8a8a8a" shape-rendering="auto"/>
<rect x="552.85" y="82.8" width="1.5" height="1.5" fill="#8a8a8a" shape-rendering="auto"/>
<rect x="564.85" y="82.8" width="1.5" height="1.5" fill="#8a8a8a" shape-rendering="auto"/>
<rect x="576.85" y="82.8" width="1.5" height="1.5" fill="#8a8a8a" shape-rendering="auto"/>
<rect x="588.85" y="82.8" width="1.5" height="1.5" fill="#8a8a8a" shape-rendering="auto"/>
<rect x="600.85" y="82.8" width="1.5" height="1.5" fill="#8a8a8a" shape-rendering="auto"/>
<rect x="612.85" y="82.8" width="1.5" height="1.5" fill="#8a8a8a" shape-rendering="auto"/>
<rect x="624.85" y="82.8" width="1.5" height="1.5" fill="#8a8a8a" shape-rendering="auto"/>
<rect x="636.85" y="82.8" width="1.5" height="1.5" fill="#8a8a8a" shape-rendering="auto"/>
<rect x="648.85" y="82.8" width="1.5" height="1.5" fill="#8a8a8a" shape-rendering="auto"/>
<rect x="660.85" y="82.8" width="1.5" height="1.5" fill="#8a8a8a" shape-rendering="auto"/>
<rect x="672.85" y="82.8" width="1.5" height="1.5" fill="#8a8a8a" shape-rendering="auto"/>
<rect x="684.85" y="82.8" width="1.5" height="1.5" fill="#8a8a8a" shape-rendering="auto"/>
<rect x="696.85" y="82.8" width="1.5" height="1.5" fill="#8a8a8a" shape-rendering="auto"/>
<rect x="708.85" y="82.8" width="1.5" height="1.5" fill="#8a8a8a" shape-rendering="auto"/>
<rect x="720.85" y="82.8" width="1.5" height="1.5" fill="#8a8a8a" shape-rendering="auto"/>
<rect x="732.85" y="82.8" width="1.5" height="1.5" fill="#8a8a8a" shape-rendering="auto"/>
<rect x="744.85" y="82.8" width="1.5" height="1.5" fill="#8a8a8a" shape-rendering="auto"/>
<rect x="756.85" y="82.8" width="1.5" height="1.5" fill="#8a8a8a" shape-rendering="auto"/>
<rect x="768.85" y="82.8" width="1.5" height="1.5" fill="#8a8a8a" shape-rendering="auto"/>
<rect x="780.85" y="82.8" width="1.5" height="1.5" fill="#8a8a8a" shape-rendering="auto"/>
<rect x="792.85" y="82.8" width="1.5" height="1.5" fill="#8a8a8a" shape-rendering="auto"/>
<rect x="804.85" y="82.8" width="1.5" height="1.5" fill="#8a8a8a" shape-rendering="auto"/>
<rect x="816.85" y="82.8" width="1.5" height="1.5" fill="#8a8a8a" shape-rendering="auto"/>
<rect x="828.85" y="82.8" width="1.5" height="1.5" fill="#8a8a8a" shape-rendering="auto"/>
<rect x="840.85" y="82.8" width="1.5" height="1.5" fill="#8a8a8a" shape-rendering="auto"/>
<rect x="852.85" y="82.8" width="1.5" height="1.5" fill="#8a8a8a" shape-rendering="auto"/>
<rect x="864.85" y="82.8" width="1.5" height="1.5" fill="#8a8a8a" shape-rendering="auto"/>
<rect x="876.85" y="82.8" width="1.5" height="1.5" fill="#8a8a8a" shape-rendering="auto"/>
<rect x="888.85" y="82.8" width="1.5" height="1.5" fill="#8a8a8a" shape-rendering="auto"/>
<rect x="900.85" y="82.8" width="1.5" height="1.5" fill="#8a8a8a" shape-rendering="auto"/>
<rect x="912.85" y="82.8" width="1.5" height="1.5" fill="#8a8a8a" shape-rendering="auto"/>
<rect x="924.85" y="82.8" width="1.5" height="1.5" fill="#8a8a8a" shape-rendering="auto"/>
<rect x="36.85" y="142.8" width="1.5" height="1.5" fill="#8a8a8a" shape-rendering="auto"/>
<rect x="48.85" y="142.8" width="1.5" height="1.5" fill="#8a8a8a" shape-rendering="auto"/>
<rect x="60.85" y="142.8" width="1.5" height="1.5" fill="#8a8a8a" shape-rendering="auto"/>
<rect x="72.85" y="142.8" width="1.5" height="1.5" fill="#8a8a8a" shape-rendering="auto"/>
<rect x="84.85" y="142.8" width="1.5" height="1.5" fill="#8a8a8a" shape-rendering="auto"/>
<rect x="96.85" y="142.8" width="1.5" height="1.5" fill="#8a8a8a" shape-rendering="auto"/>
<rect x="108.85" y="142.8" width="1.5" height="1.5" fill="#8a8a8a" shape-rendering="auto"/>
<rect x="120.85" y="142.8" width="1.5" height="1.5" fill="#8a8a8a" shape-rendering="auto"/>
<rect x="132.85" y="142.8" width="1.5" height="1.5" fill="#8a8a8a" shape-rendering="auto"/>
<rect x="144.85" y="142.8" width="1.5" height="1.5" fill="#8a8a8a" shape-rendering="auto"/>
<rect x="156.85" y="142.8" width="1.5" height="1.5" fill="#8a8a8a" shape-rendering="auto"/>
<rect x="168.85" y="142.8" width="1.5" height="1.5" fill="#8a8a8a" shape-rendering="auto"/>
<rect x="180.85" y="142.8" width="1.5" height="1.5" fill="#8a8a8a" shape-rendering="auto"/>
<rect x="192.85" y="142.8" width="1.5" height="1.5" fill="#8a8a8a" shape-rendering="auto"/>
<rect x="204.85" y="142.8" width="1.5" height="1.5" fill="#8a8a8a" shape-rendering="auto"/>
<rect x="216.85" y="142.8" width="1.5" height="1.5" fill="#8a8a8a" shape-rendering="auto"/>
<rect x="228.85" y="142.8" width="1.5" height="1.5" fill="#8a8a8a" shape-rendering="auto"/>
<rect x="240.85" y="142.8" width="1.5" height="1.5" fill="#8a8a8a" shape-rendering="auto"/>
<rect x="252.85" y="142.8" width="1.5" height="1.5" fill="#8a8a8a" shape-rendering="auto"/>
<rect x="264.85" y="142.8" width="1.5" height="1.5" fill="#8a8a8a" shape-rendering="auto"/>
<rect x="276.85" y="142.8" width="1.5" height="1.5" fill="#8a8a8a" shape-rendering="auto"/>
<rect x="288.85" y="142.8" width="1.5" height="1.5" fill="#8a8a8a" shape-rendering="auto"/>
<rect x="300.85" y="142.8" width="1.5" height="1.5" fill="#8a8a8a" shape-rendering="auto"/>
<rect x="312.85" y="142.8" width="1.5" height="1.5" fill="#8a8a8a" shape-rendering="auto"/>
<rect x="324.85" y="142.8" width="1.5" height="1.5" fill="#8a8a8a" shape-rendering="auto"/>
<rect x="336.85" y="142.8" width="1.5" height="1.5" fill="#8a8a8a" shape-rendering="auto"/>
<rect x="348.85" y="142.8" width="1.5" height="1.5" fill="#8a8a8a" shape-rendering="auto"/>
<rect x="360.85" y="142.8" width="1.5" height="1.5" fill="#8a8a8a" shape-rendering="auto"/>
<rect x="372.85" y="142.8" width="1.5" height="1.5" fill="#8a8a8a" shape-rendering="auto"/>
<rect x="384.85" y="142.8" width="1.5" height="1.5" fill="#8a8a8a" shape-rendering="auto"/>
<rect x="396.85" y="142.8" width="1.5" height="1.5" fill="#8a8a8a" shape-rendering="auto"/>
<rect x="408.85" y="142.8" width="1.5" height="1.5" fill="#8a8a8a" shape-rendering="auto"/>
<rect x="420.85" y="142.8" width="1.5" height="1.5" fill="#8a8a8a" shape-rendering="auto"/>
<rect x="432.85" y="142.8" width="1.5" height="1.5" fill="#8a8a8a" shape-rendering="auto"/>
<rect x="444.85" y="142.8" width="1.5" height="1.5" fill="#8a8a8a" shape-rendering="auto"/>
<rect x="456.85" y="142.8" width="1.5" height="1.5" fill="#8a8a8a" shape-rendering="auto"/>
<rect x="468.85" y="142.8" width="1.5" height="1.5" fill="#8a8a8a" shape-rendering="auto"/>
<rect x="480.85" y="142.8" width="1.5" height="1.5" fill="#8a8a8a" shape-rendering="auto"/>
<rect x="492.85" y="142.8" width="1.5" height="1.5" fill="#8a8a8a" shape-rendering="auto"/>
<rect x="504.85" y="142.8" width="1.5" height="1.5" fill="#8a8a8a" shape-rendering="auto"/>
<rect x="516.85" y="142.8" width="1.5" height="1.5" fill="#8a8a8a" shape-rendering="auto"/>
<rect x="528.85" y="142.8" width="1.5" height="1.5" fill="#8a8a8a" shape-rendering="auto"/>
<rect x="540.85" y="142.8" width="1.5" height="1.5" fill="#8a8a8a" shape-rendering="auto"/>
<rect x="552.85" y="142.8" width="1.5" height="1.5" fill="#8a8a8a" shape-rendering="auto"/>
<rect x="564.85" y="142.8" width="1.5" height="1.5" fill="#8a8a8a" shape-rendering="auto"/>
<rect x="576.85" y="142.8" width="1.5" height="1.5" fill="#8a8a8a" shape-rendering="auto"/>
<rect x="588.85" y="142.8" width="1.5" height="1.5" fill="#8a8a8a" shape-rendering="auto"/>
<rect x="600.85" y="142.8" width="1.5" height="1.5" fill="#8a8a8a" shape-rendering="auto"/>
<rect x="612.85" y="142.8" width="1.5" height="1.5" fill="#8a8a8a" shape-rendering="auto"/>
<rect x="624.85" y="142.8" width="1.5" height="1.5" fill="#8a8a8a" shape-rendering="auto"/>
<rect x="636.85" y="142.8" width="1.5" height="1.5" fill="#8a8a8a" shape-rendering="auto"/>
<rect x="648.85" y="142.8" width="1.5" height="1.5" fill="#8a8a8a" shape-rendering="auto"/>
<rect x="660.85" y="142.8" width="1.5" height="1.5" fill="#8a8a8a" shape-rendering="auto"/>
<rect x="672.85" y="142.8" width="1.5" height="1.5" fill="#8a8a8a" shape-rendering="auto"/>
<rect x="684.85" y="142.8" width="1.5" height="1.5" fill="#8a8a8a" shape-rendering="auto"/>
<rect x="696.85" y="142.8" width="1.5" height="1.5" fill="#8a8a8a" shape-rendering="auto"/>
<rect x="708.85" y="142.8" width="1.5" height="1.5" fill="#8a8a8a" shape-rendering="auto"/>
<rect x="720.85" y="142.8" width="1.5" height="1.5" fill="#8a8a8a" shape-rendering="auto"/>
<rect x="732.85" y="142.8" width="1.5" height="1.5" fill="#8a8a8a" shape-rendering="auto"/>
<rect x="744.85" y="142.8" width="1.5" height="1.5" fill="#8a8a8a" shape-rendering="auto"/>
<rect x="756.85" y="142.8" width="1.5" height="1.5" fill="#8a8a8a" shape-rendering="auto"/>
<rect x="768.85" y="142.8" width="1.5" height="1.5" fill="#8a8a8a" shape-rendering="auto"/>
<rect x="780.85" y="142.8" width="1.5" height="1.5" fill="#8a8a8a" shape-rendering="auto"/>
<rect x="792.85" y="142.8" width="1.5" height="1.5" fill="#8a8a8a" shape-rendering="auto"/>
<rect x="804.85" y="142.8" width="1.5" height="1.5" fill="#8a8a8a" shape-rendering="auto"/>
<rect x="816.85" y="142.8" width="1.5" height="1.5" fill="#8a8a8a" shape-rendering="auto"/>
<rect x="828.85" y="142.8" width="1.5" height="1.5" fill="#8a8a8a" shape-rendering="auto"/>
<rect x="840.85" y="142.8" width="1.5" height="1.5" fill="#8a8a8a" shape-rendering="auto"/>
<rect x="852.85" y="142.8" width="1.5" height="1.5" fill="#8a8a8a" shape-rendering="auto"/>
<rect x="864.85" y="142.8" width="1.5" height="1.5" fill="#8a8a8a" shape-rendering="auto"/>
<rect x="876.85" y="142.8" width="1.5" height="1.5" fill="#8a8a8a" shape-rendering="auto"/>
<rect x="888.85" y="142.8" width="1.5" height="1.5" fill="#8a8a8a" shape-rendering="auto"/>
<rect x="900.85" y="142.8" width="1.5" height="1.5" fill="#8a8a8a" shape-rendering="auto"/>
<rect x="912.85" y="142.8" width="1.5" height="1.5" fill="#8a8a8a" shape-rendering="auto"/>
<rect x="924.85" y="142.8" width="1.5" height="1.5" fill="#8a8a8a" shape-rendering="auto"/>
<rect x="36.85" y="202.8" width="1.5" height="1.5" fill="#8a8a8a" shape-rendering="auto"/>
<rect x="48.85" y="202.8" width="1.5" height="1.5" fill="#8a8a8a" shape-rendering="auto"/>
<rect x="60.85" y="202.8" width="1.5" height="1.5" fill="#8a8a8a" shape-rendering="auto"/>
<rect x="72.85" y="202.8" width="1.5" height="1.5" fill="#8a8a8a" shape-rendering="auto"/>
<rect x="84.85" y="202.8" width="1.5" height="1.5" fill="#8a8a8a" shape-rendering="auto"/>
<rect x="96.85" y="202.8" width="1.5" height="1.5" fill="#8a8a8a" shape-rendering="auto"/>
<rect x="108.85" y="202.8" width="1.5" height="1.5" fill="#8a8a8a" shape-rendering="auto"/>
<rect x="120.85" y="202.8" width="1.5" height="1.5" fill="#8a8a8a" shape-rendering="auto"/>
<rect x="132.85" y="202.8" width="1.5" height="1.5" fill="#8a8a8a" shape-rendering="auto"/>
<rect x="144.85" y="202.8" width="1.5" height="1.5" fill="#8a8a8a" shape-rendering="auto"/>
<rect x="156.85" y="202.8" width="1.5" height="1.5" fill="#8a8a8a" shape-rendering="auto"/>
<rect x="168.85" y="202.8" width="1.5" height="1.5" fill="#8a8a8a" shape-rendering="auto"/>
<rect x="180.85" y="202.8" width="1.5" height="1.5" fill="#8a8a8a" shape-rendering="auto"/>
<rect x="192.85" y="202.8" width="1.5" height="1.5" fill="#8a8a8a" shape-rendering="auto"/>
<rect x="204.85" y="202.8" width="1.5" height="1.5" fill="#8a8a8a" shape-rendering="auto"/>
<rect x="216.85" y="202.8" width="1.5" height="1.5" fill="#8a8a8a" shape-rendering="auto"/>
<rect x="228.85" y="202.8" width="1.5" height="1.5" fill="#8a8a8a" shape-rendering="auto"/>
<rect x="240.85" y="202.8" width="1.5" height="1.5" fill="#8a8a8a" shape-rendering="auto"/>
<rect x="252.85" y="202.8" width="1.5" height="1.5" fill="#8a8a8a" shape-rendering="auto"/>
<rect x="264.85" y="202.8" width="1.5" height="1.5" fill="#8a8a8a" shape-rendering="auto"/>
<rect x="276.85" y="202.8" width="1.5" height="1.5" fill="#8a8a8a" shape-rendering="auto"/>
<rect x="288.85" y="202.8" width="1.5" height="1.5" fill="#8a8a8a" shape-rendering="auto"/>
<rect x="300.85" y="202.8" width="1.5" height="1.5" fill="#8a8a8a" shape-rendering="auto"/>
<rect x="312.85" y="202.8" width="1.5" height="1.5" fill="#8a8a8a" shape-rendering="auto"/>
<rect x="324.85" y="202.8" width="1.5" height="1.5" fill="#8a8a8a" shape-rendering="auto"/>
<rect x="336.85" y="202.8" width="1.5" height="1.5" fill="#8a8a8a" shape-rendering="auto"/>
<rect x="348.85" y="202.8" width="1.5" height="1.5" fill="#8a8a8a" shape-rendering="auto"/>
<rect x="360.85" y="202.8" width="1.5" height="1.5" fill="#8a8a8a" shape-rendering="auto"/>
<rect x="372.85" y="202.8" width="1.5" height="1.5" fill="#8a8a8a" shape-rendering="auto"/>
<rect x="384.85" y="202.8" width="1.5" height="1.5" fill="#8a8a8a" shape-rendering="auto"/>
<rect x="396.85" y="202.8" width="1.5" height="1.5" fill="#8a8a8a" shape-rendering="auto"/>
<rect x="408.85" y="202.8" width="1.5" height="1.5" fill="#8a8a8a" shape-rendering="auto"/>
<rect x="420.85" y="202.8" width="1.5" height="1.5" fill="#8a8a8a" shape-rendering="auto"/>
<rect x="432.85" y="202.8" width="1.5" height="1.5" fill="#8a8a8a" shape-rendering="auto"/>
<rect x="444.85" y="202.8" width="1.5" height="1.5" fill="#8a8a8a" shape-rendering="auto"/>
<rect x="456.85" y="202.8" width="1.5" height="1.5" fill="#8a8a8a" shape-rendering="auto"/>
<rect x="468.85" y="202.8" width="1.5" height="1.5" fill="#8a8a8a" shape-rendering="auto"/>
<rect x="480.85" y="202.8" width="1.5" height="1.5" fill="#8a8a8a" shape-rendering="auto"/>
<rect x="492.85" y="202.8" width="1.5" height="1.5" fill="#8a8a8a" shape-rendering="auto"/>
<rect x="504.85" y="202.8" width="1.5" height="1.5" fill="#8a8a8a" shape-rendering="auto"/>
<rect x="516.85" y="202.8" width="1.5" height="1.5" fill="#8a8a8a" shape-rendering="auto"/>
<rect x="528.85" y="202.8" width="1.5" height="1.5" fill="#8a8a8a" shape-rendering="auto"/>
<rect x="540.85" y="202.8" width="1.5" height="1.5" fill="#8a8a8a" shape-rendering="auto"/>
<rect x="552.85" y="202.8" width="1.5" height="1.5" fill="#8a8a8a" shape-rendering="auto"/>
<rect x="564.85" y="202.8" width="1.5" height="1.5" fill="#8a8a8a" shape-rendering="auto"/>
<rect x="576.85" y="202.8" width="1.5" height="1.5" fill="#8a8a8a" shape-rendering="auto"/>
<rect x="588.85" y="202.8" width="1.5" height="1.5" fill="#8a8a8a" shape-rendering="auto"/>
<rect x="600.85" y="202.8" width="1.5" height="1.5" fill="#8a8a8a" shape-rendering="auto"/>
<rect x="612.85" y="202.8" width="1.5" height="1.5" fill="#8a8a8a" shape-rendering="auto"/>
<rect x="624.85" y="202.8" width="1.5" height="1.5" fill="#8a8a8a" shape-rendering="auto"/>
<rect x="636.85" y="202.8" width="1.5" height="1.5" fill="#8a8a8a" shape-rendering="auto"/>
<rect x="648.85" y="202.8" width="1.5" height="1.5" fill="#8a8a8a" shape-rendering="auto"/>
<rect x="660.85" y="202.8" width="1.5" height="1.5" fill="#8a8a8a" shape-rendering="auto"/>
<rect x="672.85" y="202.8" width="1.5" height="1.5" fill="#8a8a8a" shape-rendering="auto"/>
<rect x="684.85" y="202.8" width="1.5" height="1.5" fill="#8a8a8a" shape-rendering="auto"/>
<rect x="696.85" y="202.8" width="1.5" height="1.5" fill="#8a8a8a" shape-rendering="auto"/>
<rect x="708.85" y="202.8" width="1.5" height="1.5" fill="#8a8a8a" shape-rendering="auto"/>
<rect x="720.85" y="202.8" width="1.5" height="1.5" fill="#8a8a8a" shape-rendering="auto"/>
<rect x="732.85" y="202.8" width="1.5" height="1.5" fill="#8a8a8a" shape-rendering="auto"/>
<rect x="744.85" y="202.8" width="1.5" height="1.5" fill="#8a8a8a" shape-rendering="auto"/>
<rect x="756.85" y="202.8" width="1.5" height="1.5" fill="#8a8a8a" shape-rendering="auto"/>
<rect x="768.85" y="202.8" width="1.5" height="1.5" fill="#8a8a8a" shape-rendering="auto"/>
<rect x="780.85" y="202.8" width="1.5" height="1.5" fill="#8a8a8a" shape-rendering="auto"/>
<rect x="792.85" y="202.8" width="1.5" height="1.5" fill="#8a8a8a" shape-rendering="auto"/>
<rect x="804.85" y="202.8" width="1.5" height="1.5" fill="#8a8a8a" shape-rendering="auto"/>
<rect x="816.85" y="202.8" width="1.5" height="1.5" fill="#8a8a8a" shape-rendering="auto"/>
<rect x="828.85" y="202.8" width="1.5" height="1.5" fill="#8a8a8a" shape-rendering="auto"/>
<rect x="840.85" y="202.8" width="1.5" height="1.5" fill="#8a8a8a" shape-rendering="auto"/>
<rect x="852.85" y="202.8" width="1.5" height="1.5" fill="#8a8a8a" shape-rendering="auto"/>
<rect x="864.85" y="202.8" width="1.5" height="1.5" fill="#8a8a8a" shape-rendering="auto"/>
<rect x="876.85" y="202.8" width="1.5" height="1.5" fill="#8a8a8a" shape-rendering="auto"/>
<rect x="888.85" y="202.8" width="1.5" height="1.5" fill="#8a8a8a" shape-rendering="auto"/>
<rect x="900.85" y="202.8" width="1.5" height="1.5" fill="#8a8a8a" shape-rendering="auto"/>
<rect x="912.85" y="202.8" width="1.5" height="1.5" fill="#8a8a8a" shape-rendering="auto"/>
<rect x="924.85" y="202.8" width="1.5" height="1.5" fill="#8a8a8a" shape-rendering="auto"/>
<rect x="36.85" y="262.8" width="1.5" height="1.5" fill="#8a8a8a" shape-rendering="auto"/>
<rect x="48.85" y="262.8" width="1.5" height="1.5" fill="#8a8a8a" shape-rendering="auto"/>
<rect x="60.85" y="262.8" width="1.5" height="1.5" fill="#8a8a8a" shape-rendering="auto"/>
<rect x="72.85" y="262.8" width="1.5" height="1.5" fill="#8a8a8a" shape-rendering="auto"/>
<rect x="84.85" y="262.8" width="1.5" height="1.5" fill="#8a8a8a" shape-rendering="auto"/>
<rect x="96.85" y="262.8" width="1.5" height="1.5" fill="#8a8a8a" shape-rendering="auto"/>
<rect x="108.85" y="262.8" width="1.5" height="1.5" fill="#8a8a8a" shape-rendering="auto"/>
<rect x="120.85" y="262.8" width="1.5" height="1.5" fill="#8a8a8a" shape-rendering="auto"/>
<rect x="132.85" y="262.8" width="1.5" height="1.5" fill="#8a8a8a" shape-rendering="auto"/>
<rect x="144.85" y="262.8" width="1.5" height="1.5" fill="#8a8a8a" shape-rendering="auto"/>
<rect x="156.85" y="262.8" width="1.5" height="1.5" fill="#8a8a8a" shape-rendering="auto"/>
<rect x="168.85" y="262.8" width="1.5" height="1.5" fill="#8a8a8a" shape-rendering="auto"/>
<rect x="180.85" y="262.8" width="1.5" height="1.5" fill="#8a8a8a" shape-rendering="auto"/>
<rect x="192.85" y="262.8" width="1.5" height="1.5" fill="#8a8a8a" shape-rendering="auto"/>
<rect x="204.85" y="262.8" width="1.5" height="1.5" fill="#8a8a8a" shape-rendering="auto"/>
<rect x="216.85" y="262.8" width="1.5" height="1.5" fill="#8a8a8a" shape-rendering="auto"/>
<rect x="228.85" y="262.8" width="1.5" height="1.5" fill="#8a8a8a" shape-rendering="auto"/>
<rect x="240.85" y="262.8" width="1.5" height="1.5" fill="#8a8a8a" shape-rendering="auto"/>
<rect x="252.85" y="262.8" width="1.5" height="1.5" fill="#8a8a8a" shape-rendering="auto"/>
<rect x="264.85" y="262.8" width="1.5" height="1.5" fill="#8a8a8a" shape-rendering="auto"/>
<rect x="276.85" y="262.8" width="1.5" height="1.5" fill="#8a8a8a" shape-rendering="auto"/>
<rect x="288.85" y="262.8" width="1.5" height="1.5" fill="#8a8a8a" shape-rendering="auto"/>
<rect x="300.85" y="262.8" width="1.5" height="1.5" fill="#8a8a8a" shape-rendering="auto"/>
<rect x="312.85" y="262.8" width="1.5" height="1.5" fill="#8a8a8a" shape-rendering="auto"/>
<rect x="324.85" y="262.8" width="1.5" height="1.5" fill="#8a8a8a" shape-rendering="auto"/>
<rect x="336.85" y="262.8" width="1.5" height="1.5" fill="#8a8a8a" shape-rendering="auto"/>
<rect x="348.85" y="262.8" width="1.5" height="1.5" fill="#8a8a8a" shape-rendering="auto"/>
<rect x="360.85" y="262.8" width="1.5" height="1.5" fill="#8a8a8a" shape-rendering="auto"/>
<rect x="372.85" y="262.8" width="1.5" height="1.5" fill="#8a8a8a" shape-rendering="auto"/>
<rect x="384.85" y="262.8" width="1.5" height="1.5" fill="#8a8a8a" shape-rendering="auto"/>
<rect x="396.85" y="262.8" width="1.5" height="1.5" fill="#8a8a8a" shape-rendering="auto"/>
<rect x="408.85" y="262.8" width="1.5" height="1.5" fill="#8a8a8a" shape-rendering="auto"/>
<rect x="420.85" y="262.8" width="1.5" height="1.5" fill="#8a8a8a" shape-rendering="auto"/>
<rect x="432.85" y="262.8" width="1.5" height="1.5" fill="#8a8a8a" shape-rendering="auto"/>
<rect x="444.85" y="262.8" width="1.5" height="1.5" fill="#8a8a8a" shape-rendering="auto"/>
<rect x="456.85" y="262.8" width="1.5" height="1.5" fill="#8a8a8a" shape-rendering="auto"/>
<rect x="468.85" y="262.8" width="1.5" height="1.5" fill="#8a8a8a" shape-rendering="auto"/>
<rect x="480.85" y="262.8" width="1.5" height="1.5" fill="#8a8a8a" shape-rendering="auto"/>
<rect x="492.85" y="262.8" width="1.5" height="1.5" fill="#8a8a8a" shape-rendering="auto"/>
<rect x="504.85" y="262.8" width="1.5" height="1.5" fill="#8a8a8a" shape-rendering="auto"/>
<rect x="516.85" y="262.8" width="1.5" height="1.5" fill="#8a8a8a" shape-rendering="auto"/>
<rect x="528.85" y="262.8" width="1.5" height="1.5" fill="#8a8a8a" shape-rendering="auto"/>
<rect x="540.85" y="262.8" width="1.5" height="1.5" fill="#8a8a8a" shape-rendering="auto"/>
<rect x="552.85" y="262.8" width="1.5" height="1.5" fill="#8a8a8a" shape-rendering="auto"/>
<rect x="564.85" y="262.8" width="1.5" height="1.5" fill="#8a8a8a" shape-rendering="auto"/>
<rect x="576.85" y="262.8" width="1.5" height="1.5" fill="#8a8a8a" shape-rendering="auto"/>
<rect x="588.85" y="262.8" width="1.5" height="1.5" fill="#8a8a8a" shape-rendering="auto"/>
<rect x="600.85" y="262.8" width="1.5" height="1.5" fill="#8a8a8a" shape-rendering="auto"/>
<rect x="612.85" y="262.8" width="1.5" height="1.5" fill="#8a8a8a" shape-rendering="auto"/>
<rect x="624.85" y="262.8" width="1.5" height="1.5" fill="#8a8a8a" shape-rendering="auto"/>
<rect x="636.85" y="262.8" width="1.5" height="1.5" fill="#8a8a8a" shape-rendering="auto"/>
<rect x="648.85" y="262.8" width="1.5" height="1.5" fill="#8a8a8a" shape-rendering="auto"/>
<rect x="660.85" y="262.8" width="1.5" height="1.5" fill="#8a8a8a" shape-rendering="auto"/>
<rect x="672.85" y="262.8" width="1.5" height="1.5" fill="#8a8a8a" shape-rendering="auto"/>
<rect x="684.85" y="262.8" width="1.5" height="1.5" fill="#8a8a8a" shape-rendering="auto"/>
<rect x="696.85" y="262.8" width="1.5" height="1.5" fill="#8a8a8a" shape-rendering="auto"/>
<rect x="708.85" y="262.8" width="1.5" height="1.5" fill="#8a8a8a" shape-rendering="auto"/>
<rect x="720.85" y="262.8" width="1.5" height="1.5" fill="#8a8a8a" shape-rendering="auto"/>
<rect x="732.85" y="262.8" width="1.5" height="1.5" fill="#8a8a8a" shape-rendering="auto"/>
<rect x="744.85" y="262.8" width="1.5" height="1.5" fill="#8a8a8a" shape-rendering="auto"/>
<rect x="756.85" y="262.8" width="1.5" height="1.5" fill="#8a8a8a" shape-rendering="auto"/>
<rect x="768.85" y="262.8" width="1.5" height="1.5" fill="#8a8a8a" shape-rendering="auto"/>
<rect x="780.85" y="262.8" width="1.5" height="1.5" fill="#8a8a8a" shape-rendering="auto"/>
<rect x="792.85" y="262.8" width="1.5" height="1.5" fill="#8a8a8a" shape-rendering="auto"/>
<rect x="804.85" y="262.8" width="1.5" height="1.5" fill="#8a8a8a" shape-rendering="auto"/>
<rect x="816.85" y="262.8" width="1.5" height="1.5" fill="#8a8a8a" shape-rendering="auto"/>
<rect x="828.85" y="262.8" width="1.5" height="1.5" fill="#8a8a8a" shape-rendering="auto"/>
<rect x="840.85" y="262.8" width="1.5" height="1.5" fill="#8a8a8a" shape-rendering="auto"/>
<rect x="852.85" y="262.8" width="1.5" height="1.5" fill="#8a8a8a" shape-rendering="auto"/>
<rect x="864.85" y="262.8" width="1.5" height="1.5" fill="#8a8a8a" shape-rendering="auto"/>
<rect x="876.85" y="262.8" width="1.5" height="1.5" fill="#8a8a8a" shape-rendering="auto"/>
<rect x="888.85" y="262.8" width="1.5" height="1.5" fill="#8a8a8a" shape-rendering="auto"/>
<rect x="900.85" y="262.8" width="1.5" height="1.5" fill="#8a8a8a" shape-rendering="auto"/>
<rect x="912.85" y="262.8" width="1.5" height="1.5" fill="#8a8a8a" shape-rendering="auto"/>
<rect x="924.85" y="262.8" width="1.5" height="1.5" fill="#8a8a8a" shape-rendering="auto"/>
<rect x="36.85" y="382.8" width="1.5" height="1.5" fill="#8a8a8a" shape-rendering="auto"/>
<rect x="48.85" y="382.8" width="1.5" height="1.5" fill="#8a8a8a" shape-rendering="auto"/>
<rect x="60.85" y="382.8" width="1.5" height="1.5" fill="#8a8a8a" shape-rendering="auto"/>
<rect x="72.85" y="382.8" width="1.5" height="1.5" fill="#8a8a8a" shape-rendering="auto"/>
<rect x="84.85" y="382.8" width="1.5" height="1.5" fill="#8a8a8a" shape-rendering="auto"/>
<rect x="96.85" y="382.8" width="1.5" height="1.5" fill="#8a8a8a" shape-rendering="auto"/>
<rect x="108.85" y="382.8" width="1.5" height="1.5" fill="#8a8a8a" shape-rendering="auto"/>
<rect x="120.85" y="382.8" width="1.5" height="1.5" fill="#8a8a8a" shape-rendering="auto"/>
<rect x="132.85" y="382.8" width="1.5" height="1.5" fill="#8a8a8a" shape-rendering="auto"/>
<rect x="144.85" y="382.8" width="1.5" height="1.5" fill="#8a8a8a" shape-rendering="auto"/>
<rect x="156.85" y="382.8" width="1.5" height="1.5" fill="#8a8a8a" shape-rendering="auto"/>
<rect x="168.85" y="382.8" width="1.5" height="1.5" fill="#8a8a8a" shape-rendering="auto"/>
<rect x="180.85" y="382.8" width="1.5" height="1.5" fill="#8a8a8a" shape-rendering="auto"/>
<rect x="192.85" y="382.8" width="1.5" height="1.5" fill="#8a8a8a" shape-rendering="auto"/>
<rect x="204.85" y="382.8" width="1.5" height="1.5" fill="#8a8a8a" shape-rendering="auto"/>
<rect x="216.85" y="382.8" width="1.5" height="1.5" fill="#8a8a8a" shape-rendering="auto"/>
<rect x="228.85" y="382.8" width="1.5" height="1.5" fill="#8a8a8a" shape-rendering="auto"/>
<rect x="240.85" y="382.8" width="1.5" height="1.5" fill="#8a8a8a" shape-rendering="auto"/>
<rect x="252.85" y="382.8" width="1.5" height="1.5" fill="#8a8a8a" shape-rendering="auto"/>
<rect x="264.85" y="382.8" width="1.5" height="1.5" fill="#8a8a8a" shape-rendering="auto"/>
<rect x="276.85" y="382.8" width="1.5" height="1.5" fill="#8a8a8a" shape-rendering="auto"/>
<rect x="288.85" y="382.8" width="1.5" height="1.5" fill="#8a8a8a" shape-rendering="auto"/>
<rect x="300.85" y="382.8" width="1.5" height="1.5" fill="#8a8a8a" shape-rendering="auto"/>
<rect x="312.85" y="382.8" width="1.5" height="1.5" fill="#8a8a8a" shape-rendering="auto"/>
<rect x="324.85" y="382.8" width="1.5" height="1.5" fill="#8a8a8a" shape-rendering="auto"/>
<rect x="336.85" y="382.8" width="1.5" height="1.5" fill="#8a8a8a" shape-rendering="auto"/>
<rect x="348.85" y="382.8" width="1.5" height="1.5" fill="#8a8a8a" shape-rendering="auto"/>
<rect x="360.85" y="382.8" width="1.5" height="1.5" fill="#8a8a8a" shape-rendering="auto"/>
<rect x="372.85" y="382.8" width="1.5" height="1.5" fill="#8a8a8a" shape-rendering="auto"/>
<rect x="384.85" y="382.8" width="1.5" height="1.5" fill="#8a8a8a" shape-rendering="auto"/>
<rect x="396.85" y="382.8" width="1.5" height="1.5" fill="#8a8a8a" shape-rendering="auto"/>
<rect x="408.85" y="382.8" width="1.5" height="1.5" fill="#8a8a8a" shape-rendering="auto"/>
<rect x="420.85" y="382.8" width="1.5" height="1.5" fill="#8a8a8a" shape-rendering="auto"/>
<rect x="432.85" y="382.8" width="1.5" height="1.5" fill="#8a8a8a" shape-rendering="auto"/>
<rect x="444.85" y="382.8" width="1.5" height="1.5" fill="#8a8a8a" shape-rendering="auto"/>
<rect x="456.85" y="382.8" width="1.5" height="1.5" fill="#8a8a8a" shape-rendering="auto"/>
<rect x="468.85" y="382.8" width="1.5" height="1.5" fill="#8a8a8a" shape-rendering="auto"/>
<rect x="480.85" y="382.8" width="1.5" height="1.5" fill="#8a8a8a" shape-rendering="auto"/>
<rect x="492.85" y="382.8" width="1.5" height="1.5" fill="#8a8a8a" shape-rendering="auto"/>
<rect x="504.85" y="382.8" width="1.5" height="1.5" fill="#8a8a8a" shape-rendering="auto"/>
<rect x="516.85" y="382.8" width="1.5" height="1.5" fill="#8a8a8a" shape-rendering="auto"/>
<rect x="528.85" y="382.8" width="1.5" height="1.5" fill="#8a8a8a" shape-rendering="auto"/>
<rect x="540.85" y="382.8" width="1.5" height="1.5" fill="#8a8a8a" shape-rendering="auto"/>
<rect x="552.85" y="382.8" width="1.5" height="1.5" fill="#8a8a8a" shape-rendering="auto"/>
<rect x="564.85" y="382.8" width="1.5" height="1.5" fill="#8a8a8a" shape-rendering="auto"/>
<rect x="576.85" y="382.8" width="1.5" height="1.5" fill="#8a8a8a" shape-rendering="auto"/>
<rect x="588.85" y="382.8" width="1.5" height="1.5" fill="#8a8a8a" shape-rendering="auto"/>
<rect x="600.85" y="382.8" width="1.5" height="1.5" fill="#8a8a8a" shape-rendering="auto"/>
<rect x="612.85" y="382.8" width="1.5" height="1.5" fill="#8a8a8a" shape-rendering="auto"/>
<rect x="624.85" y="382.8" width="1.5" height="1.5" fill="#8a8a8a" shape-rendering="auto"/>
<rect x="636.85" y="382.8" width="1.5" height="1.5" fill="#8a8a8a" shape-rendering="auto"/>
<rect x="648.85" y="382.8" width="1.5" height="1.5" fill="#8a8a8a" shape-rendering="auto"/>
<rect x="660.85" y="382.8" width="1.5" height="1.5" fill="#8a8a8a" shape-rendering="auto"/>
<rect x="672.85" y="382.8" width="1.5" height="1.5" fill="#8a8a8a" shape-rendering="auto"/>
<rect x="684.85" y="382.8" width="1.5" height="1.5" fill="#8a8a8a" shape-rendering="auto"/>
<rect x="696.85" y="382.8" width="1.5" height="1.5" fill="#8a8a8a" shape-rendering="auto"/>
<rect x="708.85" y="382.8" width="1.5" height="1.5" fill="#8a8a8a" shape-rendering="auto"/>
<rect x="720.85" y="382.8" width="1.5" height="1.5" fill="#8a8a8a" shape-rendering="auto"/>
<rect x="732.85" y="382.8" width="1.5" height="1.5" fill="#8a8a8a" shape-rendering="auto"/>
<rect x="744.85" y="382.8" width="1.5" height="1.5" fill="#8a8a8a" shape-rendering="auto"/>
<rect x="756.85" y="382.8" width="1.5" height="1.5" fill="#8a8a8a" shape-rendering="auto"/>
<rect x="768.85" y="382.8" width="1.5" height="1.5" fill="#8a8a8a" shape-rendering="auto"/>
<rect x="780.85" y="382.8" width="1.5" height="1.5" fill="#8a8a8a" shape-rendering="auto"/>
<rect x="792.85" y="382.8" width="1.5" height="1.5" fill="#8a8a8a" shape-rendering="auto"/>
<rect x="804.85" y="382.8" width="1.5" height="1.5" fill="#8a8a8a" shape-rendering="auto"/>
<rect x="816.85" y="382.8" width="1.5" height="1.5" fill="#8a8a8a" shape-rendering="auto"/>
<rect x="828.85" y="382.8" width="1.5" height="1.5" fill="#8a8a8a" shape-rendering="auto"/>
<rect x="840.85" y="382.8" width="1.5" height="1.5" fill="#8a8a8a" shape-rendering="auto"/>
<rect x="852.85" y="382.8" width="1.5" height="1.5" fill="#8a8a8a" shape-rendering="auto"/>
<rect x="864.85" y="382.8" width="1.5" height="1.5" fill="#8a8a8a" shape-rendering="auto"/>
<rect x="876.85" y="382.8" width="1.5" height="1.5" fill="#8a8a8a" shape-rendering="auto"/>
<rect x="888.85" y="382.8" width="1.5" height="1.5" fill="#8a8a8a" shape-rendering="auto"/>
<rect x="900.85" y="382.8" width="1.5" height="1.5" fill="#8a8a8a" shape-rendering="auto"/>
<rect x="912.85" y="382.8" width="1.5" height="1.5" fill="#8a8a8a" shape-rendering="auto"/>
<rect x="924.85" y="382.8" width="1.5" height="1.5" fill="#8a8a8a" shape-rendering="auto"/>
<rect x="36.85" y="442.8" width="1.5" height="1.5" fill="#8a8a8a" shape-rendering="auto"/>
<rect x="48.85" y="442.8" width="1.5" height="1.5" fill="#8a8a8a" shape-rendering="auto"/>
<rect x="60.85" y="442.8" width="1.5" height="1.5" fill="#8a8a8a" shape-rendering="auto"/>
<rect x="72.85" y="442.8" width="1.5" height="1.5" fill="#8a8a8a" shape-rendering="auto"/>
<rect x="84.85" y="442.8" width="1.5" height="1.5" fill="#8a8a8a" shape-rendering="auto"/>
<rect x="96.85" y="442.8" width="1.5" height="1.5" fill="#8a8a8a" shape-rendering="auto"/>
<rect x="108.85" y="442.8" width="1.5" height="1.5" fill="#8a8a8a" shape-rendering="auto"/>
<rect x="120.85" y="442.8" width="1.5" height="1.5" fill="#8a8a8a" shape-rendering="auto"/>
<rect x="132.85" y="442.8" width="1.5" height="1.5" fill="#8a8a8a" shape-rendering="auto"/>
<rect x="144.85" y="442.8" width="1.5" height="1.5" fill="#8a8a8a" shape-rendering="auto"/>
<rect x="156.85" y="442.8" width="1.5" height="1.5" fill="#8a8a8a" shape-rendering="auto"/>
<rect x="168.85" y="442.8" width="1.5" height="1.5" fill="#8a8a8a" shape-rendering="auto"/>
<rect x="180.85" y="442.8" width="1.5" height="1.5" fill="#8a8a8a" shape-rendering="auto"/>
<rect x="192.85" y="442.8" width="1.5" height="1.5" fill="#8a8a8a" shape-rendering="auto"/>
<rect x="204.85" y="442.8" width="1.5" height="1.5" fill="#8a8a8a" shape-rendering="auto"/>
<rect x="216.85" y="442.8" width="1.5" height="1.5" fill="#8a8a8a" shape-rendering="auto"/>
<rect x="228.85" y="442.8" width="1.5" height="1.5" fill="#8a8a8a" shape-rendering="auto"/>
<rect x="240.85" y="442.8" width="1.5" height="1.5" fill="#8a8a8a" shape-rendering="auto"/>
<rect x="252.85" y="442.8" width="1.5" height="1.5" fill="#8a8a8a" shape-rendering="auto"/>
<rect x="264.85" y="442.8" width="1.5" height="1.5" fill="#8a8a8a" shape-rendering="auto"/>
<rect x="276.85" y="442.8" width="1.5" height="1.5" fill="#8a8a8a" shape-rendering="auto"/>
<rect x="288.85" y="442.8" width="1.5" height="1.5" fill="#8a8a8a" shape-rendering="auto"/>
<rect x="300.85" y="442.8" width="1.5" height="1.5" fill="#8a8a8a" shape-rendering="auto"/>
<rect x="312.85" y="442.8" width="1.5" height="1.5" fill="#8a8a8a" shape-rendering="auto"/>
<rect x="324.85" y="442.8" width="1.5" height="1.5" fill="#8a8a8a" shape-rendering="auto"/>
<rect x="336.85" y="442.8" width="1.5" height="1.5" fill="#8a8a8a" shape-rendering="auto"/>
<rect x="348.85" y="442.8" width="1.5" height="1.5" fill="#8a8a8a" shape-rendering="auto"/>
<rect x="360.85" y="442.8" width="1.5" height="1.5" fill="#8a8a8a" shape-rendering="auto"/>
<rect x="372.85" y="442.8" width="1.5" height="1.5" fill="#8a8a8a" shape-rendering="auto"/>
<rect x="384.85" y="442.8" width="1.5" height="1.5" fill="#8a8a8a" shape-rendering="auto"/>
<rect x="396.85" y="442.8" width="1.5" height="1.5" fill="#8a8a8a" shape-rendering="auto"/>
<rect x="408.85" y="442.8" width="1.5" height="1.5" fill="#8a8a8a" shape-rendering="auto"/>
<rect x="420.85" y="442.8" width="1.5" height="1.5" fill="#8a8a8a" shape-rendering="auto"/>
<rect x="432.85" y="442.8" width="1.5" height="1.5" fill="#8a8a8a" shape-rendering="auto"/>
<rect x="444.85" y="442.8" width="1.5" height="1.5" fill="#8a8a8a" shape-rendering="auto"/>
<rect x="456.85" y="442.8" width="1.5" height="1.5" fill="#8a8a8a" shape-rendering="auto"/>
<rect x="468.85" y="442.8" width="1.5" height="1.5" fill="#8a8a8a" shape-rendering="auto"/>
<rect x="480.85" y="442.8" width="1.5" height="1.5" fill="#8a8a8a" shape-rendering="auto"/>
<rect x="492.85" y="442.8" width="1.5" height="1.5" fill="#8a8a8a" shape-rendering="auto"/>
<rect x="504.85" y="442.8" width="1.5" height="1.5" fill="#8a8a8a" shape-rendering="auto"/>
<rect x="516.85" y="442.8" width="1.5" height="1.5" fill="#8a8a8a" shape-rendering="auto"/>
<rect x="528.85" y="442.8" width="1.5" height="1.5" fill="#8a8a8a" shape-rendering="auto"/>
<rect x="540.85" y="442.8" width="1.5" height="1.5" fill="#8a8a8a" shape-rendering="auto"/>
<rect x="552.85" y="442.8" width="1.5" height="1.5" fill="#8a8a8a" shape-rendering="auto"/>
<rect x="564.85" y="442.8" width="1.5" height="1.5" fill="#8a8a8a" shape-rendering="auto"/>
<rect x="576.85" y="442.8" width="1.5" height="1.5" fill="#8a8a8a" shape-rendering="auto"/>
<rect x="588.85" y="442.8" width="1.5" height="1.5" fill="#8a8a8a" shape-rendering="auto"/>
<rect x="600.85" y="442.8" width="1.5" height="1.5" fill="#8a8a8a" shape-rendering="auto"/>
<rect x="612.85" y="442.8" width="1.5" height="1.5" fill="#8a8a8a" shape-rendering="auto"/>
<rect x="624.85" y="442.8" width="1.5" height="1.5" fill="#8a8a8a" shape-rendering="auto"/>
<rect x="636.85" y="442.8" width="1.5" height="1.5" fill="#8a8a8a" shape-rendering="auto"/>
<rect x="648.85" y="442.8" width="1.5" height="1.5" fill="#8a8a8a" shape-rendering="auto"/>
<rect x="660.85" y="442.8" width="1.5" height="1.5" fill="#8a8a8a" shape-rendering="auto"/>
<rect x="672.85" y="442.8" width="1.5" height="1.5" fill="#8a8a8a" shape-rendering="auto"/>
<rect x="684.85" y="442.8" width="1.5" height="1.5" fill="#8a8a8a" shape-rendering="auto"/>
<rect x="696.85" y="442.8" width="1.5" height="1.5" fill="#8a8a8a" shape-rendering="auto"/>
<rect x="708.85" y="442.8" width="1.5" height="1.5" fill="#8a8a8a" shape-rendering="auto"/>
<rect x="720.85" y="442.8" width="1.5" height="1.5" fill="#8a8a8a" shape-rendering="auto"/>
<rect x="732.85" y="442.8" width="1.5" height="1.5" fill="#8a8a8a" shape-rendering="auto"/>
<rect x="744.85" y="442.8" width="1.5" height="1.5" fill="#8a8a8a" shape-rendering="auto"/>
<rect x="756.85" y="442.8" width="1.5" height="1.5" fill="#8a8a8a" shape-rendering="auto"/>
<rect x="768.85" y="442.8" width="1.5" height="1.5" fill="#8a8a8a" shape-rendering="auto"/>
<rect x="780.85" y="442.8" width="1.5" height="1.5" fill="#8a8a8a" shape-rendering="auto"/>
<rect x="792.85" y="442.8" width="1.5" height="1.5" fill="#8a8a8a" shape-rendering="auto"/>
<rect x="804.85" y="442.8" width="1.5" height="1.5" fill="#8a8a8a" shape-rendering="auto"/>
<rect x="816.85" y="442.8" width="1.5" height="1.5" fill="#8a8a8a" shape-rendering="auto"/>
<rect x="828.85" y="442.8" width="1.5" height="1.5" fill="#8a8a8a" shape-rendering="auto"/>
<rect x="840.85" y="442.8" width="1.5" height="1.5" fill="#8a8a8a" shape-rendering="auto"/>
<rect x="852.85" y="442.8" width="1.5" height="1.5" fill="#8a8a8a" shape-rendering="auto"/>
<rect x="864.85" y="442.8" width="1.5" height="1.5" fill="#8a8a8a" shape-rendering="auto"/>
<rect x="876.85" y="442.8" width="1.5" height="1.5" fill="#8a8a8a" shape-rendering="auto"/>
<rect x="888.85" y="442.8" width="1.5" height="1.5" fill="#8a8a8a" shape-rendering="auto"/>
<rect x="900.85" y="442.8" width="1.5" height="1.5" fill="#8a8a8a" shape-rendering="auto"/>
<rect x="912.85" y="442.8" width="1.5" height="1.5" fill="#8a8a8a" shape-rendering="auto"/>
<rect x="924.85" y="442.8" width="1.5" height="1.5" fill="#8a8a8a" shape-rendering="auto"/>
<rect x="36.85" y="502.8" width="1.5" height="1.5" fill="#8a8a8a" shape-rendering="auto"/>
<rect x="48.85" y="502.8" width="1.5" height="1.5" fill="#8a8a8a" shape-rendering="auto"/>
<rect x="60.85" y="502.8" width="1.5" height="1.5" fill="#8a8a8a" shape-rendering="auto"/>
<rect x="72.85" y="502.8" width="1.5" height="1.5" fill="#8a8a8a" shape-rendering="auto"/>
<rect x="84.85" y="502.8" width="1.5" height="1.5" fill="#8a8a8a" shape-rendering="auto"/>
<rect x="96.85" y="502.8" width="1.5" height="1.5" fill="#8a8a8a" shape-rendering="auto"/>
<rect x="108.85" y="502.8" width="1.5" height="1.5" fill="#8a8a8a" shape-rendering="auto"/>
<rect x="120.85" y="502.8" width="1.5" height="1.5" fill="#8a8a8a" shape-rendering="auto"/>
<rect x="132.85" y="502.8" width="1.5" height="1.5" fill="#8a8a8a" shape-rendering="auto"/>
<rect x="144.85" y="502.8" width="1.5" height="1.5" fill="#8a8a8a" shape-rendering="auto"/>
<rect x="156.85" y="502.8" width="1.5" height="1.5" fill="#8a8a8a" shape-rendering="auto"/>
<rect x="168.85" y="502.8" width="1.5" height="1.5" fill="#8a8a8a" shape-rendering="auto"/>
<rect x="180.85" y="502.8" width="1.5" height="1.5" fill="#8a8a8a" shape-rendering="auto"/>
<rect x="192.85" y="502.8" width="1.5" height="1.5" fill="#8a8a8a" shape-rendering="auto"/>
<rect x="204.85" y="502.8" width="1.5" height="1.5" fill="#8a8a8a" shape-rendering="auto"/>
<rect x="216.85" y="502.8" width="1.5" height="1.5" fill="#8a8a8a" shape-rendering="auto"/>
<rect x="228.85" y="502.8" width="1.5" height="1.5" fill="#8a8a8a" shape-rendering="auto"/>
<rect x="240.85" y="502.8" width="1.5" height="1.5" fill="#8a8a8a" shape-rendering="auto"/>
<rect x="252.85" y="502.8" width="1.5" height="1.5" fill="#8a8a8a" shape-rendering="auto"/>
<rect x="264.85" y="502.8" width="1.5" height="1.5" fill="#8a8a8a" shape-rendering="auto"/>
<rect x="276.85" y="502.8" width="1.5" height="1.5" fill="#8a8a8a" shape-rendering="auto"/>
<rect x="288.85" y="502.8" width="1.5" height="1.5" fill="#8a8a8a" shape-rendering="auto"/>
<rect x="300.85" y="502.8" width="1.5" height="1.5" fill="#8a8a8a" shape-rendering="auto"/>
<rect x="312.85" y="502.8" width="1.5" height="1.5" fill="#8a8a8a" shape-rendering="auto"/>
<rect x="324.85" y="502.8" width="1.5" height="1.5" fill="#8a8a8a" shape-rendering="auto"/>
<rect x="336.85" y="502.8" width="1.5" height="1.5" fill="#8a8a8a" shape-rendering="auto"/>
<rect x="348.85" y="502.8" width="1.5" height="1.5" fill="#8a8a8a" shape-rendering="auto"/>
<rect x="360.85" y="502.8" width="1.5" height="1.5" fill="#8a8a8a" shape-rendering="auto"/>
<rect x="372.85" y="502.8" width="1.5" height="1.5" fill="#8a8a8a" shape-rendering="auto"/>
<rect x="384.85" y="502.8" width="1.5" height="1.5" fill="#8a8a8a" shape-rendering="auto"/>
<rect x="396.85" y="502.8" width="1.5" height="1.5" fill="#8a8a8a" shape-rendering="auto"/>
<rect x="408.85" y="502.8" width="1.5" height="1.5" fill="#8a8a8a" shape-rendering="auto"/>
<rect x="420.85" y="502.8" width="1.5" height="1.5" fill="#8a8a8a" shape-rendering="auto"/>
<rect x="432.85" y="502.8" width="1.5" height="1.5" fill="#8a8a8a" shape-rendering="auto"/>
<rect x="444.85" y="502.8" width="1.5" height="1.5" fill="#8a8a8a" shape-rendering="auto"/>
<rect x="456.85" y="502.8" width="1.5" height="1.5" fill="#8a8a8a" shape-rendering="auto"/>
<rect x="468.85" y="502.8" width="1.5" height="1.5" fill="#8a8a8a" shape-rendering="auto"/>
<rect x="480.85" y="502.8" width="1.5" height="1.5" fill="#8a8a8a" shape-rendering="auto"/>
<rect x="492.85" y="502.8" width="1.5" height="1.5" fill="#8a8a8a" shape-rendering="auto"/>
<rect x="504.85" y="502.8" width="1.5" height="1.5" fill="#8a8a8a" shape-rendering="auto"/>
<rect x="516.85" y="502.8" width="1.5" height="1.5" fill="#8a8a8a" shape-rendering="auto"/>
<rect x="528.85" y="502.8" width="1.5" height="1.5" fill="#8a8a8a" shape-rendering="auto"/>
<rect x="540.85" y="502.8" width="1.5" height="1.5" fill="#8a8a8a" shape-rendering="auto"/>
<rect x="552.85" y="502.8" width="1.5" height="1.5" fill="#8a8a8a" shape-rendering="auto"/>
<rect x="564.85" y="502.8" width="1.5" height="1.5" fill="#8a8a8a" shape-rendering="auto"/>
<rect x="576.85" y="502.8" width="1.5" height="1.5" fill="#8a8a8a" shape-rendering="auto"/>
<rect x="588.85" y="502.8" width="1.5" height="1.5" fill="#8a8a8a" shape-rendering="auto"/>
<rect x="600.85" y="502.8" width="1.5" height="1.5" fill="#8a8a8a" shape-rendering="auto"/>
<rect x="612.85" y="502.8" width="1.5" height="1.5" fill="#8a8a8a" shape-rendering="auto"/>
<rect x="624.85" y="502.8" width="1.5" height="1.5" fill="#8a8a8a" shape-rendering="auto"/>
<rect x="636.85" y="502.8" width="1.5" height="1.5" fill="#8a8a8a" shape-rendering="auto"/>
<rect x="648.85" y="502.8" width="1.5" height="1.5" fill="#8a8a8a" shape-rendering="auto"/>
<rect x="660.85" y="502.8" width="1.5" height="1.5" fill="#8a8a8a" shape-rendering="auto"/>
<rect x="672.85" y="502.8" width="1.5" height="1.5" fill="#8a8a8a" shape-rendering="auto"/>
<rect x="684.85" y="502.8" width="1.5" height="1.5" fill="#8a8a8a" shape-rendering="auto"/>
<rect x="696.85" y="502.8" width="1.5" height="1.5" fill="#8a8a8a" shape-rendering="auto"/>
<rect x="708.85" y="502.8" width="1.5" height="1.5" fill="#8a8a8a" shape-rendering="auto"/>
<rect x="720.85" y="502.8" width="1.5" height="1.5" fill="#8a8a8a" shape-rendering="auto"/>
<rect x="732.85" y="502.8" width="1.5" height="1.5" fill="#8a8a8a" shape-rendering="auto"/>
<rect x="744.85" y="502.8" width="1.5" height="1.5" fill="#8a8a8a" shape-rendering="auto"/>
<rect x="756.85" y="502.8" width="1.5" height="1.5" fill="#8a8a8a" shape-rendering="auto"/>
<rect x="768.85" y="502.8" width="1.5" height="1.5" fill="#8a8a8a" shape-rendering="auto"/>
<rect x="780.85" y="502.8" width="1.5" height="1.5" fill="#8a8a8a" shape-rendering="auto"/>
<rect x="792.85" y="502.8" width="1.5" height="1.5" fill="#8a8a8a" shape-rendering="auto"/>
<rect x="804.85" y="502.8" width="1.5" height="1.5" fill="#8a8a8a" shape-rendering="auto"/>
<rect x="816.85" y="502.8" width="1.5" height="1.5" fill="#8a8a8a" shape-rendering="auto"/>
<rect x="828.85" y="502.8" width="1.5" height="1.5" fill="#8a8a8a" shape-rendering="auto"/>
<rect x="840.85" y="502.8" width="1.5" height="1.5" fill="#8a8a8a" shape-rendering="auto"/>
<rect x="852.85" y="502.8" width="1.5" height="1.5" fill="#8a8a8a" shape-rendering="auto"/>
<rect x="864.85" y="502.8" width="1.5" height="1.5" fill="#8a8a8a" shape-rendering="auto"/>
<rect x="876.85" y="502.8" width="1.5" height="1.5" fill="#8a8a8a" shape-rendering="auto"/>
<rect x="888.85" y="502.8" width="1.5" height="1.5" fill="#8a8a8a" shape-rendering="auto"/>
<rect x="900.85" y="502.8" width="1.5" height="1.5" fill="#8a8a8a" shape-rendering="auto"/>
<rect x="912.85" y="502.8" width="1.5" height="1.5" fill="#8a8a8a" shape-rendering="auto"/>
<rect x="924.85" y="502.8" width="1.5" height="1.5" fill="#8a8a8a" shape-rendering="auto"/>
<rect x="36.85" y="562.8" width="1.5" height="1.5" fill="#8a8a8a" shape-rendering="auto"/>
<rect x="48.85" y="562.8" width="1.5" height="1.5" fill="#8a8a8a" shape-rendering="auto"/>
<rect x="60.85" y="562.8" width="1.5" height="1.5" fill="#8a8a8a" shape-rendering="auto"/>
<rect x="72.85" y="562.8" width="1.5" height="1.5" fill="#8a8a8a" shape-rendering="auto"/>
<rect x="84.85" y="562.8" width="1.5" height="1.5" fill="#8a8a8a" shape-rendering="auto"/>
<rect x="96.85" y="562.8" width="1.5" height="1.5" fill="#8a8a8a" shape-rendering="auto"/>
<rect x="108.85" y="562.8" width="1.5" height="1.5" fill="#8a8a8a" shape-rendering="auto"/>
<rect x="120.85" y="562.8" width="1.5" height="1.5" fill="#8a8a8a" shape-rendering="auto"/>
<rect x="132.85" y="562.8" width="1.5" height="1.5" fill="#8a8a8a" shape-rendering="auto"/>
<rect x="144.85" y="562.8" width="1.5" height="1.5" fill="#8a8a8a" shape-rendering="auto"/>
<rect x="156.85" y="562.8" width="1.5" height="1.5" fill="#8a8a8a" shape-rendering="auto"/>
<rect x="168.85" y="562.8" width="1.5" height="1.5" fill="#8a8a8a" shape-rendering="auto"/>
<rect x="180.85" y="562.8" width="1.5" height="1.5" fill="#8a8a8a" shape-rendering="auto"/>
<rect x="192.85" y="562.8" width="1.5" height="1.5" fill="#8a8a8a" shape-rendering="auto"/>
<rect x="204.85" y="562.8" width="1.5" height="1.5" fill="#8a8a8a" shape-rendering="auto"/>
<rect x="216.85" y="562.8" width="1.5" height="1.5" fill="#8a8a8a" shape-rendering="auto"/>
<rect x="228.85" y="562.8" width="1.5" height="1.5" fill="#8a8a8a" shape-rendering="auto"/>
<rect x="240.85" y="562.8" width="1.5" height="1.5" fill="#8a8a8a" shape-rendering="auto"/>
<rect x="252.85" y="562.8" width="1.5" height="1.5" fill="#8a8a8a" shape-rendering="auto"/>
<rect x="264.85" y="562.8" width="1.5" height="1.5" fill="#8a8a8a" shape-rendering="auto"/>
<rect x="276.85" y="562.8" width="1.5" height="1.5" fill="#8a8a8a" shape-rendering="auto"/>
<rect x="288.85" y="562.8" width="1.5" height="1.5" fill="#8a8a8a" shape-rendering="auto"/>
<rect x="300.85" y="562.8" width="1.5" height="1.5" fill="#8a8a8a" shape-rendering="auto"/>
<rect x="312.85" y="562.8" width="1.5" height="1.5" fill="#8a8a8a" shape-rendering="auto"/>
<rect x="324.85" y="562.8" width="1.5" height="1.5" fill="#8a8a8a" shape-rendering="auto"/>
<rect x="336.85" y="562.8" width="1.5" height="1.5" fill="#8a8a8a" shape-rendering="auto"/>
<rect x="348.85" y="562.8" width="1.5" height="1.5" fill="#8a8a8a" shape-rendering="auto"/>
<rect x="360.85" y="562.8" width="1.5" height="1.5" fill="#8a8a8a" shape-rendering="auto"/>
<rect x="372.85" y="562.8" width="1.5" height="1.5" fill="#8a8a8a" shape-rendering="auto"/>
<rect x="384.85" y="562.8" width="1.5" height="1.5" fill="#8a8a8a" shape-rendering="auto"/>
<rect x="396.85" y="562.8" width="1.5" height="1.5" fill="#8a8a8a" shape-rendering="auto"/>
<rect x="408.85" y="562.8" width="1.5" height="1.5" fill="#8a8a8a" shape-rendering="auto"/>
<rect x="420.85" y="562.8" width="1.5" height="1.5" fill="#8a8a8a" shape-rendering="auto"/>
<rect x="432.85" y="562.8" width="1.5" height="1.5" fill="#8a8a8a" shape-rendering="auto"/>
<rect x="444.85" y="562.8" width="1.5" height="1.5" fill="#8a8a8a" shape-rendering="auto"/>
<rect x="456.85" y="562.8" width="1.5" height="1.5" fill="#8a8a8a" shape-rendering="auto"/>
<rect x="468.85" y="562.8" width="1.5" height="1.5" fill="#8a8a8a" shape-rendering="auto"/>
<rect x="480.85" y="562.8" width="1.5" height="1.5" fill="#8a8a8a" shape-rendering="auto"/>
<rect x="492.85" y="562.8" width="1.5" height="1.5" fill="#8a8a8a" shape-rendering="auto"/>
<rect x="504.85" y="562.8" width="1.5" height="1.5" fill="#8a8a8a" shape-rendering="auto"/>
<rect x="516.85" y="562.8" width="1.5" height="1.5" fill="#8a8a8a" shape-rendering="auto"/>
<rect x="528.85" y="562.8" width="1.5" height="1.5" fill="#8a8a8a" shape-rendering="auto"/>
<rect x="540.85" y="562.8" width="1.5" height="1.5" fill="#8a8a8a" shape-rendering="auto"/>
<rect x="552.85" y="562.8" width="1.5" height="1.5" fill="#8a8a8a" shape-rendering="auto"/>
<rect x="564.85" y="562.8" width="1.5" height="1.5" fill="#8a8a8a" shape-rendering="auto"/>
<rect x="576.85" y="562.8" width="1.5" height="1.5" fill="#8a8a8a" shape-rendering="auto"/>
<rect x="588.85" y="562.8" width="1.5" height="1.5" fill="#8a8a8a" shape-rendering="auto"/>
<rect x="600.85" y="562.8" width="1.5" height="1.5" fill="#8a8a8a" shape-rendering="auto"/>
<rect x="612.85" y="562.8" width="1.5" height="1.5" fill="#8a8a8a" shape-rendering="auto"/>
<rect x="624.85" y="562.8" width="1.5" height="1.5" fill="#8a8a8a" shape-rendering="auto"/>
<rect x="636.85" y="562.8" width="1.5" height="1.5" fill="#8a8a8a" shape-rendering="auto"/>
<rect x="648.85" y="562.8" width="1.5" height="1.5" fill="#8a8a8a" shape-rendering="auto"/>
<rect x="660.85" y="562.8" width="1.5" height="1.5" fill="#8a8a8a" shape-rendering="auto"/>
<rect x="672.85" y="562.8" width="1.5" height="1.5" fill="#8a8a8a" shape-rendering="auto"/>
<rect x="684.85" y="562.8" width="1.5" height="1.5" fill="#8a8a8a" shape-rendering="auto"/>
<rect x="696.85" y="562.8" width="1.5" height="1.5" fill="#8a8a8a" shape-rendering="auto"/>
<rect x="708.85" y="562.8" width="1.5" height="1.5" fill="#8a8a8a" shape-rendering="auto"/>
<rect x="720.85" y="562.8" width="1.5" height="1.5" fill="#8a8a8a" shape-rendering="auto"/>
<rect x="732.85" y="562.8" width="1.5" height="1.5" fill="#8a8a8a" shape-rendering="auto"/>
<rect x="744.85" y="562.8" width="1.5" height="1.5" fill="#8a8a8a" shape-rendering="auto"/>
<rect x="756.85" y="562.8" width="1.5" height="1.5" fill="#8a8a8a" shape-rendering="auto"/>
<rect x="768.85" y="562.8" width="1.5" height="1.5" fill="#8a8a8a" shape-rendering="auto"/>
<rect x="780.85" y="562.8" width="1.5" height="1.5" fill="#8a8a8a" shape-rendering="auto"/>
<rect x="792.85" y="562.8" width="1.5" height="1.5" fill="#8a8a8a" shape-rendering="auto"/>
<rect x="804.85" y="562.8" width="1.5" height="1.5" fill="#8a8a8a" shape-rendering="auto"/>
<rect x="816.85" y="562.8" width="1.5" height="1.5" fill="#8a8a8a" shape-rendering="auto"/>
<rect x="828.85" y="562.8" width="1.5" height="1.5" fill="#8a8a8a" shape-rendering="auto"/>
<rect x="840.85" y="562.8" width="1.5" height="1.5" fill="#8a8a8a" shape-rendering="auto"/>
<rect x="852.85" y="562.8" width="1.5" height="1.5" fill="#8a8a8a" shape-rendering="auto"/>
<rect x="864.85" y="562.8" width="1.5" height="1.5" fill="#8a8a8a" shape-rendering="auto"/>
<rect x="876.85" y="562.8" width="1.5" height="1.5" fill="#8a8a8a" shape-rendering="auto"/>
<rect x="888.85" y="562.8" width="1.5" height="1.5" fill="#8a8a8a" shape-rendering="auto"/>
<rect x="900.85" y="562.8" width="1.5" height="1.5" fill="#8a8a8a" shape-rendering="auto"/>
<rect x="912.85" y="562.8" width="1.5" height="1.5" fill="#8a8a8a" shape-rendering="auto"/>
<rect x="924.85" y="562.8" width="1.5" height="1.5" fill="#8a8a8a" shape-rendering="auto"/>
<rect x="480" y="35" width="4" height="1" fill="#e8e8e8" />
<rect x="480" y="47" width="4" height="1" fill="#e8e8e8" />
<rect x="480" y="59" width="4" height="1" fill="#e8e8e8" />
<rect x="480" y="71" width="4" height="1" fill="#e8e8e8" />
<rect x="480" y="83" width="4" height="1" fill="#e8e8e8" />
<rect x="480" y="95" width="4" height="1" fill="#e8e8e8" />
<rect x="480" y="107" width="4" height="1" fill="#e8e8e8" />
<rect x="480" y="119" width="4" height="1" fill="#e8e8e8" />
<rect x="480" y="131" width="4" height="1" fill="#e8e8e8" />
<rect x="480" y="143" width="4" height="1" fill="#e8e8e8" />
<rect x="480" y="155" width="4" height="1" fill="#e8e8e8" />
<rect x="480" y="167" width="4" height="1" fill="#e8e8e8" />
<rect x="480" y="179" width="4" height="1" fill="#e8e8e8" />
<rect x="480" y="191" width="4" height="1" fill="#e8e8e8" />
<rect x="480" y="203" width="4" height="1" fill="#e8e8e8" />
<rect x="480" y="215" width="4" height="1" fill="#e8e8e8" />
<rect x="480" y="227" width="4" height="1" fill="#e8e8e8" />
<rect x="480" y="239" width="4" height="1" fill="#e8e8e8" />
<rect x="480" y="251" width="4" height="1" fill="#e8e8e8" />
<rect x="480" y="263" width="4" height="1" fill="#e8e8e8" />
<rect x="480" y="275" width="4" height="1" fill="#e8e8e8" />
<rect x="480" y="287" width="4" height="1" fill="#e8e8e8" />
<rect x="480" y="299" width="4" height="1" fill="#e8e8e8" />
<rect x="480" y="311" width="4" height="1" fill="#e8e8e8" />
<rect x="480" y="323" width="4" height="1" fill="#e8e8e8" />
<rect x="480" y="335" width="4" height="1" fill="#e8e8e8" />
<rect x="480" y="347" width="4" height="1" fill="#e8e8e8" />
<rect x="480" y="359" width="4" height="1" fill="#e8e8e8" />
<rect x="480" y="371" width="4" height="1" fill="#e8e8e8" />
<rect x="480" y="383" width="4" height="1" fill="#e8e8e8" />
<rect x="480" y="395" width="4" height="1" fill="#e8e8e8" />
<rect x="480" y="407" width="4" height="1" fill="#e8e8e8" />
<rect x="480" y="419" width="4" height="1" fill="#e8e8e8" />
<rect x="480" y="431" width="4" height="1" fill="#e8e8e8" />
<rect x="480" y="443" width="4" height="1" fill="#e8e8e8" />
<rect x="480" y="455" width="4" height="1" fill="#e8e8e8" />
<rect x="480" y="467" width="4" height="1" fill="#e8e8e8" />
<rect x="480" y="479" width="4" height="1" fill="#e8e8e8" />
<rect x="480" y="491" width="4" height="1" fill="#e8e8e8" />
<rect x="480" y="503" width="4" height="1" fill="#e8e8e8" />
<rect x="480" y="515" width="4" height="1" fill="#e8e8e8" />
<rect x="480" y="527" width="4" height="1" fill="#e8e8e8" />
<rect x="480" y="539" width="4" height="1" fill="#e8e8e8" />
<rect x="480" y="551" width="4" height="1" fill="#e8e8e8" />
<rect x="480" y="563" width="4" height="1" fill="#e8e8e8" />
<rect x="480" y="575" width="4" height="1" fill="#e8e8e8" />
<rect x="480" y="587" width="4" height="1" fill="#e8e8e8" />
<rect x="480" y="599" width="4" height="1" fill="#e8e8e8" />
<rect x="480" y="611" width="4" height="1" fill="#e8e8e8" />
<rect x="37" y="322" width="1" height="3" fill="#e8e8e8" />
<rect x="49" y="322" width="1" height="3" fill="#e8e8e8" />
<rect x="61" y="322" width="1" height="3" fill="#e8e8e8" />
<rect x="73" y="322" width="1" height="3" fill="#e8e8e8" />
<rect x="85" y="322" width="1" height="3" fill="#e8e8e8" />
<rect x="97" y="322" width="1" height="3" fill="#e8e8e8" />
<rect x="109" y="322" width="1" height="3" fill="#e8e8e8" />
<rect x="121" y="322" width="1" height="3" fill="#e8e8e8" />
<rect x="133" y="322" width="1" height="3" fill="#e8e8e8" />
<rect x="145" y="322" width="1" height="3" fill="#e8e8e8" />
<rect x="157" y="322" width="1" height="3" fill="#e8e8e8" />
<rect x="169" y="322" width="1" height="3" fill="#e8e8e8" />
<rect x="181" y="322" width="1" height="3" fill="#e8e8e8" />
<rect x="193" y="322" width="1" height="3" fill="#e8e8e8" />
<rect x="205" y="322" width="1" height="3" fill="#e8e8e8" />
<rect x="217" y="322" width="1" height="3" fill="#e8e8e8" />
<rect x="229" y="322" width="1" height="3" fill="#e8e8e8" />
<rect x="241" y="322" width="1" height="3" fill="#e8e8e8" />
<rect x="253" y="322" width="1" height="3" fill="#e8e8e8" />
<rect x="265" y="322" width="1" height="3" fill="#e8e8e8" />
<rect x="277" y="322" width="1" height="3" fill="#e8e8e8" />
<rect x="289" y="322" width="1" height="3" fill="#e8e8e8" />
<rect x="301" y="322" width="1" height="3" fill="#e8e8e8" />
<rect x="313" y="322" width="1" height="3" fill="#e8e8e8" />
<rect x="325" y="322" width="1" height="3" fill="#e8e8e8" />
<rect x="337" y="322" width="1" height="3" fill="#e8e8e8" />
<rect x="349" y="322" width="1" height="3" fill="#e8e8e8" />
<rect x="361" y="322" width="1" height="3" fill="#e8e8e8" />
<rect x="373" y="322" width="1" height="3" fill="#e8e8e8" />
<rect x="385" y="322" width="1" height="3" fill="#e8e8e8" />
<rect x="397" y="322" width="1" height="3" fill="#e8e8e8" />
<rect x="409" y="322" width="1" height="3" fill="#e8e8e8" />
<rect x="421" y="322" width="1" height="3" fill="#e8e8e8" />
<rect x="433" y="322" width="1" height="3" fill="#e8e8e8" />
<rect x="445" y="322" width="1" height="3" fill="#e8e8e8" />
<rect x="457" y="322" width="1" height="3" fill="#e8e8e8" />
<rect x="469" y="322" width="1" height="3" fill="#e8e8e8" />
<rect x="481" y="322" width="1" height="3" fill="#e8e8e8" />
<rect x="493" y="322" width="1" height="3" fill="#e8e8e8" />
<rect x="505" y="322" width="1" height="3" fill="#e8e8e8" />
<rect x="517" y="322" width="1" height="3" fill="#e8e8e8" />
<rect x="529" y="322" width="1" height="3" fill="#e8e8e8" />
<rect x="541" y="322" width="1" height="3" fill="#e8e8e8" />
<rect x="553" y="322" width="1" height="3" fill="#e8e8e8" />
<rect x="565" y="322" width="1" height="3" fill="#e8e8e8" />
<rect x="577" y="322" width="1" height="3" fill="#e8e8e8" />
<rect x="589" y="322" width="1" height="3" fill="#e8e8e8" />
<rect x="601" y="322" width="1" height="3" fill="#e8e8e8" />
<rect x="613" y="322" width="1" height="3" fill="#e8e8e8" />
<rect x="625" y="322" width="1" height="3" fill="#e8e8e8" />
<rect x="637" y="322" width="1" height="3" fill="#e8e8e8" />
<rect x="649" y="322" width="1" height="3" fill="#e8e8e8" />
<rect x="661" y="322" width="1" height="3" fill="#e8e8e8" />
<rect x="673" y="322" width="1" height="3" fill="#e8e8e8" />
<rect x="685" y="322" width="1" height="3" fill="#e8e8e8" />
<rect x="697" y="322" width="1" height="3" fill="#e8e8e8" />
<rect x="709" y="322" width="1" height="3" fill="#e8e8e8" />
<rect x="721" y="322" width="1" height="3" fill="#e8e8e8" />
<rect x="733" y="322" width="1" height="3" fill="#e8e8e8" />
<rect x="745" y="322" width="1" height="3" fill="#e8e8e8" />
<rect x="757" y="322" width="1" height="3" fill="#e8e8e8" />
<rect x="769" y="322" width="1" height="3" fill="#e8e8e8" />
<rect x="781" y="322" width="1" height="3" fill="#e8e8e8" />
<rect x="793" y="322" width="1" height="3" fill="#e8e8e8" />
<rect x="805" y="322" width="1" height="3" fill="#e8e8e8" />
<rect x="817" y="322" width="1" height="3" fill="#e8e8e8" />
<rect x="829" y="322" width="1" height="3" fill="#e8e8e8" />
<rect x="841" y="322" width="1" height="3" fill="#e8e8e8" />
<rect x="853" y="322" width="1" height="3" fill="#e8e8e8" />
<rect x="865" y="322" width="1" height="3" fill="#e8e8e8" />
<rect x="877" y="322" width="1" height="3" fill="#e8e8e8" />
<rect x="889" y="322" width="1" height="3" fill="#e8e8e8" />
<rect x="901" y="322" width="1" height="3" fill="#e8e8e8" />
<rect x="913" y="322" width="1" height="3" fill="#e8e8e8" />
<rect x="925" y="322" width="1" height="3" fill="#e8e8e8" />
<rect x="175" y="323" width="13" height="1" fill="#e8e8e8" />
<rect x="181" y="317" width="1" height="13" fill="#e8e8e8" />
<rect x="775" y="323" width="13" height="1" fill="#e8e8e8" />
<rect x="781" y="317" width="1" height="13" fill="#e8e8e8" />
<line x1="486.7" y1="25" x2="486.7" y2="621" stroke="#9a2cc0" stroke-width="1.3" stroke-dasharray="2.6 2" shape-rendering="auto"/>
<line x1="503.2" y1="25" x2="503.2" y2="621" stroke="#9a2cc0" stroke-width="1.3" stroke-dasharray="2.6 2" shape-rendering="auto"/>
<rect x="229" y="325" width="272" height="3" fill="#ecec18" />
<rect x="229" y="321" width="1" height="4" fill="#e4e070" />
<rect x="232" y="322" width="1" height="3" fill="#e4e070" />
<rect x="239" y="323" width="1" height="2" fill="#e4e070" />
<rect x="243" y="321" width="1" height="4" fill="#e4e070" />
<rect x="247" y="322" width="1" height="3" fill="#e4e070" />
<rect x="255" y="323" width="1" height="2" fill="#e4e070" />
<rect x="263" y="322" width="1" height="3" fill="#e4e070" />
<rect x="267" y="323" width="1" height="2" fill="#e4e070" />
<rect x="274" y="323" width="1" height="2" fill="#e4e070" />
<rect x="278" y="322" width="1" height="3" fill="#e4e070" />
<rect x="282" y="321" width="1" height="4" fill="#e4e070" />
<rect x="289" y="323" width="1" height="2" fill="#e4e070" />
<rect x="297" y="323" width="1" height="2" fill="#e4e070" />
<rect x="302" y="321" width="1" height="4" fill="#e4e070" />
<rect x="306" y="321" width="1" height="4" fill="#e4e070" />
<rect x="314" y="323" width="1" height="2" fill="#e4e070" />
<rect x="318" y="322" width="1" height="3" fill="#e4e070" />
<rect x="322" y="321" width="1" height="4" fill="#e4e070" />
<rect x="327" y="322" width="1" height="3" fill="#e4e070" />
<rect x="334" y="322" width="1" height="3" fill="#e4e070" />
<rect x="342" y="323" width="1" height="2" fill="#e4e070" />
<rect x="350" y="322" width="1" height="3" fill="#e4e070" />
<rect x="358" y="322" width="1" height="3" fill="#e4e070" />
<rect x="362" y="321" width="1" height="4" fill="#e4e070" />
<rect x="370" y="322" width="1" height="3" fill="#e4e070" />
<rect x="376" y="323" width="1" height="2" fill="#e4e070" />
<rect x="384" y="323" width="1" height="2" fill="#e4e070" />
<rect x="392" y="323" width="1" height="2" fill="#e4e070" />
<rect x="400" y="322" width="1" height="3" fill="#e4e070" />
<rect x="407" y="321" width="1" height="4" fill="#e4e070" />
<rect x="414" y="322" width="1" height="3" fill="#e4e070" />
<rect x="421" y="321" width="1" height="4" fill="#e4e070" />
<rect x="428" y="322" width="1" height="3" fill="#e4e070" />
<rect x="434" y="322" width="1" height="3" fill="#e4e070" />
<rect x="439" y="322" width="1" height="3" fill="#e4e070" />
<rect x="443" y="321" width="1" height="4" fill="#e4e070" />
<rect x="449" y="321" width="1" height="4" fill="#e4e070" />
<rect x="456" y="322" width="1" height="3" fill="#e4e070" />
<rect x="463" y="322" width="1" height="3" fill="#e4e070" />
<rect x="471" y="323" width="1" height="2" fill="#e4e070" />
<rect x="475" y="321" width="1" height="4" fill="#e4e070" />
<rect x="482" y="322" width="1" height="3" fill="#e4e070" />
<rect x="488" y="322" width="1" height="3" fill="#e4e070" />
<rect x="495" y="323" width="1" height="2" fill="#e4e070" />
<rect x="486.5" y="306" width="1.5" height="20" fill="#f0d050" />
<rect x="500" y="265" width="1.5" height="62" fill="#ecec18" />
<line x1="501.2" y1="266" x2="502.6" y2="231" stroke="#f0a878" stroke-width="1.4" shape-rendering="auto"/>
<rect x="503" y="229" width="235" height="3" fill="#ecec18" />
<rect x="514" y="227" width="1" height="2" fill="#e4e070" />
<rect x="517" y="227" width="1" height="2" fill="#e4e070" />
<rect x="519" y="227" width="1" height="2" fill="#e4e070" />
<rect x="534" y="227" width="1" height="2" fill="#e4e070" />
<rect x="536" y="227" width="1" height="2" fill="#e4e070" />
<rect x="540" y="227" width="1" height="2" fill="#e4e070" />
<rect x="549" y="227" width="1" height="2" fill="#e4e070" />
<rect x="557" y="227" width="1" height="2" fill="#e4e070" />
<rect x="569" y="227" width="1" height="2" fill="#e4e070" />
<rect x="602" y="227" width="1" height="2" fill="#e4e070" />
<rect x="627" y="227" width="1" height="2" fill="#e4e070" />
<rect x="641" y="227" width="1" height="2" fill="#e4e070" />
<rect x="658" y="227" width="1" height="2" fill="#e4e070" />
<rect x="661" y="227" width="1" height="2" fill="#e4e070" />
<rect x="669" y="227" width="1" height="2" fill="#e4e070" />
<rect x="676" y="227" width="1" height="2" fill="#e4e070" />
<rect x="686" y="227" width="1" height="2" fill="#e4e070" />
<rect x="688" y="227" width="1" height="2" fill="#e4e070" />
<rect x="731" y="227" width="1" height="2" fill="#e4e070" />
<rect x="538" y="232" width="1" height="3" fill="#e4e070" />
<rect x="569" y="232" width="1" height="3" fill="#e4e070" />
<rect x="574" y="232" width="1" height="3" fill="#e4e070" />
<rect x="634" y="232" width="1" height="3" fill="#e4e070" />
<rect x="667" y="232" width="1" height="3" fill="#e4e070" />
<rect x="677" y="232" width="1" height="3" fill="#e4e070" />
<rect x="727" y="232" width="1" height="3" fill="#e4e070" />
<rect x="737" y="229" width="1.8" height="99" fill="#ecec18" />
<rect x="737" y="325" width="197" height="3" fill="#ecec18" />
<rect x="742" y="323" width="1" height="2" fill="#e4e070" />
<rect x="750" y="321" width="1" height="4" fill="#e4e070" />
<rect x="756" y="322" width="1" height="3" fill="#e4e070" />
<rect x="762" y="321" width="1" height="4" fill="#e4e070" />
<rect x="769" y="321" width="1" height="4" fill="#e4e070" />
<rect x="776" y="323" width="1" height="2" fill="#e4e070" />
<rect x="780" y="322" width="1" height="3" fill="#e4e070" />
<rect x="787" y="323" width="1" height="2" fill="#e4e070" />
<rect x="791" y="322" width="1" height="3" fill="#e4e070" />
<rect x="799" y="323" width="1" height="2" fill="#e4e070" />
<rect x="805" y="323" width="1" height="2" fill="#e4e070" />
<rect x="811" y="323" width="1" height="2" fill="#e4e070" />
<rect x="818" y="322" width="1" height="3" fill="#e4e070" />
<rect x="823" y="321" width="1" height="4" fill="#e4e070" />
<rect x="827" y="323" width="1" height="2" fill="#e4e070" />
<rect x="831" y="322" width="1" height="3" fill="#e4e070" />
<rect x="837" y="322" width="1" height="3" fill="#e4e070" />
<rect x="842" y="323" width="1" height="2" fill="#e4e070" />
<rect x="849" y="323" width="1" height="2" fill="#e4e070" />
<rect x="853" y="322" width="1" height="3" fill="#e4e070" />
<rect x="860" y="323" width="1" height="2" fill="#e4e070" />
<rect x="868" y="322" width="1" height="3" fill="#e4e070" />
<rect x="873" y="323" width="1" height="2" fill="#e4e070" />
<rect x="881" y="322" width="1" height="3" fill="#e4e070" />
<rect x="888" y="322" width="1" height="3" fill="#e4e070" />
<rect x="895" y="322" width="1" height="3" fill="#e4e070" />
<rect x="900" y="323" width="1" height="2" fill="#e4e070" />
<rect x="905" y="322" width="1" height="3" fill="#e4e070" />
<rect x="910" y="322" width="1" height="3" fill="#e4e070" />
<rect x="914" y="323" width="1" height="2" fill="#e4e070" />
<rect x="922" y="322" width="1" height="3" fill="#e4e070" />
<rect x="928" y="322" width="1" height="3" fill="#e4e070" />
</svg>
<div class="t" style="left:28.5px;top:5.2px;color:#0a1e50;font-size:19px;letter-spacing:0.6px;font-weight:normal;-webkit-text-stroke:0.5px #0a1e50;">AKTAKOM</div>
<div class="a" style="left:144.5px;top:1px;width:95.5px;height:21.5px;background:#f00000;border-radius:7px/11px;"></div>
<div class="t" style="left:167.0px;top:4.2px;color:#480000;font-size:18px;letter-spacing:1.4px;font-weight:bold;">Stop</div>
<div class="a" style="left:300.5px;top:1px;width:359px;height:22px;background:#000;border-radius:7px/11px;"></div>
<div class="a" style="left:671.5px;top:1px;width:129.5px;height:21.5px;background:#000;border-radius:7px/11px;"></div>
<div class="a" style="left:820.5px;top:1px;width:71px;height:21.5px;background:#000;border-radius:7px/11px;"></div>
<div class="t" style="left:694.0px;top:5.4px;color:#e8e8e8;font-size:18px;letter-spacing:1.4px;font-weight:normal;">-1.096s</div>
<div class="t" style="left:831.5px;top:4.5px;color:#e8e8e8;font-size:18px;letter-spacing:1.4px;font-weight:normal;">1:10</div>
<div class="a" style="left:30px;top:510px;width:226px;height:113px;background:#000;border-radius:3px;box-sizing:border-box;border:2.5px solid #8aaab8;"></div>
<div class="t" style="left:39.0px;top:517.2px;color:#dcdcdc;font-size:18px;letter-spacing:1.4px;font-weight:normal;"> x:56.00ms</div>
<div class="t" style="left:39.0px;top:543.5px;color:#dcdcdc;font-size:18px;letter-spacing:1.4px;font-weight:normal;">1/ x:17.86HZ</div>
<div class="t" style="left:39.0px;top:572.7px;color:#dcdcdc;font-size:18px;letter-spacing:1.4px;font-weight:normal;">x1:1.080s</div>
<div class="t" style="left:39.0px;top:598.5px;color:#dcdcdc;font-size:18px;letter-spacing:1.4px;font-weight:normal;">x2:1.024s</div>
<div class="a" style="left:0px;top:623px;width:383px;height:97px;background:#86b0bc;border-radius:0px;"></div>
<div class="a" style="left:1.5px;top:624px;width:249px;height:22.5px;background:#000;border-radius:5px;"></div>
<div class="a" style="left:1.5px;top:646.5px;width:249px;height:1.5px;background:#2a5060;border-radius:0px;"></div>
<div class="a" style="left:1.5px;top:648px;width:249px;height:23px;background:#000;border-radius:5px;"></div>
<div class="a" style="left:1.5px;top:673px;width:379px;height:44px;background:#000;border-radius:5px;"></div>
<div class="a" style="left:253.5px;top:623px;width:127.5px;height:47.5px;background:#000;border-radius:6px;"></div>
<div class="a" style="left:383px;top:623px;width:577px;height:22px;background:#0080e0;border-radius:0px;"></div>
<div class="a" style="left:383px;top:645px;width:575px;height:72.5px;background:#0462a2;border-radius:0px;"></div>
<div class="a" style="left:383px;top:624px;width:118.5px;height:21px;background:#000;border-radius:7px/10.5px;"></div>
<div class="a" style="left:797.5px;top:624px;width:154px;height:21px;background:#000;border-radius:7px/10.5px;"></div>
<div class="a" style="left:387px;top:648.5px;width:107px;height:67.5px;background:#0080e0;border-radius:4px;box-sizing:border-box;border-top:2px solid #50a8f0;border-left:2px solid #50a8f0;border-bottom:2px solid #003c8c;border-right:2px solid #003c8c;"></div>
<div class="a" style="left:717px;top:648.75px;width:106px;height:66.5px;background:#0080e0;border-radius:4px;box-sizing:border-box;border-top:2px solid #50a8f0;border-left:2px solid #50a8f0;border-bottom:2px solid #003c8c;border-right:2px solid #003c8c;"></div>
<div class="a" style="left:409px;top:685px;width:60px;height:24px;background:#e8e8e8;border-radius:0px;"></div>
<div class="t" style="left:414.0px;top:660.9px;color:#0a1a48;font-size:18px;letter-spacing:1.4px;font-weight:normal;-webkit-text-stroke:0.4px #0a1a48;">Type</div>
<div class="t" style="left:409.0px;top:689.2px;color:#000;font-size:18px;letter-spacing:1.4px;font-weight:normal;">Image</div>
<div class="t" style="left:743.5px;top:675.7px;color:#0a1a48;font-size:18px;letter-spacing:1.4px;font-weight:normal;-webkit-text-stroke:0.4px #0a1a48;">Save</div>
<div class="t" style="left:21.0px;top:630.0px;color:#e02020;font-size:18px;letter-spacing:1.4px;font-weight:normal;">5V-</div>
<div class="t" style="left:126.0px;top:630.5px;color:#e02020;font-size:18px;letter-spacing:1.4px;font-weight:normal;">0.00div</div>
<div class="t" style="left:21.0px;top:653.4px;color:#d4cc44;font-size:18px;letter-spacing:1.4px;font-weight:normal;">2V-</div>
<div class="t" style="left:126.0px;top:654.7px;color:#d4cc44;font-size:18px;letter-spacing:1.4px;font-weight:normal;">-0.04div</div>
<div class="t" style="left:262.0px;top:628.0px;color:#e8e8e8;font-size:18px;letter-spacing:1.4px;font-weight:normal;">(2.5KS/s)</div>
<div class="t" style="left:261.0px;top:651.4px;color:#e8e8e8;font-size:18px;letter-spacing:1.4px;font-weight:normal;">Depth:10K</div>
<div class="t" style="left:398.0px;top:627.5px;color:#e8e8e8;font-size:18px;letter-spacing:1.4px;font-weight:normal;">M:200ms</div>
<div class="t" style="left:849.0px;top:628.0px;color:#e8e8e8;font-size:18px;letter-spacing:0.9px;font-weight:normal;">10.0V</div>
<div class="t" style="left:24.5px;top:676.7px;color:#d4cc44;font-size:18px;letter-spacing:1.4px;font-weight:normal;">F:  ?</div>
<div class="t" style="left:24.5px;top:699.3px;color:#d4cc44;font-size:18px;letter-spacing:1.4px;font-weight:normal;">+D:51.0%</div>
<div class="t" style="left:216.0px;top:676.7px;color:#d4cc44;font-size:18px;letter-spacing:1.4px;font-weight:normal;">Vk:2.077v</div>
<div class="t" style="left:216.0px;top:699.3px;color:#d4cc44;font-size:18px;letter-spacing:1.4px;font-weight:normal;">V:1.377v</div>







<svg class="a" style="left:0;top:0" width="960" height="720" viewBox="0 0 960 720"><rect x="312" y="10.3" width="337" height="1.6" fill="#c8d028"/>
<path d="M334.5 3.5 H332.5 V21.5 H334.5" fill="none" stroke="#d8d8d8" stroke-width="2"/>
<path d="M455 3.5 H457 V21.5 H455" fill="none" stroke="#d8d8d8" stroke-width="2"/>
<path d="M436.5 2.2 H443 V4.5 H440.5 V7.5 H439 V4.5 H436.5 Z" fill="#d020e0"/>
<path d="M677.3 4.7 H691.2 V16.5 L688 19.7 H680.5 L677.3 16.5 Z" fill="none" stroke="#8a3ee0" stroke-width="2"/>
<path d="M679 7.7 H688.7 V9.7 H685.2 V16.7 H682.9 V9.7 H679 Z" fill="#c448f8"/>
<path d="M909.5 10 L919.5 9.5 L921.5 15 L911.5 19 Z" fill="#d8b8d0" stroke="#1a3a9a" stroke-width="1.2"/>
<path d="M912.5 12.5 L918 12 L919 14.8 L913.5 16.5 Z" fill="#504060"/>
<path d="M907 6 Q909 3.5 912 4 Q915 3 916 6 Q915.5 9 913 10 L911.5 13 L910 10 Q907 9 907 6 Z" fill="#40c030"/>
<path d="M41.2 529.6 L46 521 L50.8 529.6 Z" fill="none" stroke="#dcdcdc" stroke-width="1.3"/>
<path d="M65.2 555.9 L70 547.3 L74.8 555.9 Z" fill="none" stroke="#dcdcdc" stroke-width="1.3"/>
<path d="M822.5 642.3 H832 L836.6 627.2 H845.7" fill="none" stroke="#e8e8e8" stroke-width="1.6"/>
<path d="M0 315.8 H16.5 L23.3 326.3 L16.5 336.5 H0" fill="#000" stroke="#d8e040" stroke-width="1.6"/>
<circle cx="12" cy="636.3" r="9.5" fill="#f01010"/><path d="M9.4 634.6999999999999 L13 631.0999999999999 V641.9" fill="none" stroke="#400000" stroke-width="2.3"/>
<circle cx="12.3" cy="659.8" r="9.5" fill="#f0e820"/><text x="12.3" y="665.3" text-anchor="middle" fill="#101000" style="font:bold 16px 'Liberation Sans',sans-serif">2</text>
<circle cx="11.5" cy="684" r="9.5" fill="#f0e820"/><text x="11.5" y="689.5" text-anchor="middle" fill="#101000" style="font:bold 16px 'Liberation Sans',sans-serif">2</text>
<circle cx="11.5" cy="706.5" r="9.5" fill="#f0e820"/><text x="11.5" y="712.0" text-anchor="middle" fill="#101000" style="font:bold 16px 'Liberation Sans',sans-serif">2</text>
<circle cx="202" cy="684.5" r="9.5" fill="#f0e820"/><text x="202" y="690.0" text-anchor="middle" fill="#101000" style="font:bold 16px 'Liberation Sans',sans-serif">2</text>
<circle cx="202" cy="706" r="9.5" fill="#f0e820"/><text x="202" y="711.5" text-anchor="middle" fill="#101000" style="font:bold 16px 'Liberation Sans',sans-serif">2</text>
<circle cx="810.5" cy="634" r="9.5" fill="#f01010"/><path d="M807.9 632.4 L811.5 628.8 V639.6" fill="none" stroke="#300000" stroke-width="2.3"/></svg>
<div class="t" style="left:3.0px;top:318.4px;color:#e0e040;font-size:19px;letter-spacing:0px;font-weight:normal;font-family:"Liberation Sans",sans-serif;">2</div>
<div class="a" style="left:0;top:0;width:960px;height:1.4px;background:rgba(0,4,28,0.88)"></div>
</body></html>
